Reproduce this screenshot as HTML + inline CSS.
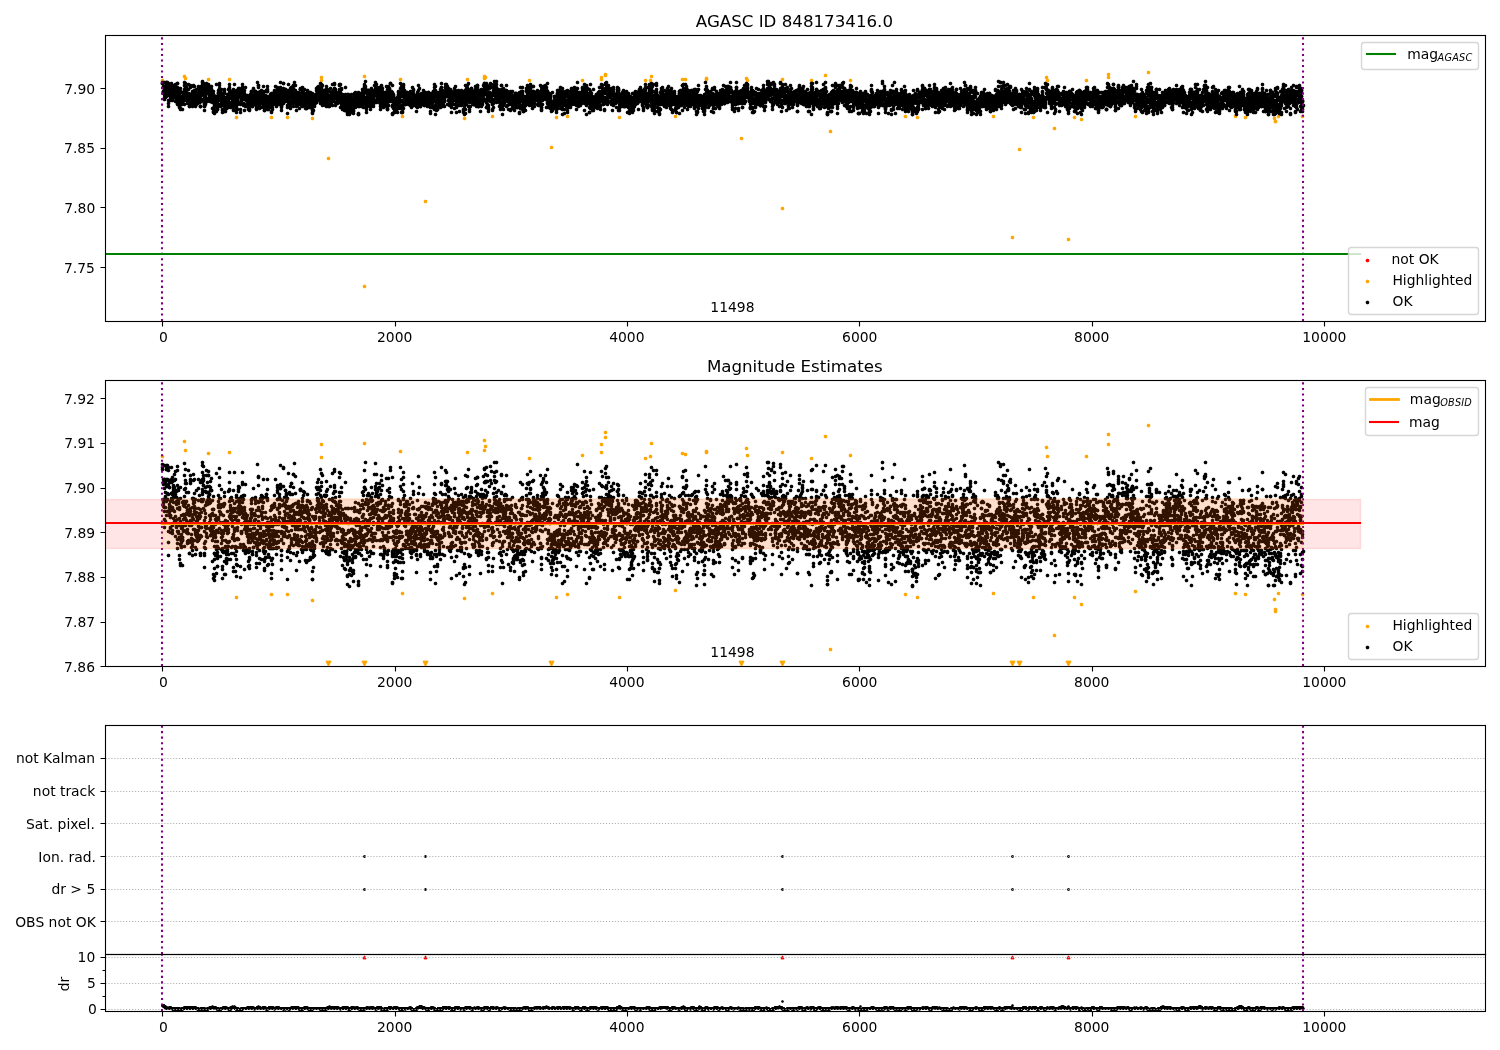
<!DOCTYPE html>
<html lang="en"><head><meta charset="utf-8"><title>AGASC ID 848173416.0</title>
<style>
html,body{margin:0;padding:0;background:#fff}
svg{display:block;will-change:transform}
text{font-family:"DejaVu Sans","Liberation Sans",sans-serif;font-size:13.889px;fill:#000}
.ti{font-size:16.667px}
.sub{font-size:9.722px;font-style:oblique;letter-spacing:.2px}
.tk{stroke:#000;stroke-width:1.111;fill:none}
.sp{stroke:#000;stroke-width:1.111;fill:none;stroke-linejoin:miter}
.pd{stroke:#800080;stroke-width:2.083;stroke-dasharray:2.083 3.4375;fill:none}
.gr{stroke:#b0b0b0;stroke-width:1.111;stroke-dasharray:1.111 1.833;fill:none}
.lf{fill:#fff;fill-opacity:.8;stroke:#ccc;stroke-opacity:.8;stroke-width:1.389}
.mk{fill:none;stroke:none;marker:url(#mk)}
.mo{fill:none;stroke:none;marker:url(#mo)}
.m4{fill:none;stroke:none;marker:url(#m4)}
.m3{fill:none;stroke:none;marker:url(#m3)}
.tu{fill:none;stroke:none;marker:url(#tu)}
.tv{fill:none;stroke:none;marker:url(#tv)}
.lm{fill:none;stroke:none}
</style></head>
<body>
<svg width="1500" height="1050" viewBox="0 0 1500 1050">
<defs>
<clipPath id="c1"><rect x="105" y="35" width="1380" height="286"/></clipPath>
<clipPath id="c2"><rect x="105" y="380" width="1380" height="286"/></clipPath>
<clipPath id="c3"><rect x="105" y="725" width="1380" height="229"/></clipPath>
<clipPath id="c4"><rect x="105" y="954" width="1380" height="57"/></clipPath>
<marker id="mk" markerUnits="userSpaceOnUse" markerWidth="9" markerHeight="9" overflow="visible"><path d="M-0.5 -1.5h1v1h-1zM-1.5 -0.5h3v1h-3zM-0.5 0.5h1v1h-1z" fill="#000"/><path d="M-1.5 -1.5h1v1h-1zM0.5 -1.5h1v1h-1zM-1.5 0.5h1v1h-1z" fill="#000" fill-opacity=".9"/><path d="M0.5 0.5h1v1h-1z" fill="#000" fill-opacity=".9"/><path d="M-0.5 -2.5h1v1h-1zM-2.5 -0.5h1v1h-1z" fill="#000" fill-opacity=".27"/><path d="M1.5 -0.5h1v1h-1zM-0.5 1.5h1v1h-1z" fill="#000" fill-opacity=".26"/><path d="M-1.5 -2.5h1v1h-1zM0.5 -2.5h1v1h-1zM-2.5 -1.5h1v1h-1zM1.5 -1.5h1v1h-1zM-2.5 0.5h1v1h-1zM1.5 0.5h1v1h-1zM-1.5 1.5h1v1h-1zM0.5 1.5h1v1h-1z" fill="#000" fill-opacity=".07"/></marker>
<marker id="mo" markerUnits="userSpaceOnUse" markerWidth="9" markerHeight="9" overflow="visible"><path d="M-0.5 -1.5h1v1h-1zM-1.5 -0.5h3v1h-3zM-0.5 0.5h1v1h-1z" fill="#ffa500"/><path d="M-1.5 -1.5h1v1h-1zM0.5 -1.5h1v1h-1zM-1.5 0.5h1v1h-1z" fill="#ffa500" fill-opacity=".9"/><path d="M0.5 0.5h1v1h-1z" fill="#ffa500" fill-opacity=".9"/><path d="M-0.5 -2.5h1v1h-1zM-2.5 -0.5h1v1h-1z" fill="#ffa500" fill-opacity=".27"/><path d="M1.5 -0.5h1v1h-1zM-0.5 1.5h1v1h-1z" fill="#ffa500" fill-opacity=".26"/><path d="M-1.5 -2.5h1v1h-1zM0.5 -2.5h1v1h-1zM-2.5 -1.5h1v1h-1zM1.5 -1.5h1v1h-1zM-2.5 0.5h1v1h-1zM1.5 0.5h1v1h-1zM-1.5 1.5h1v1h-1zM0.5 1.5h1v1h-1z" fill="#ffa500" fill-opacity=".07"/></marker>
<marker id="mr" markerUnits="userSpaceOnUse" markerWidth="9" markerHeight="9" overflow="visible"><path d="M-0.5 -1.5h1v1h-1zM-1.5 -0.5h3v1h-3zM-0.5 0.5h1v1h-1z" fill="#f00"/><path d="M-1.5 -1.5h1v1h-1zM0.5 -1.5h1v1h-1zM-1.5 0.5h1v1h-1z" fill="#f00" fill-opacity=".9"/><path d="M0.5 0.5h1v1h-1z" fill="#f00" fill-opacity=".9"/><path d="M-0.5 -2.5h1v1h-1zM-2.5 -0.5h1v1h-1z" fill="#f00" fill-opacity=".27"/><path d="M1.5 -0.5h1v1h-1zM-0.5 1.5h1v1h-1z" fill="#f00" fill-opacity=".26"/><path d="M-1.5 -2.5h1v1h-1zM0.5 -2.5h1v1h-1zM-2.5 -1.5h1v1h-1zM1.5 -1.5h1v1h-1zM-2.5 0.5h1v1h-1zM1.5 0.5h1v1h-1zM-1.5 1.5h1v1h-1zM0.5 1.5h1v1h-1z" fill="#f00" fill-opacity=".07"/></marker>
<marker id="m4" markerUnits="userSpaceOnUse" markerWidth="9" markerHeight="9" overflow="visible"><path d="M-0.5 -0.5h1v1h-1z" fill="#000"/><path d="M-0.5 -1.5h1v1h-1zM-1.5 -0.5h1v1h-1zM0.5 -0.5h1v1h-1zM-0.5 0.5h1v1h-1z" fill="#000" fill-opacity=".88"/><path d="M-1.5 -1.5h1v1h-1zM0.5 -1.5h1v1h-1zM-1.5 0.5h1v1h-1zM0.5 0.5h1v1h-1z" fill="#000" fill-opacity=".41"/></marker>
<marker id="m3" markerUnits="userSpaceOnUse" markerWidth="9" markerHeight="9" overflow="visible"><path d="M-0.5 -0.5h1v1h-1z" fill="#000"/><path d="M-0.5 -1.5h1v1h-1zM-1.5 -0.5h1v1h-1zM0.5 -0.5h1v1h-1zM-0.5 0.5h1v1h-1z" fill="#000" fill-opacity=".78"/><path d="M-1.5 -1.5h1v1h-1zM0.5 -1.5h1v1h-1zM-1.5 0.5h1v1h-1zM0.5 0.5h1v1h-1z" fill="#000" fill-opacity=".31"/></marker>
<marker id="tu" markerUnits="userSpaceOnUse" markerWidth="9" markerHeight="9" overflow="visible"><path d="M-0.5 -1.5h1v1h-1zM-0.5 -0.5h1v1h-1zM-1.5 0.5h3v1h-3z" fill="#f00"/><path d="M-1.5 -0.5h1v1h-1z" fill="#f00" fill-opacity=".88"/><path d="M0.5 -0.5h1v1h-1z" fill="#f00" fill-opacity=".88"/><path d="M-0.5 1.5h1v1h-1z" fill="#f00" fill-opacity=".4"/><path d="M-1.5 -1.5h1v1h-1z" fill="#f00" fill-opacity=".38"/><path d="M0.5 -1.5h1v1h-1zM-1.5 1.5h1v1h-1zM0.5 1.5h1v1h-1z" fill="#f00" fill-opacity=".38"/><path d="M-2.5 0.5h1v1h-1z" fill="#f00" fill-opacity=".28"/><path d="M1.5 0.5h1v1h-1z" fill="#f00" fill-opacity=".28"/><path d="M-0.5 -2.5h1v1h-1z" fill="#f00" fill-opacity=".25"/><path d="M-2.5 1.5h1v1h-1zM1.5 1.5h1v1h-1z" fill="#f00" fill-opacity=".05"/><path d="M-2.5 -0.5h1v1h-1z" fill="#f00" fill-opacity=".02"/><path d="M1.5 -0.5h1v1h-1z" fill="#f00" fill-opacity=".02"/><path d="M-1.5 -2.5h1v1h-1zM0.5 -2.5h1v1h-1z" fill="#f00" fill-opacity=".01"/></marker>
<marker id="tv" markerUnits="userSpaceOnUse" markerWidth="9" markerHeight="9" overflow="visible"><path d="M-2.5 -2.5h5v1h-5zM-0.5 -1.5h1v1h-1zM-1.5 -0.5h3v1h-3zM-0.5 0.5h1v1h-1zM-0.5 1.5h1v1h-1z" fill="#ffa500"/><path d="M-1.5 -1.5h1v1h-1zM0.5 -1.5h1v1h-1z" fill="#ffa500" fill-opacity=""/><path d="M-2.5 -1.5h1v1h-1zM1.5 -1.5h1v1h-1zM-1.5 0.5h1v1h-1zM0.5 0.5h1v1h-1z" fill="#ffa500" fill-opacity=".88"/><path d="M-1.5 -3.5h3v1h-3z" fill="#ffa500" fill-opacity=".39"/><path d="M-2.5 -0.5h1v1h-1zM-1.5 1.5h1v1h-1z" fill="#ffa500" fill-opacity=".38"/><path d="M1.5 -0.5h1v1h-1zM0.5 1.5h1v1h-1z" fill="#ffa500" fill-opacity=".37"/><path d="M-2.5 -3.5h1v1h-1zM1.5 -3.5h1v1h-1z" fill="#ffa500" fill-opacity=".37"/><path d="M-3.5 -2.5h1v1h-1z" fill="#ffa500" fill-opacity=".27"/><path d="M2.5 -2.5h1v1h-1z" fill="#ffa500" fill-opacity=".27"/><path d="M-0.5 2.5h1v1h-1z" fill="#ffa500" fill-opacity=".24"/><path d="M-3.5 -3.5h1v1h-1zM2.5 -3.5h1v1h-1z" fill="#ffa500" fill-opacity=".04"/><path d="M-3.5 -1.5h1v1h-1zM2.5 -1.5h1v1h-1zM-2.5 0.5h1v1h-1zM1.5 0.5h1v1h-1z" fill="#ffa500" fill-opacity=".02"/><path d="M-1.5 2.5h1v1h-1zM0.5 2.5h1v1h-1z" fill="#ffa500" fill-opacity=".01"/></marker>
</defs>
<rect width="1500" height="1050" fill="#fff"/>
<g clip-path="url(#c1)">
<path class="mo" transform="translate(.5 .5)" d="M162 80l22-4 1 2 23 1 21 0 92-2 0 3 43-4 36 3-164 38 35 0 16 0 25 1 90-2 65-37 17-3 1 1-1 1 45 2 53 0 23-6 0 1-4 2 0 2 44 1-181 38 28-2 64 1 11-1 52 1 32-41-1 4 32-1 3 0 21-1 0 1 40-1 1 2 35-1 29 1 14-5 25 5-175 36 155 15 216-54 1 3 39 0 22-6 0 3-203 39 12 1 76-1 40 1 41 0 7 2-27 9 94-56-13 44 100 0 10 1 33-1-4 2 1 3 0 0 27-5-974 42 36 128 61-85 126-54 190-9 41 70 230 29 7-88 49 90"/>
<path class="mk" transform="translate(.5 .5)" d="M162 83l0-1 0 1 1 9 0-1 0-4 0 6 0-2 0 1 0-6 0 1 1 1 0-2 0 8 0-1 0 6 0-13 0-4 0 4 0 11 1 0 0-7 0-1 1-7 0 1 0 3 0 10 0-14 0 1 0 9 1-1 0-3 0 6 0-12 0 1 0 11 0-3 1 9 0 3 0 3 0-20 0-3 0 7 0-6 1 2 0 9 0-1 0 1 0-7 1 8 0 3 0 1 0-4 0-4 0 4 0 3 1-12 0-4 0 3 0 4 0 0 1 9 0-5 0-7 0 11 0 2 0-7 0-8 0 6 1 1 0 4 1-11 0 3 0 9 0-3 0-5 1 8 0-1 0 5 0-4 0-7 0-6 0 2 1 7 0-4 0 9 0-6 0 7 1-2 0-10 0 7 0-11 0 0 0 20 0 1 0-2 1-13 0 11 0-9 0-3 1 8 0-2 0 7 0 6 0-9 0 8 0-12 0-1 0 8 1-10 0 12 0 5 0 1 0-6 0-15 1 8 0 3 0 5 0 0 1-2 0-1 0 0 0-3 0 11 0-7 0 0 0-10 1 3 0 5 0 0 0-2 0-5 0-1 1-1 0 5 0 8 0-11 0-4 0-4 0-3 1 5 0 1 0 4 0-6 0-3 1 4 0 2 0 4 0 4 0 2 0-4 0-3 0 8 1 0 0 2 0 1 0-3 1 2 0-9 0 7 0-16 0 5 0 8 1-3 0 0 0 9 0 3 0-12 0 4 0 8 1-12 0-8 0 0 0 1 0-2 0 12 0-3 0 8 1-1 0 3 0-6 0 0 1 6 0-2 0-11 0 11 0 3 0 1 0-10 0-3 1 6 0-2 0-6 0-5 0-1 1 1 0 4 0 2 0 3 0-2 0 6 0 3 1 4 0-2 0-13 0 3 1 10 0-3 0-12 0 6 0 4 0-2 1 6 1-9 0-8 0 6 0 10 0-6 0 3 0-11 1 14 0-12 0 6 0 6 0-3 1-3 0-9 0 7 0 7 0 5 0 0 0 0 0-5 1-2 0-4 0-9 0 15 0-9 0 7 0-8 1-2 0-5 0-2 0-1 0 8 0 3 0-6 1 0 0 8 0-3 0-6 0-2 0 3 0 3 1 11 0 4 0 2 0 4 0-4 0-3 0-6 1-2 0-2 0 3 0 6 0-14 0 10 0 6 0-5 0-10 1 12 0-2 0-7 0-9 0 7 0-5 0 13 1 3 0-8 0-6 1 2 0 3 0-7 0-1 0 1 1 6 0 4 0 4 0-2 0-5 1-4 0 13 0 0 0-4 0-5 0-5 1 2 0-3 0 9 0-6 0 12 1-7 0-2 0 6 0 4 0-3 0-4 0 13 1 3 0-12 0 13 0-18 0 0 0 1 0-4 1 13 0 3 0 3 0 3 0-1 0-6 0 0 0-6 1 3 0 3 0-5 0 0 0-4 0-1 0 2 1-2 0 1 0-13 0 16 0 11 1-2 0-9 0 2 0 4 0 3 0-2 0 0 0-3 1 0 0-7 0-4 0 3 0-4 0 8 0-10 0 14 0-11 1 6 0-4 0-7 0-5 0 2 1 21 0-9 0-6 0 7 1 7 0-12 0-4 0 6 0 5 0 3 0-2 1-1 0 4 0 6 0 2 0-3 0-4 0-3 0-9 1 0 0 5 0 7 0-12 0 3 0-3 0 4 1-8 0 1 0 21 0-18 0 7 0 5 0 3 0-16 1 19 0-14 0 7 0-2 0 2 0-5 1 1 0 8 0 0 0 0 0-1 1-4 0-6 0 8 0-5 0-6 1 13 0-1 0-2 0-5 0 1 0-11 0 9 1 4 0-13 0 7 0-4 0-3 0-2 0-3 1 23 0-12 0 0 0-2 0-2 1 15 0-2 0-7 0 1 0-3 0-4 1 6 0 4 0-3 0 6 0-12 0 10 1-8 0 12 0-6 0-11 0 20 0 1 1-8 0-10 0-8 0 12 1 1 0-3 0 16 0-4 0-2 0-2 0-5 0 2 1 8 0-17 0 2 0 13 0 4 0 3 0-21 1 18 0-5 0-2 0 0 0-3 0-4 0 4 0-2 1 5 0-5 0-3 0-2 0-3 0-1 0 1 1 6 0-3 0 0 0-4 1 7 0-4 0 13 0 5 0 3 0-9 1-3 0 0 0 0 0-10 0 8 0 2 0-6 1 2 0-5 0-1 0-3 0-3 0 3 1 7 0 0 0-3 0 14 0-2 0-13 0 14 0-6 1-8 0 9 0-6 0 1 0 3 0 7 0 6 1-5 0-1 0-9 0-8 0 12 0 6 0 1 1-6 0 0 0 5 0-5 1-3 0 2 0-2 0-2 0 6 0 4 1 3 0 1 0-7 0 1 1 4 0 2 0 1 0-3 0-2 1-5 0 1 0-7 0 3 0-1 0 7 0-5 0 1 1-7 0 3 0 0 0-4 0 0 0 3 1 0 0-3 0 10 0 5 0 0 0-1 1-4 0-3 0 0 0 6 0-6 0 6 0-16 1 15 0-2 0-6 0 1 1-4 0-1 0 6 0-6 0 4 0 3 0-7 1 12 0 3 0 2 0 1 0-4 0-5 0-6 1 6 0 0 0 0 0 3 0-21 1 14 0-11 0 7 0 6 0-6 0-5 0-2 0 12 1 6 0-9 0 9 0 4 0 1 0-3 1-3 0-2 0 2 0-11 0 7 0 1 1 4 0-13 0 2 0 15 0-11 0-1 1-1 0-3 0 0 0 2 0 3 0-1 1 6 0 0 0-15 0 12 0 7 0-13 0 12 0-4 1 0 0 4 0 3 0 3 0 0 0-2 0-1 1-2 0-9 0 0 0-1 0-4 0 5 1 6 0 1 0-5 0-8 0 1 0-1 0 17 0-7 0 2 1-16 0 5 0-2 0 8 0-1 0-5 0 18 1-3 0-2 0-7 0 1 0 11 0-5 1 3 0-6 0 0 0-1 1 4 0-10 0 10 0-8 0 2 1-4 0 9 0-10 0 14 0 5 0-1 1-4 0-3 0-3 0 8 0-9 0-2 0-5 1 11 0-1 0-5 0 2 0 3 0-7 0-3 0 0 1-3 0 3 0 0 0 3 0-4 1 8 0 0 0 3 0-17 0 10 1 4 0 4 0 2 0-2 0-1 0-5 1-7 0 3 0 0 0-5 0 0 0-2 0 1 0 3 1 10 0 3 0-4 0-2 0-1 0 5 0-5 0 6 1-8 0 0 0 2 0-7 0 3 1-2 0-3 0-1 0-5 0 6 0 0 0 5 1 7 0 0 0 2 0 3 0 1 0 4 0-3 0-2 0-3 1-6 0 2 0 0 0-5 0-2 0 2 1-5 0-5 0 0 0 20 0-6 1 4 0-1 0-5 0-4 1 10 0-5 0 1 0-4 0-4 0 0 1 1 0 4 0 5 0-9 0 0 1 1 0 6 0 4 0 4 0 2 0 6 1-20 0-9 0 17 0-5 0 1 0 7 0-10 0 6 1-6 0 10 0-3 0-11 0 6 0-6 1-2 0 9 0-7 0 16 0 2 0-15 1 4 0 6 0 0 0-16 0 13 0 2 0 0 0-15 1 11 0-4 0-1 0 3 0-3 0-3 1-5 0 0 0 3 0 5 0 13 0-3 0-9 1 2 0 6 0-4 0 3 0 0 0-19 1 10 0 6 0-13 0 5 0 5 0 4 1 3 0-10 0 11 0-8 0 7 0 1 0 0 0 7 0-4 1-1 0-6 0 0 0-2 1-4 0-1 0 3 0 7 0 2 1-6 0 6 0 4 0-6 0-9 0 1 0 5 0-3 1-8 0 1 0 0 0 0 1 4 0 12 0-9 0 5 0-8 0 6 0 3 1 4 0-1 0-2 0-12 0-4 0 5 1 7 0-5 0-5 0 9 0-8 0 6 1-7 0 5 0 2 0 4 0-7 0 12 1-7 0 6 0-3 0 7 0-7 0 1 1 0 0 3 0 3 0 0 0-6 0-9 0 3 1-6 0 9 0-5 0-2 0-1 1 5 0 3 0-3 0 8 0 3 1-12 0 2 0-5 0 11 0-2 1 4 0 2 0 0 0 0 0-4 0-3 0-8 1 8 0-2 0 6 0-10 0 0 1 8 0-6 0-3 0 14 0 3 0 3 0-1 1-2 0-4 0 0 0-7 0-3 1 1 0 6 0-3 0 4 0 2 0-2 1-8 0 0 0-2 1 6 0 2 0-12 0 12 0 0 0-14 0 10 0-4 0 1 1-1 0-1 0-2 0-2 0-2 0 1 0 4 0 1 0 0 1 0 0-7 0 7 0-2 1-3 0 9 0-1 0 3 0 1 0-5 1 5 0-2 0 5 0-13 0-1 0-6 1 1 0 3 0 4 0-3 0 7 0-2 1 9 0-2 0-15 0 11 0 4 0 3 0 2 0-13 0 0 1 12 0-1 0-6 0 4 1-11 0 0 0 3 0 0 0 2 1 2 0-2 0 4 0 4 0-13 0 15 0-15 1 0 0 15 0-12 0-4 0 3 0-6 0 20 0-5 1-7 0 8 0 0 0 0 0-3 0-10 1 7 0 3 0-2 0 8 0 1 0-5 1 4 0 1 0-11 0-4 0 4 1-7 0 13 0 3 0-1 0-5 1-3 0 7 0-4 0 3 0-8 1 8 0-9 0-8 0 7 0 14 0-11 1-2 0 6 0 2 0 1 0-11 0 6 1-13 0 1 0 4 0 7 0-6 0-1 1 4 0 0 0 10 0-4 0 7 0-14 0-2 1 9 0 4 0-5 0-3 1 8 0-3 0 4 0-3 0-4 0 6 0-3 1-6 0-1 1-2 0-5 0-1 0 5 0 10 0-3 0 0 0-4 1 1 0 0 0 4 0 5 0 5 0-15 0-8 1 13 0-8 0 6 0 9 0-1 0-15 0 12 1 5 0 4 0-8 0-7 0 5 0 4 1-8 0 0 0 4 0 8 1 0 0-2 0-4 0 9 0-3 0-11 1 5 0-4 0-10 0 7 0 8 0-5 0 13 0-15 0 8 1 3 0 0 0-6 0 6 0 1 1 5 0 2 0-5 0 3 0-8 0-10 0 2 1 8 0 0 0-2 0-8 0 6 0-2 1 2 0 7 0 4 0 3 0-4 0-2 1 2 0-5 0-3 0-5 0-1 1 16 0-18 0 5 1 11 0 0 0-8 0-2 0 7 0-1 0-7 0 5 0 4 1 3 0 2 0-3 0-3 0-4 0-1 0-5 0 3 1-7 0 4 0-2 0 3 0-4 1 3 0-5 0 13 0 0 0 2 0-1 1-3 0-2 0-3 0 2 0 1 1 4 0-7 0 7 0-8 0-3 0 1 1-3 0 22 0-13 0 13 0-1 0-7 1-3 0-5 0 8 0-11 1-2 0 7 1 5 0 1 0-3 0-6 1 2 0 2 0-8 0 3 0 0 0-3 0-4 0 3 1-2 0 7 0-2 0-6 0 5 0 10 0 3 1-6 0 2 0-15 0 0 0-2 0-2 1-3 0 5 0 2 0 4 0 7 0-2 0-5 1 12 0-13 0 7 0 3 0 4 0 2 0 5 0-3 1-4 0-3 0-5 0-3 0-4 0 3 1-3 0 7 0 1 0 2 0-8 0-2 0 4 1 8 0-12 0 4 0 8 0 4 0-9 1 3 0 2 0 3 0 0 0 4 1-21 0 4 0 3 0 11 0-7 0-8 0 5 1-6 0 1 0 12 0-3 0-7 1 11 0-8 0 1 0 1 0 8 1-4 0-9 0 2 0 0 0-10 0 15 1-5 0 0 0 0 0-4 0 9 0-12 0-6 0 7 1 13 0-15 0-3 1 10 0 4 0-5 0 3 0-7 0 10 0 0 1-11 0 11 0-11 0 3 1 5 0-9 0 12 0-7 0 10 1-12 0 12 0 7 0-5 0 2 0-7 0-5 0 2 1 3 0-14 0 1 0 5 0 11 0-13 0 17 1-18 0 6 0 0 0-2 0 10 0-5 0-6 1 10 0-5 0 8 0-5 0 7 0 0 0 1 1-3 0-3 0 5 0-2 1-10 0-2 0 0 0 4 0 3 0-3 1-10 0 13 0-3 0 6 0-4 1 4 0-3 0 3 0 3 0 4 0 0 0-1 0-2 0-17 1-3 0 19 0-9 0-5 0 2 0 1 0-1 1 8 0-11 0-2 0 11 0-10 1-6 0 0 0 13 0 0 1 2 0-5 0 8 0-3 0-5 0-2 1-6 0 20 0 1 0 0 0 7 0 1 0-9 0-13 1 2 0 6 0 8 0-6 0-5 0 8 0-10 0 1 1 4 0 12 0-1 0 1 0-9 1 2 0 3 0 0 0 3 0-1 1-12 0 3 0 2 0-5 0 2 0 11 1-14 0 8 0 1 0 2 0 4 1-7 0 3 0-14 0-2 0 4 0-5 0 11 0-7 1 2 0 5 0-2 0 1 0-3 0-1 0 3 1 8 0-2 0 1 0-14 0-1 0-4 0-5 1 3 0 3 0 11 0-5 0 6 0-7 0 7 0 4 0 7 1-1 0-5 0-5 0 4 0 2 0 5 0-16 1 12 0-5 0-12 0-2 0-4 0 19 0-20 0 3 0 4 1 2 0 4 0 0 0 1 0-2 0 8 0-11 0-3 1 12 0-3 0 5 0 0 1-11 0 3 0 5 0-9 0 11 0-3 0-8 1 0 0 6 1 6 0-6 0 3 0 2 0-9 0 0 1 1 0-2 0 5 0-2 0 1 1-6 0 10 0 4 0 0 1 2 0-1 0-2 0 0 0-5 1 3 0-4 0-1 0 2 0-5 0-7 0 5 1 7 0 6 0-11 0-4 0-1 0 4 0 5 0 7 1-3 0-3 0-4 0 8 1-8 0 3 1 7 0 1 0 0 0-1 0-4 0 10 0-12 0-3 1 11 0-15 0 10 0 2 0 0 0-10 1 2 0-2 0-4 0-5 0 9 0 5 0-1 1 3 0-7 0 2 0-8 1 12 0 3 0-3 0 4 0 2 0 0 1-13 0 2 0 4 0-2 0 7 1-5 0-2 0-1 0 7 0-8 1-2 0-3 0 11 0 3 1 1 0 0 0-2 1-7 0 0 0 2 0 3 0-2 0-3 0-3 0-1 1 1 0 2 0 5 0 0 1 3 0 2 0 0 0 1 0-3 0-1 0-3 1-7 0 0 0 5 0-3 1-1 0 3 0 10 0-7 0-6 0 10 1 3 0 5 0-5 0-4 0-2 0 7 0 6 0-7 0-9 1-1 0-2 0 11 0-3 1-6 0-3 0 10 0 4 0-14 0 6 0 8 1-6 0-10 0 7 0-7 0 8 0-7 1-2 0-6 0 3 0 8 0 11 0-9 0 4 0 8 1-19 0-4 0 5 0 3 0 7 0 4 0 9 1-7 0-4 0-8 0-3 0 14 0 4 0-10 1 0 0 0 0 9 0 0 0-7 0-5 0-4 1 2 0-3 0 5 1 8 0-4 0 2 0 3 0-1 0-1 0-3 0-5 1-3 0 5 0 3 0 6 0-15 0-3 1-6 0 4 0 10 0-1 0-2 0-7 0 16 1 3 0-5 0-2 0-9 1 14 0-12 0 2 1 3 0 4 0 5 0-10 0 4 0-2 0 3 0-4 1-6 0-1 0-3 0-3 0 3 0 7 1-2 0-8 1 2 0 10 0 8 0-10 0 2 0-8 1 1 0-1 0 1 0 11 0-9 0 9 1 5 0-4 0 3 0-10 0 10 0-13 0 8 0-2 1-8 0 4 0 3 0 2 0 7 1 2 0-3 0 0 0 8 0-9 0-10 0 1 0 7 1-10 0 6 0 2 0 4 1 1 0-5 0-5 0 6 0-8 1 16 0-13 0 1 0-8 1-2 0 14 0-8 0-2 0 10 0-2 0 6 1 3 0 5 0-6 0-4 0-10 0 7 0-6 1 3 0 9 0-4 0-5 0-3 0 0 1-3 0 1 0 1 0 6 0-6 1 5 0 14 0-14 0 5 0-2 0 5 0-9 1-2 0 6 0 3 1 1 0 0 0-14 0 2 0 13 0-2 1-2 0-3 0 1 0 0 0-3 0 0 1-2 0-2 0-1 0 2 0 16 0 3 0-2 1-9 0-4 0 6 0 3 0 3 0 5 1-1 0-4 0-11 0 5 0-13 0-5 0 5 0 5 1 5 0 4 0-3 0-2 0-6 0-5 0 4 1 6 0-2 0 0 0-5 0-3 0-3 1-2 0 17 0 6 0-11 0-3 0 3 1 14 0 2 0-20 0 11 0 4 0-11 0-4 1-2 0 5 0 12 0-8 0 2 0-2 1-2 0-5 0-2 0-1 0 0 0 11 1-5 0 0 0 9 1-5 0 2 0 1 0 3 0 0 0-2 0-11 0 0 1 13 0 0 0-8 0-4 1 1 0-4 0 9 0 5 0-8 0-9 1 2 0 3 0 6 0 9 0-6 0 5 0-4 1-8 0-3 0-5 0 0 0 2 0 5 0 4 0 3 1 1 0 6 0-3 0-2 0 5 0 0 1-1 0-2 0-3 0 2 0-9 0-3 0 5 1 16 0-13 0-2 0-3 0 3 0-6 1 11 0 5 0-1 0-15 0 3 0 2 0-6 0 1 1 11 0 0 0 3 0-2 0-4 0-7 1 4 0-10 0 5 0 0 0 8 1 1 0-5 0 6 0-6 0-3 0-4 0-4 0 0 1 3 0 5 0-2 0-2 1-4 0 7 0 3 0 9 0 5 0 0 0-5 0-3 1-10 0 5 0-9 0 10 0 10 0-19 0 11 0 7 0-8 1 11 0 2 0 2 0-6 0-5 0-6 1 4 0-6 0-4 0 4 1 5 0-11 0 15 0-4 0-14 0 11 0 2 1-9 0 12 0-6 0 0 0-9 0 12 0 5 1 2 0-4 0 5 0-11 0 16 0 1 1-3 0-4 0-3 0-10 0 5 0 5 1 1 0-10 0-7 0-3 0 4 0 6 0-5 0 2 1 6 0 1 0 3 0-4 0-7 1-3 0 3 0-6 0 10 0 11 0-13 0 9 1-2 0 0 0 3 1-6 0-4 0 4 1 3 0-5 0 15 0-5 0 1 0-9 0 5 0 2 1-3 0 0 0 4 0 3 0 1 0 4 1-20 0-4 0 0 0 5 0 4 0 0 0 12 0 2 1-14 0-1 0 0 0 10 0-7 0 2 0 10 0 6 1-5 0-4 0-5 0 2 0-14 1 2 0 4 0 3 0 2 0 4 0-12 1-1 0 10 0-4 0 4 1-7 0 13 0-9 0-6 0-6 0 5 1 10 0 5 0-8 0 4 0-10 0 3 1-1 0 3 0 5 0-1 0 9 1-12 0 4 0 2 0-3 0 4 1-13 0 18 0-15 0 0 0 4 0 12 1-17 0 4 0 7 0 0 0-3 0-7 1 1 0-4 0 17 0-3 0-6 0 9 0-8 1 2 0 6 0 0 1-5 0 4 0-11 0 14 0-14 0 3 0-3 0 9 1-3 0-3 0-6 0 0 1 3 0 2 0 9 0-14 0 12 0-4 1 2 0 4 0 0 1-6 0-2 0-4 0 3 1-3 0-3 0 12 0 0 0 9 0-1 0-6 0-4 1-6 0 12 0-21 0 14 0-3 0 3 0 7 1-8 0 5 0-11 0 3 0-6 0 3 1-3 0-4 0 4 0 2 0 2 0 6 0 5 0 3 1 2 0 0 0-3 0-5 0-1 0-3 0 6 0-6 1-3 0 13 0-3 0-4 1-3 0 0 0 11 0-5 0 0 0 0 1-1 0-14 0 11 0-5 0-5 0-3 1-3 0 2 0 4 0 2 0-6 0 16 0-6 0-2 0 8 1 0 0-4 0-12 0 4 1 7 0 7 0-4 0-6 0-5 0-3 1-3 0 4 0 4 0-3 0 1 0 3 0 2 1 8 0-1 0-4 0 2 0-2 0 7 1-5 0-14 0 22 0-11 0 0 0-3 1-8 0 5 0 3 0 9 0-12 1 8 0 7 0-14 0 11 0-7 0-4 0 0 1 3 0 5 0-8 1 7 0 0 0 0 0-3 0-4 1-2 0 1 0 2 0 5 0 6 1-2 0-5 0 0 0 4 0-7 0 11 0-11 1 0 0-1 0 1 0 3 1-12 0 6 0 9 0 3 0-5 0 2 0 4 0-1 1 4 0 3 0-1 0-2 0-3 0-8 0-6 0-3 1 0 0 3 0 6 0 4 0-7 0 11 0-8 0 2 1-5 0 2 0-9 0 0 0 4 1-1 0 0 0 3 1 4 0 2 0-2 0 3 0-4 0-10 1 4 0-2 0 5 0 3 0 12 1-16 0 1 0 11 0-6 0-14 0 19 0-11 1 9 0 6 0-6 0 5 0 2 0-5 0-8 0 6 1-2 0-1 0 0 0 7 0-11 1 2 0 0 0 3 0 3 0-7 0 2 0 8 0 4 1 3 0-2 0-3 0-5 0 1 1 3 0 3 0 2 0-2 0-4 0-12 0 9 1 7 0-6 0-1 0 0 1-1 0-4 0 11 0-10 1-1 0 0 0 9 0 0 0-2 1-3 0-4 0 9 0 2 0 3 0 2 1-4 0-7 0-8 0 8 0-2 0-6 0-3 1 7 0 6 0-13 0 13 0 2 0-10 1-3 0 7 0 6 1 3 0-10 0-9 0 5 0 1 0-8 0 14 0-10 1 12 0-8 0 8 0-5 0-5 1-5 0 3 0 10 0 5 0 3 0-8 0 0 0 13 1-17 0 0 0-3 0-2 0 12 1 0 0 9 0-13 0 9 0-11 0-2 1 0 0-3 0-1 0-1 0 2 0 9 0 3 1 1 0-3 0-3 0 0 0 3 0-7 0-5 1-1 0 1 0 2 0 12 0 2 0 3 0 2 1-15 0 6 0-12 0 16 0-12 0 5 0 0 1-5 0 10 0-8 0-2 0 10 0-8 0 0 1 6 0-11 0 8 0 3 0 1 0 3 0-3 1-2 0-3 0-8 0 2 0 0 0-5 0 1 1 6 0-4 0-2 0 6 0-4 0 13 0-7 1 3 0 2 0-14 0 15 1-10 0-6 0 9 0 7 0-2 0-3 1-5 0-4 0 2 0 0 0 7 0 6 1 5 0-7 0 3 0-3 0-14 0 7 0-5 1-2 0-6 0 10 0 4 0 5 0-3 1 3 0 5 0-2 0-3 0-2 0-5 1 2 0 9 0-13 1 13 0-12 0 0 0 2 0 3 0 5 1-3 0 3 0-2 0-5 0 6 0 0 1-2 0-8 0-2 0-3 0 1 0 5 1 3 0-6 0 8 1 12 0-14 0 7 0-8 0-1 0-6 0-4 1 3 0 5 0 8 0-2 0 3 1-12 0-3 0 15 0-16 0 5 0 15 0 9 0-11 0-11 1 3 0-2 0 10 0-10 0-5 0 8 0 2 1 1 0 4 0-6 0 2 1 4 0 9 0 0 0-11 0 6 0-18 0 5 1-10 0 7 0 5 0-1 0-3 0 13 0 3 0-6 1 4 0-7 0 0 0-1 0-5 1 3 0 6 0-4 0 6 0-4 0 10 1-21 0 18 0 3 1-12 0 7 0-3 1-6 0 11 0-2 0-3 0-2 1-4 0-2 0 0 0 3 1 8 0 0 0-2 0-1 0-3 0 9 1-2 0-6 0 2 0-2 0-6 0-2 1 10 0-11 0 6 0-10 0 6 0 3 1 9 0-5 0 6 0-9 0 12 0-12 1 4 0-1 0 1 0-7 0-3 0-4 0-3 1 1 0 3 0 6 0 7 0 0 0-4 1 0 0 7 0-13 0 6 0 1 0-5 0 10 1-4 0-6 0 10 0 6 0 1 0-10 0-9 1 12 0-1 0-5 0-9 0-4 0-1 1-1 0 3 0 3 0 5 0-5 0 2 0 1 0-3 0 12 1-1 0-1 0 4 0-3 0-5 0 10 1-9 0 7 0-7 0-3 0-5 0-2 1 5 0-1 1 8 0 0 0-1 0 1 0 4 0-7 1-3 0-2 0 4 0-5 0 16 0-3 1-6 0 15 0-10 0-1 0-7 0 8 1-13 0 2 0 16 0-2 0-8 0-4 0 8 1-5 0 2 0 1 0 1 0 4 1-4 0 2 0-2 0-3 0-1 0 9 0-9 0 4 1-4 0 13 0-13 0 0 0 8 0-8 1-1 0-6 0 2 0 2 0 10 0-12 0 6 1-3 0-2 0-2 0 1 0 1 0 3 0 3 0 14 0-12 1-4 0 6 0 4 0 3 0 3 0-16 0 13 1-2 0-7 0 4 0-8 0 2 0 6 0 4 1-5 0 1 0 4 0-12 0 11 1-13 0 5 0-3 0 7 0-3 1-8 0 5 0 10 0 0 0-3 0 4 1 0 0-14 0 14 0-7 0 1 1 6 0-6 0-5 0 8 0-6 0-2 1-3 0 3 0 7 0-11 0 14 1 7 0-6 0-6 0 1 0-3 1 9 0-14 0 4 0-2 0-1 0 12 1 0 0-3 0 1 0 9 0-3 0-14 0 4 0 1 1-1 0 10 0-12 0-2 0 8 0-3 1 7 1-7 0 3 0 4 0-15 0 19 0-10 0-4 0 8 1-13 0 4 0 10 0 3 0-3 0 0 1-8 0 7 0-10 0-2 0 2 0 1 0 5 1-11 0 8 0 2 0 3 0-4 0-8 0 11 1-11 0 1 1-1 0 3 0 3 0 4 0-6 0 0 0 7 1-11 0 0 0 8 0 9 1-20 0 1 0 3 0 2 0 6 0 0 0-11 1 8 0 0 0-9 0-2 0 9 1-5 0 0 0 3 0 0 0 4 0 1 0-1 1 7 0-1 0-9 0 7 0 0 0-12 0 11 1-6 0-3 0 6 0 10 0 2 0-3 1-9 0 2 0-11 0 8 0 6 0-12 1-3 0-1 0-3 0 9 0-3 0 3 0 0 1 10 0 2 0-5 0 0 0-6 0 3 0-2 1 5 0 1 0 3 0 3 0 0 0 0 0-1 0-3 0-5 1-11 0 0 0 10 0-4 0 8 0 4 1-13 0-7 0 10 0 3 0-7 0-2 0-5 1 3 0 8 0 5 1-17 0 5 0 2 0 3 0 6 0-6 0 13 0-3 1 5 0 2 0-1 0-6 0 1 0-7 0-11 0 11 1-6 0 8 0 2 0-4 0-13 0 11 1 5 0 6 0 4 0 3 0-3 0-3 0-5 0-2 1 4 0-10 0 8 0-6 1-5 0-8 0 2 0 4 0 5 0 4 0-5 0 1 0-2 1 7 0-1 0 9 0-5 0 9 0-15 0 3 0-4 1 8 0 1 0-3 0 7 0 3 1-1 0-2 0-9 0 14 0-9 0 6 0 4 1-5 0-5 0-8 0 1 0-5 0 10 0-5 1-3 0 6 0-6 0-1 0-3 0-2 0 3 0 2 0 1 1 1 0-8 0 6 0 4 0-6 0 13 0-4 1-3 0-1 0 8 0-3 0 2 0 1 1-4 0 6 0-2 0-4 0-10 1 10 0 2 0-4 0-3 0-1 1-3 0 16 0-15 0 0 0 12 0-8 0-2 1 8 0-9 0 3 0-1 0-4 0-3 1-2 0 15 0-2 0 2 0 3 0 0 1-6 0 1 0-9 0 4 0-2 0 7 0 6 1 1 0 2 0-3 0 0 0-8 0 5 1-11 0 3 0-6 0 9 0 0 0 12 1 3 0-12 0 0 0 10 0-6 0-2 0-9 1 1 0 2 0 1 1 4 0 3 0-11 0-2 0 8 1-3 0 8 0-2 0 2 0 4 0-12 0 14 1-2 0-2 0-9 0 15 0 0 0-13 1-3 0 11 0-6 0 2 0 3 1-7 0 8 0-1 0-3 1 10 0-13 0-7 0-2 0 0 0 2 0 10 0-7 1 1 0-7 0 15 0-12 0 1 0 3 1 8 0-8 0 0 0 6 0-3 1 2 0 8 0-20 0 4 0-3 0 8 0-14 0 0 1 3 0-4 0 5 0 3 0 3 0 3 1 5 0 4 0-3 0-2 0 0 0-4 1 3 0-1 0-3 0-5 0 2 0-4 0-2 0-4 1 2 0 8 0-6 0 12 0-7 0-5 1 21 0-12 0 6 0 2 0-8 0-5 1 14 0-11 0-5 0 11 0 4 1-5 0 0 0-9 0 4 1-2 0 4 0 2 0 0 0 4 0 3 0-2 1-14 0 14 1-14 0 14 0-3 0-6 0 2 0 6 1-9 0 0 0-2 0 7 1 4 0 1 0 1 0 3 0-1 0-3 0-4 0-1 0-10 1 7 0-2 0-5 0 2 0 5 0 0 1-2 0-4 0 2 0 14 0-5 0 13 0-16 0 13 1 1 0-9 0 8 0-14 0 3 0 0 0-9 1-6 0 4 0 14 0 5 0-10 0-3 0 3 1 7 0-6 0 3 1 1 0 0 0-3 0-5 0 1 1 3 0 6 0 0 0 0 0-5 1 8 0-3 0 3 0-12 1 2 0 13 0-12 0-3 0 7 0-2 1 6 0 4 0 3 0-4 0-1 0-6 0-9 1 13 0-6 0 4 0-10 0 3 0-9 0-7 0 12 0 3 1-5 0-3 0-3 0 18 0-16 1 3 0 4 0-2 0 0 0-3 0 9 0 3 1-5 0 5 0 5 0-7 1 5 0-3 0-3 0-5 1 3 0-6 0 13 0-12 0 5 0-3 1 0 0 17 0-9 0-2 0 4 1-8 0-8 0 5 0 7 0-11 0 9 0 3 1 2 0 5 0 4 0-4 0-3 0-1 1-15 0-2 0 7 0 10 0-8 0 3 1 2 0 2 0 1 0-6 0 1 0 9 0-14 1 1 0-4 0 12 0 1 1-11 0 12 0-7 0-3 0 0 1 5 0 0 0-1 0 0 0 7 0-3 0-3 1 4 0 3 0 1 0-15 1 0 0 0 0-3 0 13 0-6 0-2 1 2 0 7 0-2 0-1 0-2 1-10 0 1 0 3 0-2 1 4 0-5 0 7 0-12 0 15 1-7 0 10 0 0 0 0 0-3 0-3 1-1 0-4 0 5 0 4 0-15 1 13 0-5 0-4 0-1 1 9 0 4 0-11 0-5 0 3 1-3 0 8 0 0 0 6 0-3 0-9 0 6 1 5 0-3 0-5 0 10 1-10 0-3 0-1 0-5 0 5 0 4 0-1 0 9 0-9 1 0 0 1 0 0 0 5 0 0 0 5 0-10 0 1 1 7 0 4 0 4 0 2 0-6 0-4 0 6 1-11 0-2 0 12 0-12 0 5 1-3 0 1 0 0 0 3 0 13 0-14 0 4 1 7 0-4 0 0 0-4 0-9 0 1 0 9 1-12 0-2 0-5 0 5 0 4 1 3 0 2 0 7 0 0 0-10 0 5 0-2 1 3 0-6 0 10 0 7 0-7 0-4 0 2 0 7 1-6 0-11 0 10 0 1 0-3 1-6 0 3 0-2 0 2 0 0 0-5 1 12 0-13 0 9 1-7 0 5 0 5 0 5 0-4 0-3 0 7 1-7 0-11 0 5 0-6 0 7 1-6 0 9 0-8 0 7 0-12 0 18 1-6 0-5 0 9 0 0 0-7 1-5 0-3 0 10 0-13 1 5 0 3 0 0 0 6 0-12 0-1 0 4 1 4 0 4 0-3 0 0 0 0 0 3 0 1 0-5 1 7 0 1 0-6 0 7 0-1 1 1 0-4 0 11 0-1 0 0 0-3 0-1 0 5 1-7 0-2 0-6 0-3 0-3 0 3 0 5 1 0 0 13 0-1 0-8 0 13 0-9 0-13 1 8 0 1 0 12 0-20 0 21 1-9 0 8 0-9 0-8 0 8 0-3 1 7 0-13 0 2 0-3 0 7 0 5 0 3 1-3 0-6 0-10 0 5 1 4 0 2 0-2 0-3 0 7 0 1 1-13 0 5 0 3 0-2 1-2 0 6 0-5 0 8 0 2 1 1 0 0 0 0 0 0 1-7 0-5 0-3 0 6 0 0 0 4 0 2 1 2 0-6 0-3 0 7 0-4 0-8 0 11 1-2 0-10 0 17 0-12 0-9 0 3 0 4 1 3 0-3 0-2 0 8 0 4 0 5 0 3 1-4 0-4 0-4 0 2 0 1 0-3 1-5 0 4 0 0 0-2 0-5 1-1 0-5 0-3 0 7 0 7 0-6 1-8 0 15 0-4 0 0 0 7 0-16 0 7 1 3 0-6 0 0 0-2 0 2 1 8 0 4 0-11 0 0 0 13 0-7 1-3 0-8 0 1 0 5 0 10 0-9 0 4 1 4 0 0 0 4 0 7 0-3 0-3 0-5 1-5 0 5 0 0 0 6 0-12 0-3 0-6 0-1 1 4 0 3 0 6 0-11 0 14 0 0 1 2 0-9 0 9 0-3 0 2 0 2 0 1 0-2 1-1 0-2 0-8 0 1 0 0 0 4 1 9 0 1 0-7 1 1 0-4 0-3 0 11 0-7 0-4 0 11 0-8 0 7 1-8 0 13 0-4 0-1 0-3 0 0 1-7 0 5 0 0 0-7 0-1 0-6 0 1 0 6 1 12 0 3 0-11 0 12 0-5 0 1 0-5 0 15 1-4 0-14 0-3 0-4 0-2 0 3 1 3 0 10 0-4 0-1 0-5 1 7 0 1 0-3 0 4 0-7 0 11 0-3 0-8 1-1 0 12 0-12 0-7 0 6 0-2 0 12 1 2 0-7 0 15 1-9 0-14 0 8 0 0 0 4 0-9 0 7 1-3 0-2 0 16 0-16 0 9 0 4 0 1 1 2 0-4 0-1 0-3 0-3 1 2 0-4 0-3 0-3 0-4 1 3 0 4 0 8 0 3 0-1 0-7 1 3 0 6 0-8 0-4 0 15 1-9 0 5 0 1 0-9 0 7 1-3 0-8 0 2 0 6 1 2 0-9 0 2 0 2 0-5 1 2 0 5 0-8 1 12 0 3 0 6 0 0 0-7 0-4 0-5 0 4 1 2 0-4 0-3 0-5 1-2 0 8 0-4 0-6 0 1 0 5 0 11 1-1 0-11 0 9 0-1 1 3 0 0 0-8 0 10 0-8 0 1 1-7 0-1 0 0 0 7 0-7 0 3 1 2 0 5 0-12 0 18 0-5 0-1 1 0 0 3 0 3 0 0 0-2 0-3 0-3 1-5 0 4 0-3 0 3 1 2 0 9 0-2 0-11 1 7 0 2 0-2 0 0 0-11 0 16 1-8 0 9 0-11 0-2 0 0 0 18 1-5 0 5 0-6 0-7 0 5 1-5 0-6 0 9 0-1 0-5 0 2 0-2 1 19 0-13 0 1 0-11 0-2 0-3 0-3 1 4 0-4 0 10 0-4 0 3 0 6 0-4 0 9 1-6 0 7 0 5 0-1 0-8 0 6 1-6 0-3 0 4 0 3 1-1 0-11 0 1 0 1 0 10 0-9 0 3 1-1 0 0 0-6 0 0 0-2 0 2 0-2 0-7 1 12 0 7 0 0 0-2 0 7 1-11 0-4 0 0 0 11 0 2 1-5 0 7 0-13 0 12 0 3 1 0 0-11 0-1 0-2 0 6 0-1 1 4 0 3 0-4 0-12 0 13 0 0 1-5 0-5 0 2 1 6 0-2 0-10 0-5 0 5 0 4 0 8 0-4 1 7 0-3 0 6 0-15 0 3 1 4 0 5 0-14 0-2 0 5 0-11 0 5 1 4 0 15 0-10 0 7 0-8 0 6 1 13 0-14 0 6 0-5 0 12 0-1 0-9 0 11 1-6 0-10 0-3 1 3 0-4 0 13 0-9 0 3 0-3 0 7 1 6 0-8 0-9 0 12 1-9 0 14 0-19 0 12 0-1 0 8 0-12 0 0 1 5 0-13 0 4 0 6 0-9 0-7 0 22 1-4 0 0 0-9 0-4 1 8 0-6 0 8 0-3 0 6 0-5 0-7 1-5 0-1 0-2 0 4 0 4 0 4 1 8 0-8 0 8 0-6 0-5 0 9 1 7 0 5 0-7 0-4 0-11 0 7 0-8 0 1 0-6 1 4 0 6 0 0 0 1 0-4 0 11 0-4 1-12 0-2 0 4 0-3 0 4 1 6 0-5 0 9 0-1 0 0 0-6 0 3 1 0 0 3 0-6 0-7 0 14 0-3 1 4 0 1 0-11 0-8 0 4 0-3 1 8 0-10 0 13 0-2 0 4 1 8 0-17 0 1 0 9 0-10 0 12 0-2 1-3 0 6 0-4 0 8 0-15 0 2 0 7 1 6 0-13 0 11 0-1 0 1 0 3 0-1 0-1 1 2 0 2 0-6 0-7 0 8 0-8 0 4 1-3 0 6 0-9 0-3 0 2 1 4 0-6 0 18 0 3 0-11 0-1 1 7 0-5 0-14 0-2 0 9 1-8 0 4 0 7 0 14 0-14 0-4 0-2 0 2 1-3 0 3 0 8 0-2 0 0 0-8 0 5 1 6 0 3 0 1 0 4 0-3 0-2 0-3 1 1 0-11 0 3 0 4 0 4 0-7 1 4 0-2 0-6 0 7 1-11 0 6 0 0 0 10 0-9 0-3 0 0 1 9 0 4 0 1 0-4 0-5 0 11 0-3 1-5 0 6 0-7 0 14 0 0 1 0 0-10 0 4 0 0 0-11 0 0 0-3 0 3 1-4 0-1 0 6 0 9 0-7 0 3 0 0 1-9 0 14 0-12 0 7 0 2 1-1 0 2 0 6 0 0 0-3 0-4 0-6 0 2 1 0 0-1 0-3 0-3 0 17 0 3 1-2 0-2 0-4 0 0 0 3 0 0 1-15 0-2 0 1 0 4 0 2 0 9 0-12 0 10 0-4 1 0 0 0 0 12 0-9 0-5 0 2 0-2 1 4 0-4 0-5 0 10 0 3 0-4 1 3 0-10 0 4 0 8 1 3 0-9 0 5 0 3 0 4 0-2 0-3 1-2 0-5 0 9 0-13 0-3 0 10 0-4 0 3 1-14 0 9 0-8 0-6 0 11 0-7 1 3 0 5 0 0 0-4 0 6 0 7 0-4 1 4 0-1 0 0 0-4 1 3 0 1 0-6 0 7 0-10 1 6 0-6 0-1 0 1 0 3 0 0 1 3 0-9 1-3 0 3 0 2 0 2 0 2 0 5 1 3 0-6 0 12 0-7 0-2 1 1 0 0 0-6 0-3 1 5 0 2 0 1 0-6 0-2 0-1 0-4 0 1 0 3 1 9 0-5 1-8 0 0 0-10 0 2 0 11 0 11 0-5 1 3 0-5 0 7 0-8 0-1 1-2 0 2 0-5 0-2 0-3 0 4 0 3 0 2 0 3 1 2 0 7 0 1 0 4 0-3 0-2 0-2 1-4 0 1 0 1 0-2 0-3 1-6 0 2 0 5 0-5 0 11 0-7 1-2 0 1 0 16 1-15 0 3 0 4 0-1 0-2 1-12 0 3 0 0 0 8 0-6 0 3 1 11 0-5 0 10 0-4 0-13 0 1 0 3 1 2 0-6 0-6 0-6 0 6 1 2 0-2 0 18 0-9 0 6 0-10 1 3 0-5 0 8 0-6 0-14 0 17 1-8 0 10 0 3 0-1 0 10 1-24 0 2 0 8 0-3 0 0 0-3 1 0 0 2 0 13 0-9 0 3 0-8 1 3 0 6 0 2 0 2 0-4 0-1 1 6 0-8 0 6 0 0 1-6 0-7 0 2 0 3 0-3 0 10 1-3 0 2 0-1 0-6 0-4 0 0 0-3 0-1 1 6 0 3 0 3 0 8 1-5 0 2 0-1 0-4 0-3 0-6 0 13 1-19 0 5 0 4 0 0 0 3 1-4 0-1 0-3 0 13 0 4 0 2 0-8 0 10 1-14 0 7 0 0 0-5 1-4 0 6 0 3 0 4 0 0 0-3 0-1 1-4 0-3 0 10 0-12 0 12 0 4 1-11 0-6 0 3 0 5 1 2 0 1 0 3 0 0 0-5 0-1 0-1 1-2 0-3 0 0 0 1 0 9 1 4 0 0 0 0 0-5 0 5 0 4 0 0 0-2 1-11 0 6 0 4 0-9 0 1 0-4 0-4 0-5 1 5 0 14 0-11 0-3 0 4 0 2 1-8 0 18 0 0 0-2 1-13 0 17 0-17 0 6 0 1 0-4 0 9 0 4 1-1 0-4 0-18 0 8 0-7 0 0 0 11 1 4 0 3 0 1 0-1 0-4 0-3 0 1 0-8 1 7 0-4 0 4 0 0 0-4 0-5 0 9 1-2 0-3 0 3 0-5 0-2 0 0 1 8 0-3 0 5 0 0 1 7 0-23 0 5 0-1 0-5 0 4 0 4 1 10 0-3 0-10 0 5 0 10 0-13 0 6 0-3 1-7 0 7 0-7 0 7 0 4 0 4 0 2 1 3 0 0 0-3 0-5 0-8 0 3 1 5 0 5 0-3 0-12 0 10 1-4 0-2 0-3 0 1 0 9 0-1 1 3 0-7 0 2 0 7 0-8 0 11 0-10 1-13 0 14 0 3 0-9 0-4 0 0 1 1 0 10 0-4 0-3 0-4 0 3 1 4 0 3 0 1 0 3 0 2 0-2 1 3 0-6 0-5 0-1 0 1 1-4 0 14 0-7 0 5 0-9 1 7 0-7 0 5 0-12 0 4 0-3 0-4 1 12 0 1 0 6 0 4 0 5 1-7 0-5 0-5 0-3 0-3 0-1 0 2 0 3 1 4 0 2 0 3 1 2 0 8 0-3 0-5 0-10 0 6 0-8 1 19 0-4 0-10 0-3 0 0 1 3 0 4 0-2 0 7 0-4 0-5 1-4 0 5 0-8 0 11 0 2 0 4 0-2 1 3 0-3 0-10 0-4 0 1 1 3 0 3 0 5 0-15 0 12 0-11 1 15 0 5 0-5 0-10 0 11 0-7 1 2 0 2 0-4 0-3 0-5 0-3 0 4 0 2 1 8 0-7 1 12 0-1 0-7 0-2 1 3 0-8 0-2 0 3 0 1 0 4 1 4 0-6 0 6 0 2 0 1 0-4 1 4 0 2 0-15 0-2 0-6 1 6 0 4 0 4 0-3 0 9 0-3 0-2 0-2 1-3 0-3 0-3 0 3 0 3 0 10 1-9 0 11 0-5 0-3 0 8 0-6 0-5 1 2 0 11 0-6 0 9 0-10 0 3 1 2 0 1 0 2 0-2 0-2 0-2 0-10 0 17 1-13 0-3 0 2 0 3 0-9 0 9 0-9 1 5 0 9 0-1 0-2 1-1 0-4 0 8 0 1 0 3 0 1 1 0 0-3 0-8 1 4 0 1 0-5 0 2 0 6 0-17 0 6 1-3 0 6 0 6 0-1 1-10 0-1 0 2 0 2 0 3 0 3 1-3 0 8 0-16 0 4 1 7 0-4 0 6 0-11 0-3 0-7 1 3 0 0 0 6 0 4 0 3 0 6 0-4 1-9 0 4 0 9 0-3 0-8 0 3 0 4 1 6 0 3 0 3 0-2 0-3 0-4 0-10 0-5 1 6 0 5 0-2 0 6 0-5 0-9 1 9 0 8 0-17 0 12 0-6 0-6 1-2 0-1 0 3 0 3 0 4 0-8 0 21 0-6 1 0 0 4 0 4 0 3 0-5 0-1 0-5 0-3 1-1 0-8 0 9 0 5 0-9 0 2 0 1 1-7 0-2 0 15 0-4 0 5 0 3 0 4 0-4 1-3 0-5 0-7 0 1 0 2 0 6 0-7 1-4 0 4 0-5 0 0 0-4 0 3 0 14 1 3 0 2 0 5 0-4 0-7 0 4 0 3 1-3 0-3 0 8 0-11 0-8 0 6 1 9 0 0 0-4 0 7 1-13 0 13 0-10 0-3 0 6 0-2 0 5 0 3 1-7 0 11 0-3 0-5 0-10 0 0 1-4 0 2 0 0 0 5 0 7 0-7 1 3 0 0 0-10 0 6 0 6 0 2 0-11 1 1 0-4 0 4 0 3 0 3 1 4 0-11 0 4 0 0 0-10 1 5 0 1 0 9 0-2 0 2 1 5 0-3 0-9 1 4 0 0 0-8 0 2 0 4 0-5 0 11 1 2 0 1 0-10 0 5 1-4 0-4 0-2 0 0 0 2 0 4 0 5 0 3 1 4 0 0 0-3 0-4 0-2 1-7 0 2 0 9 0-9 0 8 0-4 0-1 1-4 0 0 0 5 1-5 0 7 0-4 0-3 0 11 0 2 0 1 0-7 1 3 0-3 0 3 0-3 0-3 0-4 0 0 1 4 0-4 0-7 0 1 0 7 0 10 1-1 0-8 0-3 0 8 0-9 0 15 1-15 0 8 0 4 0-1 0-5 0-9 0-1 1-4 0-5 0 10 0 7 0-7 0 12 0-5 0-3 0 11 1-11 0-3 0 3 0-3 0 7 0 2 1 4 0 1 0-5 0-19 0 0 0 12 1-8 0 12 0 3 0 4 0 3 0-3 0-3 0-5 0-8 1 3 0 3 0 3 0 0 1 2 0 2 0-10 0-5 0-2 0-3 0 5 0 4 1 3 0 2 1-7 0 10 0-14 0 12 0 2 0 3 0 2 1-11 0 1 0-3 0 0 1 5 0-8 0-4 0 5 0 13 0-1 0-1 0-6 1-5 0-1 0 1 0 9 1-5 0 3 0-5 0-5 0 5 0 8 1-12 0 16 0-9 0 7 0-8 0 4 0-11 1 8 0 7 0-1 0 4 1 1 0-9 0 1 1-7 0 9 0-6 0 8 0 8 0-16 1 2 0 9 0-1 1-3 0-3 0 11 0-7 0-9 0-4 1 3 0 3 0-4 0 10 1 3 0 1 0-10 0 3 0 7 0-7 1 3 0 4 0 2 0-1 0-3 0-3 1-5 0 2 0-2 1 12 0-10 0 3 0 3 0 3 0 2 1 5 0-5 0-2 0-3 0-5 0-8 0 13 1 0 0-8 0 5 0-8 0 2 0 3 1 2 0 3 0-5 0 0 0-4 0 0 0-1 1 4 0 0 0 4 0 10 0-6 0 6 1 4 0-4 0-6 0-4 0 1 0 3 0 0 0 2 1 1 0-11 0-2 0-5 0 3 0 1 0 3 1 7 0-4 0 2 0-3 0-4 0 10 1 4 0-1 0 6 0-12 0 13 0-17 0 6 0 4 1-23 0 6 0 1 0 4 0 3 1 9 0-3 0 5 0-13 0 15 0-10 0-1 1-6 0-2 0 7 0 7 0-5 0 5 0 6 0 1 1-11 0 7 0 2 0-8 1-1 0-7 0 10 0 1 0 3 0 4 1-1 0-16 0 11 0-12 0-3 0-4 0 2 0 2 0 4 1 6 0-5 0 6 0 2 0-7 0-6 0 7 1 4 0 3 0 3 0 2 0-2 0-3 0-11 1-1 0-5 0 1 0 2 0 4 0-1 0 4 1-4 0 7 0 1 0-3 0 2 0 3 1 0 0 3 0-4 0 0 0-6 1-1 0 12 0 2 0-3 0-11 1 3 0 1 0 0 0 3 0-7 0 10 1-11 0 11 0-10 0-5 0-4 0 5 0 3 0 6 1 5 0-7 0-2 0 6 0 2 1 1 0 0 0-19 0 10 0 10 1 0 0-5 0-4 0 2 0 2 0-2 0 4 0-6 0-15 1 2 0 4 0 9 0 0 0-5 0-4 0-1 1-4 0 6 0 3 0 3 0-4 0 5 0 15 0-22 1 5 0-5 1 10 0-1 0 4 0-6 0 3 1-9 0 4 0 7 0-9 0 3 0-3 1 11 0 2 0 2 0-3 0-3 0-3 1-7 0-4 0 1 0 9 0 2 0-13 0 16 1-4 0-5 0 2 0-4 0-2 0 5 1 6 0 6 0 6 0-22 1 20 0-2 0-6 0-11 0 5 0 0 0 7 1-5 0-10 0 5 0 2 1-4 0-2 0-4 0 17 1-11 0 7 0 4 0-9 0 3 0-11 0 13 1 12 0-6 0-9 0 4 0 3 0 0 0 0 1-5 0 2 1-1 0-5 0 5 0-6 0 12 1-7 0 6 0 0 0-2 0 2 1-9 0 7 0-6 0 1 0-6 0 8 1-1 0-5 0-6 0 5 0 0 0 6 1 3 0 3 0 2 0-2 0-10 1 9 0-7 0 0 0-4 1 3 0 4 0 10 0-10 0 6 0 1 0 2 0-1 1-2 0-4 0 10 0-10 0 7 0 5 1-5 0-17 0 2 0 9 0-7 0 5 0-9 0 6 1-6 0 8 1 7 0-13 0 10 0-7 0-3 0 0 1 1 0 5 0-4 0 11 0-1 0-16 0 10 1-2 0 5 0-2 0 1 0 4 0-5 0-1 0 1 1 2 0 4 0 1 0-5 0 9 1 0 0 0 0-2 0-4 0-10 1-3 0 5 0-4 0 1 0 10 0-5 0 1 1 0 0 3 0-12 0 17 0-5 0 5 0-11 0 16 1-18 0 12 0-2 1-1 0-7 0-7 0 9 0-5 0 7 0-11 1 8 0-2 0-5 0 2 0 2 0 9 0 8 1-4 0-7 0 2 0 3 0 2 0-9 0 15 1-4 0-6 0-1 0-10 0 7 1-8 0 0 0 3 0 1 0 1 1-1 0 3 0-8 0 16 0-5 0 3 1-2 0-2 0-3 0 2 0 1 0-8 0 8 1-2 0 4 0-9 0 1 0-6 0-2 1 0 0 2 0 7 0-4 0-1 0 12 1-8 0 9 0-5 0 5 0-5 1 5 0-7 0-4 0-1 1 14 0-4 0 2 0-12 0 7 1 0 0-5 0 2 0-2 1 7 0 3 0 2 0-1 1-1 0-3 0-10 0 7 0-10 0 8 0-3 1 1 0-7 0 9 0-2 0 6 0 4 1 0 0 0 0-2 0-1 0 7 0-11 0-6 1-1 0 2 0 13 0 2 1-3 0-12 0 4 0-2 0 4 0-8 0 11 0-7 1 5 0 3 0 7 0 3 0-2 0 0 0-5 0-1 1-3 0 0 0-9 0 15 0-11 0 1 1 0 0-1 0 8 0 1 0 0 1-9 0 3 0-7 0 10 0 5 1-7 0 3 0 0 0 4 0-4 0-7 1 7 0 3 0-13 0 4 0-3 0-2 0 1 1 0 0 3 0 1 0 3 0-4 0 1 0 3 1 3 0-1 0-11 1 10 0 3 0 5 0 0 0 0 0-5 0-10 0 5 1-7 0 5 0-1 0-5 0-4 0-4 1 1 0 1 0 10 0 0 0 4 0 3 0 3 1-13 0-5 0 5 0-2 0 8 1 2 0 4 0 2 0-3 0-3 0 6 0-10 0-3 1 3 0-8 0 16 0-11 0 3 0-6 1 10 0-10 0 8 0 4 1-8 0-6 0 4 0-8 0 4 0-4 1 5 0 5 0 9 0-7 0 4 0-9 0 6 1 4 0 3 0 2 0 4 0 0 0-3 0-4 1-4 0-2 0-6 0 11 0-8 0-3 1 5 0-6 1 18 0-13 0-3 0-2 0-3 0-1 0 16 0-17 0 2 1 3 0 4 0-1 0 5 0 3 0 2 0 1 0-3 1-3 0 2 0 1 0 4 0-1 0-3 1-5 0 9 0 0 0-7 0-5 1 0 0-3 0-3 0 1 0 2 0 0 0 3 0 10 1-3 0-11 0-4 0 11 0 1 0 5 1 1 0-7 0 3 0 3 0 0 1-2 0-3 0-8 0 3 0-2 0-3 0 9 1 0 0 4 0-8 0-1 0 4 0 1 0-2 1-7 0 2 0 10 1-7 0 3 0 4 0 2 0 1 0 0 1-13 0-3 0 3 0 3 0-6 0 11 1 6 0-9 0 5 0-3 0 9 0-5 1-12 0-3 0 6 0 6 1 5 0-14 0 5 0-2 0-3 1-7 0 7 0 1 0 1 0 4 0 5 0-1 0-2 1-5 0 9 0-5 0 0 0 9 0 3 1 4 0-2 0-4 0-6 1-5 0-6 0 13 0-7 0 3 0-11 0-2 1 11 0-1 0 14 0-5 0-3 1-5 0 2 0 6 0-2 0 4 0 1 1-7 1 4 0-7 0 4 0-3 0-3 0 15 0-5 1 7 0-17 0 8 0 5 0-18 0 18 0-3 1-7 0 8 0 7 0-20 0 7 1-3 0 2 0-4 0 7 0-1 1 2 0-7 0 8 0 3 0-3 0-1 0 8 1-6 0 1 0 3 0-1 0 0 0-4 1 10 0-3 0-4 0 4 0-17 0 4 0-7 0 7 0 3 1 9 0-7 0-2 0 2 0-2 0 6 0-19 1 22 0-25 0 6 0 21 0 1 0-1 0-12 0-4 1-3 0-3 0 4 0 2 0 4 0-12 0 5 1-9 0 21 0 0 0-2 0 5 0-5 0-5 1 1 0-4 0-4 0-3 0 0 0 4 0 3 0 1 0 6 1 10 0-14 0 7 0-7 0-5 1 10 0-2 0 6 0 5 0 3 0-6 0-3 1-8 0 4 0 1 0-7 0-3 0 18 0-5 1-1 0 1 0 4 0 0 0 0 0-11 1-6 0-3 0 0 0 0 0 5 0 4 0 4 0-7 0 10 1 2 0 4 0 0 0 2 0-5 0-1 1-6 0 3 0-2 0-4 0-3 0 9 1-4 0-4 0 0 0-7 0 11 0 6 1-6 0-2 0-2 0 13 1-13 0 7 0-2 0 4 0 7 0-6 0-11 0 6 1 6 0-3 0-12 1 2 0 0 0 4 0-3 0 3 0 1 0-4 1 10 0-12 0 7 0 2 0 2 0 1 1-4 0-4 0 5 0-4 0-7 0-1 1 1 0 5 0-2 0-2 0-1 1 6 0 0 0 5 1-4 0 2 0-11 0 3 1 11 0-10 0 2 0-3 0-1 0-3 1 14 0 0 0-6 0 3 0-8 1 3 0 3 0 10 0-17 0 7 0 0 1 3 0 4 0 0 0 5 0 0 0-2 0-2 0-3 1 0 0-12 0 5 0-2 0 0 0-2 0-2 0 1 1 2 0 7 0-2 0 0 1-7 0 9 0-5 0 2 1-7 0-4 0 18 0-12 0 9 1-4 0 4 0-1 0 0 0-6 1 9 0-12 0 6 1 9 0-15 0 9 0-8 0 2 0 0 0-4 0 5 1 4 0 4 0-5 0 5 0-4 1 4 0-1 0-4 0-2 0-5 0-3 1-1 0 2 0 3 0 16 0-14 0 5 1 7 0-1 0 8 0-6 0-16 0 12 0-8 1 0 0-2 0 6 0-1 0 0 0 10 0-7 1 5 0-10 0 8 0-4 1 8 0-11 0 17 0-12 0 7 0-12 1 2 0 12 1-9 0 3 0 6 0-6 0 2 0-2 0-4 1-3 0-2 0 7 0 3 0-6 0 6 0-13 0 9 1-6 0-6 0 1 0 5 0-3 0-3 1 0 0 8 0 11 0-6 0-9 0 9 0 3 0 4 0 5 1-2 0-4 0-2 0-3 0 3 0-8 0 0 0-3 1 6 0-9 0 0 0 1 0 5 1-2 0-4 0 0 0 12 0 3 0 1 0-1 0-2 1-3 0-3 0-6 0-6 0-3 1 7 0 4 0 5 0 6 0-14 0 4 1-4 0-1 0-7 0 5 0 5 0 5 0 5 0-7 1 5 0 6 0 0 0-2 0-2 1-8 0 3 0 2 0-12 0 12 1 3 0 5 0-14 0 13 0 2 1-4 0-5 0-1 0-2 0-1 0-2 0 0 1 1 0 8 0 7 0-19 0 11 1-2 0 0 0-5 0-7 0 8 0 8 0-5 1-4 0-11 0 15 0-3 0 4 0-5 0-10 1-1 0 3 0 6 0-9 0-4 0 10 0 9 1-2 0-4 0-4 0 1 0 18 0-5 1 3 0-3 0-6 0 11 0 2 0-24 0 17 0-8 0 5 1 7 0-7 0-8 0 15 0-7 1 5 0-7 0 5 0-5 0-4 1 3 0-3 0 14 0-8 0 3 0 2 0 0 1 1 0-13 0 9 1-3 0-2 0-2 0-4 0-5 0 4 0 3 1-8 0 18 0-2 0 2 0 2 0-8 1-2 0 12 0-14 0 10 1 3 0-6 0-2 0-7 0 7 0-10 0 23 1-1 0-6 0-5 0-3 0 3 0 3 0-9 1 7 0-4 0 11 0-17 0 11 0-7 0-1 0 7 1 4 0 7 0 0 0-5 0-11 0-6 0 14 1 4 0 5 0-2 0-1 0-5 0-9 0 3 0 0 1-2 0 2 0 0 0 0 0 4 1-5 0 9 0-1 0-4 0-9 0 7 1 3 0 5 0-5 0 0 0-2 0-9 1 5 0 0 0-1 0 8 0 2 0-9 1 3 0 5 0-7 0 0 0-4 0 0 0-4 0 4 1 5 0 0 0-6 0-3 0 1 1 4 0 4 0-4 0 11 0 2 1-4 0-2 0 0 0 3 0-8 1-6 0-4 0 2 0 4 0 5 0 0 1-7 0-4 0 14 0 2 0 2 0 5 0-11 0 0 0-4 1-2 0 1 0 0 0 12 1-6 0 4 0 3 0-10 0 4 0 3 1-11 0-1 0 5 0 8 1 1 0-11 0 5 0 2 0-10 0 2 1 0 0 4 0 7 0-10 0 7 0-2 1 3 0 6 0 2 0-1 0-13 1 10 0 7 0-14 0 7 0 4 1-16 0-2 0 12 0 2 0-2 0-3 1-2 0-2 0-3 0 6 0 1 0 5 0-9 1-12 0 12 0 10 0-3 0 4 1-15 0-2 0 0 0 11 0 6 0-2 1-6 0-2 0-3 0 9 0-6 1 3 0-10 0-3 0 3 1 0 0 5 0-3 0-3 0 0 0 4 0 10 1-5 0 5 0 4 0 0 0-3 0-4 0-4 1 0 0 3 0 8 0-4 0 3 0 3 0 1 1-7 0-3 1 6 0 4 0 2 0-8 0-9 0 4 0-2 0-5 1 10 0 6 0 0 0-8 0-7 0-2 0-4 1 0 0 3 0 3 0 2 0 4 0 7 0-10 1 7 0 2 0 4 0-2 0-7 1 5 0-8 0-7 0 12 0-4 0-10 1 7 0-4 0 0 0 1 0 2 0 0 0 5 1 8 0-4 0 2 0 2 0 3 0-12 0 3 1-10 0 3 0 2 0 3 1 3 0-2 0-3 0 7 0 6 0-4 1-17 0 8 0-5 0 2 0-3 0 4 1 10 0-11 0-3 0-4 0-1 0 21 0-5 0-3 1-6 0 9 0-5 0 7 0 1 1-9 0 4 0 4 0-13 0 7 1-3 0-2 0-2 0 4 0 8 1 1 0 0 0-13 0 5 0 4 0-9 0 12 1-13 0-4 0-4 0 5 0 5 0 6 1 6 0 5 0-9 0-6 0 6 0-5 1 8 0-6 0-4 0-2 0 0 1 3 0 3 0 7 0 3 0 2 0 0 0-4 0-3 1-3 0 0 0-11 1 4 0 7 0-4 0 1 0 6 0 4 0 3 1 3 0 0 0-4 0-3 0-2 0-11 0 6 1 9 0 1 0 0 0-2 0-6 0 0 1-12 0 3 0 4 0-7 0 15 0-6 0 12 0-13 1 13 0-15 0 8 0-3 0 6 0-11 1-4 0 6 0 6 0 3 0-6 0-9 0 15 1 4 0 3 0-3 0-4 0-7 0 1 0 9 0-15 1 1 0 7 0 2 0 1 0 4 0-16 0 20 1-26 0 2 0 16 0 0 0 7 0-13 1 12 0-2 0-3 0-14 0 7 0 4 0-2 0-10 1 4 0-9 0 13 0-7 0 6 0-6 0 4 0-9 0 19 1 1 0 2 0-5 0 7 1-1 0-7 0 9 0 0 0-4 0-12 1 10 0-4 0-4 0 9 0-7 0 5 0 0 0-15 0 15 1-9 0 15 0-9 0 11 0-9 0-10 1 5 0-2 0-5 0 0 0-4 0 7 1 5 0-14 0-3 0 2 0 5 0-3 1 13 0 0 0 7 0-12 0-6 0 4 1 4 0-8 0-5 0 6 0 12 0-7 0 3 1 8 0-3 0 7 0-14 0 5 1-9 0 7 0-6 0-4 0 4 1 3 0 5 0 4 0-10 0-2 0-5 0 3 1 6 0 5 0-5 1 4 0 11 0 1 0-12 0 6 0-8 0-9 0 11 1-1 0-5 0-2 0 0 0-1 0-6 0 3 1 5 0 3 0 0 0-6 1-2 0 3 0 12 0-20 0 16 0 1 1-3 0-3 0 4 0 1 1-10 0 14 0 6 0 1 0-9 0 3 0-12 0 3 1-5 0-6 0 1 0 17 0 3 0-15 1 17 0-14 0 4 0 3 0-10 0 0 1-1 0-5 0 1 0 12 0 0 0 0 0 3 0 0 0-2 1-4 0-7 0 7 0-11 0 9 1-1 0 4 0 2 0-6 0 4 0 3 0 0 0 11 0-5 1 3 0-6 0-3 0-4 0-6 0-2 0 2 0 2 0 4 1 4 0 1 0 4 0 4 0 2 0-10 0 6 1-2"/>
<path class="pd" d="M162 321V35"/>
<path class="pd" d="M1303 321V35"/>
<path d="M104 254H1361.04" stroke="#008000" stroke-width="2.08" fill="none"/>
</g>
<path class="tk" d="M162.5 321.5V326.5M395.5 321.5V326.5M627.5 321.5V326.5M859.5 321.5V326.5M1092.5 321.5V326.5M1324.5 321.5V326.5"/>
<text x="163.31" y="342" text-anchor="middle">0</text>
<text x="394.71" y="342" text-anchor="middle">2000</text>
<text x="626.85" y="342" text-anchor="middle">4000</text>
<text x="859.76" y="342" text-anchor="middle">6000</text>
<text x="1091.76" y="342" text-anchor="middle">8000</text>
<text x="1324.38" y="342" text-anchor="middle">10000</text>
<path class="tk" d="M100.5 267.5H105.5M100.5 207.5H105.5M100.5 148.5H105.5M100.5 88.5H105.5"/>
<text x="94.94" y="273" text-anchor="end">7.75</text>
<text x="95.22" y="213" text-anchor="end">7.80</text>
<text x="94.98" y="153" text-anchor="end">7.85</text>
<text x="95.21" y="94" text-anchor="end">7.90</text>
<rect class="sp" x="105.5" y="35.5" width="1380" height="286"/>
<text x="732.43" y="312" text-anchor="middle">11498</text>
<text x="794.4" y="27" text-anchor="middle" class="ti">AGASC ID 848173416.0</text>
<path class="lf" d="M1364.28 69.5H1475.72Q1478.5 69.5 1478.5 66.72V45.28Q1478.5 42.5 1475.72 42.5H1364.28Q1361.5 42.5 1361.5 45.28V66.72Q1361.5 69.5 1364.28 69.5Z"/>
<path d="M1367 54H1395" stroke="#008000" stroke-width="2.08" stroke-linecap="square" fill="none"/>
<text x="1407.27" y="59">mag</text>
<text x="1437.6" y="61" class="sub">AGASC</text>
<path class="lf" d="M1351.28 314.5H1475.72Q1478.5 314.5 1478.5 311.72V250.28Q1478.5 247.5 1475.72 247.5H1351.28Q1348.5 247.5 1348.5 250.28V311.72Q1348.5 314.5 1351.28 314.5Z"/>
<path class="lm" style="marker-start:url(#mr)" d="M1367.5 260.5h0"/>
<text x="1391.54" y="264">not OK</text>
<path class="lm" style="marker-start:url(#mo)" d="M1367.5 281.5h0"/>
<text x="1392.41" y="285">Highlighted</text>
<path class="lm" style="marker-start:url(#mk)" d="M1367.5 302.5h0"/>
<text x="1392.59" y="306">OK</text>
<g clip-path="url(#c2)">
<path class="mo" transform="translate(.5 .5)" d="M162 456l22-15 1 9 23 3 21-1 92-8 0 13 43-14 36 8-164 146 35-3 16 0 25 6 90-7 65-141 17-12 1 6-1 4 45 8 53-3 23-23 0 5-4 7 0 8 44 6-181 140 28-5 64 4 11-3 52 3 32-154-1 13 32-3 3 1 21-3 0 1 40-4 1 7 35-3 29 6 14-22 25 19-175 135 155 59 216-202 1 9 39 0 22-22 0 10-203 150 12 3 76-4 40 4 41 0 7 7-27 31 94-210-13 166 100 2 10 1 33-1-4 6 1 10 0 2 27-17-974 153 36 480 61-315 126-206 190-34 41 267 230 108 7-332 49 338"/>
<path class="mk" transform="translate(.5 .5)" d="M162 469l0-5 0 3 1 34 0-2 0-15 0 22 0-7 0 4 0-24 0 3 1 6 0-7 0 30 0-4 0 20 0-48 0-14 0 14 0 40 1-20 0 8 0-7 0-19 0 18 0 22 0-25 0-13 0 9 1-27 0 4 0 10 0 7 0 29 0-49 0 3 0 32 1-22 0 20 0-13 0 7 0 18 0-46 0 2 0 44 0-12 1 32 0 11 0 13 0-71 0-4 0-13 0 27 0-24 1 10 0 24 0 11 0-7 0-26 0 5 0 20 0 5 0-25 1 28 0-5 0 17 0 5 0-17 0-14 0 16 0 11 0-22 1 3 0-16 0-11 0-15 0 12 0 14 0 5 0-5 1 37 0-22 0-27 0 44 0 8 0-26 0-30 0 22 0-5 1-9 0 25 0-8 0 16 0-23 0-6 0-2 0 4 1-17 0 13 0-7 0 12 0 2 0 3 0 24 0-10 1 10 0-5 0 20 0-16 0-29 0 3 0-4 0-19 0 8 1 18 0 0 0 7 0-13 0 35 0-23 0-2 0 26 1 4 0-12 0-34 0 23 0-42 0 4 0 73 0 5 0-9 1-49 0 43 0-34 0 32 0-32 0 4 0-15 0 13 1 17 0-9 0 28 0 22 0-34 0 30 0-47 0-1 0 30 1-39 0 46 0 19 0 2 0-21 0-7 0-50 0 34 0 18 1 3 0-27 0 13 0 6 0 7 0 5 0 1 0-7 1-1 0-12 0 10 0 0 0-11 0 39 0-25 0 0 0-38 1 12 0 5 0 11 0-6 0 7 0-8 0-18 0-4 1-5 0 20 0-15 0 45 0-40 0-17 0-14 0-12 1 20 0 35 0-30 0 15 0 22 0-45 0-11 0 45 1-31 0 9 0 15 0 13 0 10 0-17 0-12 0 31 1-22 0 22 0-10 0 19 0 2 0-10 0-4 0-15 0-4 1 3 0 27 0-35 0 28 0-63 0 40 0 3 0-21 0 30 1-11 0-2 0 33 0-27 0 38 0-43 0 15 0 28 1-42 0-32 0 2 0 2 0-8 0 45 0-12 0 33 0-27 1 20 0-11 0-1 0 25 0-22 0 13 0-15 0 1 1 22 0-5 0-43 0 41 0 11 0 5 0-38 0 27 0-37 1 16 0 6 0-26 0 16 0-5 0-14 0-2 0-18 0-6 1 5 0 14 0 9 0 9 0-3 0-2 0 23 0 11 1 14 0-7 0-13 0-2 0-33 0 9 0 15 0 7 0-17 1 36 0-13 0-46 0 22 0 4 0 14 0-9 0 12 1-15 0 18 0-3 0 8 0-6 0 3 0-1 0-17 0-4 1-8 0-29 0 21 0 26 0-2 0 16 0-10 0-42 1 27 0 21 0 2 0-43 0 23 0 20 0-11 0-14 1 3 0-34 0 27 0 18 0 8 0 18 0 2 0-2 0-17 1-9 0-15 0-32 0 56 0-35 0-1 0 27 0-28 1-7 0-20 0-7 0-3 0 20 0 7 0 12 0-7 0-15 1 1 0 28 0-9 0-14 0-10 0-9 0 12 0 7 0 6 1 19 0 21 0 16 0 8 0 12 0-14 0-10 0-23 1-7 0-8 0 12 0 24 0-54 0 38 0 23 0-21 0-36 1 45 0-8 0-26 0-32 0 22 0 41 0-58 0 50 1-24 0 36 0-35 0 2 0-4 0 1 0-9 0-6 0-4 1 10 0 7 0-1 0 4 0-6 0-21 0-4 0 4 1 11 0 13 0-5 0 21 0 13 0-34 0 28 0-19 1-13 0-3 0 43 0 5 0 0 0-19 0 3 0-17 0-21 1 9 0-12 0 36 0-24 0 38 0 3 0 3 0-8 1-17 0 21 0-30 0 23 0 17 0-14 0-13 0 19 0 29 1 13 0-47 0 51 0-69 0 0 0 6 0 19 0-38 0 41 1 9 0 13 0 9 0 12 0-4 0-23 0 0 0-20 1 8 0 14 0-18 0-1 0-17 0-4 0 18 0-2 0-7 1-6 0 3 0-48 0 57 0 16 0 3 0 5 0 19 1-7 0-36 0 11 0 14 0 11 0-8 0-1 0-11 0 6 1-4 0-29 0-14 0 12 0-16 0 31 0-37 0 53 0-41 1 21 0-17 0-13 0-13 0-17 0 9 0 27 0 1 1 51 0-42 0 8 0-15 0-9 0 14 0 11 0-16 1 23 0 19 0-44 0-16 0 25 0 19 0 10 0-6 1-5 0 4 0 12 0 21 0 9 0-12 0-15 0-11 0-36 1 0 0 20 0 28 0-48 0 11 0 16 0-25 0 16 0 11 1-41 0 4 0 78 0-70 0 26 0 21 0 10 0-58 1 71 0-27 0-18 0-9 0 27 0-7 0-14 0 20 0-18 1 23 0-21 0 24 0 6 0-19 0 11 0 10 0 1 0-5 1-16 0-21 0 30 0-18 0 13 0-35 0 15 0 23 1 10 0-5 0-8 0-17 0-6 0 9 0-41 0 33 0 18 1-1 0-52 0 27 0-15 0-11 0-8 0-10 1 87 0-54 0 9 0 0 0-7 0-9 0 2 0 10 0 8 1 35 0-6 0-28 0 4 0-14 0 3 0-15 0 13 0-1 1 11 0 17 0-25 0 14 0 20 0-46 0 38 0-22 1 21 0-29 0 45 0-19 0 0 0 4 0-48 0 77 0 4 1-31 0-37 0 7 0 21 0-59 0 39 0 5 0 13 1-10 0-11 0 63 0-16 0-7 0-2 0-7 0-20 0 9 1-12 0 43 0-64 0 6 0 50 0 13 0 12 0-79 1 68 0-18 0-9 0 1 0-9 0-18 0 15 0-7 1 19 0-19 0-10 0-3 0-1 0-6 0-9 0-5 0 3 1 12 0 5 0 8 0-2 0-9 0-2 0-14 0 11 1 11 0-3 0-7 0 48 0 19 0 11 0-33 1-12 0-25 0 26 0-24 0 22 0-35 0 28 0 8 0-21 1 6 0-15 0-5 0-1 0 17 0-29 0-12 0 10 1 26 0 2 0-11 0 51 0-6 0-29 0-20 0 52 0-24 1-28 0 34 0-22 0 3 0 12 0 24 0 23 0-51 1 34 0-5 0-34 0-29 0 43 0 24 0-30 0 32 0-28 1-10 0 3 0 7 0 8 0-1 0 17 0-26 0 8 0-14 1 5 0 6 0 2 0-5 0-3 0-7 0 21 0 15 1 10 0 5 0-14 0-18 0 3 0-8 0-8 0 19 0 2 1-8 0 14 0 9 0 8 0 3 0-9 0-8 0-14 1-7 0 5 0-26 0 11 0 1 0-3 0 24 0-18 0 5 1-26 0 35 0-24 0-2 0 1 0-13 0-1 0 18 0-8 1 0 0-11 0 35 0 4 0 17 0 0 0-3 0-11 1-12 0 8 0-13 0 0 0 24 0-23 0 23 0-59 0 45 1-9 0 10 0 8 0-7 0-15 0 8 0-15 0 2 1-12 0 35 0-38 0 19 0-20 0 16 0 8 0-26 0 37 1-2 0 12 0 11 0 8 0 4 0-15 0-7 0-13 0-22 1 20 0 18 0-16 0 1 0 6 0 6 0-3 0-78 1 52 0-40 0 26 0 23 0-24 0-16 0 22 0-30 0 44 1 22 0-33 0 28 0-4 0 10 0 14 0 5 0-13 0-13 1 2 0-13 0 7 0 6 0-41 0 25 0 5 0 8 1-35 0 41 0-47 0 6 0 58 0-25 0-19 0 0 0-3 1-4 0-10 0-2 0 10 0 11 0 2 0-7 0 28 1-5 0 1 0-57 0 64 0-19 0 27 0-49 0 46 0-17 1 2 0 14 0 12 0 11 0-2 0-7 0-20 0 12 0 6 1-2 0-6 0-16 0-18 0 0 0-5 0-15 0 20 1 23 0 4 0-18 0-32 0 3 0-3 0 63 0-27 0 9 1-60 0 55 0-36 0-9 0 33 0-4 0-18 0 65 1-34 0-3 0 26 0-8 0-24 0 4 0 38 0-30 0 13 1 10 0-9 0-11 0-2 0-5 0 0 0 12 0-12 0 13 1 5 0-38 0 24 0 11 0-28 0 9 0 14 0-10 1-21 0 35 0-24 0-14 0 42 0 12 0 18 0-5 1-15 0-10 0-12 0 3 0 25 0-31 0-7 0-21 1 35 0 8 0-5 0-19 0 6 0 14 0-25 0-12 0-1 1-11 0 10 0 1 0 9 0-12 0 37 0-16 0 12 0-1 1-4 0-12 0 3 0 11 0 9 0-6 0-57 0 38 1 14 0 11 0 0 0 6 0 6 0-7 0-4 0-9 0-10 1-25 0 9 0 1 0-19 0 2 0-7 0 2 0 12 1 21 0 16 0 11 0-16 0-7 0-2 0 19 0-19 0 20 1-45 0 16 0-1 0 10 0-15 0 10 0-23 0 10 0 2 1-7 0-11 0-4 0-19 0 20 0 3 0 17 0 0 1 28 0-2 0 8 0 11 0 5 0 14 0-9 0-10 0-10 1-7 0-15 0 7 0 1 0-21 0-5 0 32 0-27 1-19 0-19 0 1 0 53 0 15 0 7 0-10 0-1 0-12 1-16 0 30 0-8 0 7 0-15 0-7 0-8 0-6 0 30 1 9 0-31 0 10 0 6 0-7 0-8 0-16 0 0 1 3 0 8 0 7 0 22 0-3 0-20 0-12 0 5 0-6 1 4 0 15 0 8 0 16 0 14 0 6 0 22 1-72 0-1 0-33 0 63 0-19 0 4 0 28 0-41 0 23 1-23 0 38 0 2 0-13 0-43 0 25 0-2 0 0 0-22 1-7 0 21 0 13 0-26 0 58 0 8 0-49 0-5 1 16 0 22 0-38 0 36 0-59 0 47 0 9 0-1 0-55 1 33 0 9 0-9 0-6 0-4 0 12 0-13 0-11 1-20 0 0 0 13 0 17 0 16 0 33 0-8 0-28 0-7 1 4 0 8 0-4 0 21 0-14 0 9 0 3 0-74 0 49 1-9 0 22 0-49 0 17 0 21 0 8 0 5 0 2 1 10 0-36 0 40 0-31 0 28 0 4 0-1 0 27 0-15 1-20 0 1 0 16 0-23 0-22 0 14 0 5 0-5 0-1 1-16 0 0 0-3 0 13 0 26 0-11 0 13 0 3 1-20 0 20 0 16 0-22 0-33 0 5 0 18 0-17 0 7 1 21 0-26 0 6 0-11 0-20 0 0 0 1 0-1 1 22 0 3 0-7 0 42 0-33 0 20 0-31 0 24 0 12 1 5 0 6 0-2 0-8 0-36 0-8 0-16 0 19 0 4 1 18 0-11 0 16 0-21 0-16 0 34 0-30 0 22 1 1 0-8 0-18 0 16 0 10 0 12 0-24 0 21 0 22 1-26 0 23 0-10 0-14 0 38 0-24 0-5 0 10 1-1 0 9 0 13 0-1 0-17 0-5 0-34 0 7 0 6 1-6 0 22 0-40 0 13 0 19 0-13 0-3 0-9 0-1 1 10 0 7 0 2 0 9 0-12 0-3 0 33 0 14 1-26 0-20 0 6 0-1 0 1 0-19 0 42 0-13 0 7 1 12 0 8 0 2 0-2 0-14 0 2 0-13 0-29 1 25 0 22 0-14 0-3 0-10 0 24 0-38 0 18 0-19 1 33 0-25 0-9 0 36 0 14 0 14 0 8 0 0 1-12 0-13 0-9 0-9 0 15 0 5 0-26 0-13 1 13 0-11 0 0 0 26 0-8 0-5 0 16 0 7 0-9 1-10 0 1 0-2 0-17 0-2 0-7 0 20 0 8 1-5 0 8 0-46 0 44 0 3 0-54 0 39 0-18 0 4 1-5 0-2 0-7 0-9 0-7 0 6 0 12 0 5 0 0 1-1 0-3 0-8 0-14 0 8 0 15 0 5 0-8 1-10 0 31 0-17 0 14 0-7 0 17 0-17 0 22 0-21 1 20 0-4 0-4 0 20 0-36 0-12 0-5 0-21 1 4 0 9 0 15 0 10 0-3 0-18 0 26 0-5 1 31 0-8 0-55 0 42 0 13 0 12 0 8 0-49 0-1 1 46 0-2 0-24 0-9 0 4 0-14 0 35 0-27 1-14 0 0 0 13 0-2 0-1 0 9 0 2 0 23 0-23 1 5 0-8 0 16 0 13 0-46 0 55 0-26 0-30 1 0 0 55 0-43 0 23 0-39 0 13 0-23 0 72 0-17 1-26 0 19 0 4 0 5 0 9 0-9 0 2 0-13 0-38 1 26 0 15 0-4 0-4 0 29 0 3 0-20 1 17 0 3 0-42 0-13 0 15 0 7 0-2 0 7 0-1 1-39 0 39 0 7 0 4 0 12 0-4 0-4 0-11 1-14 0 2 0 22 0-16 0 4 0 6 0 3 0-30 1 29 0-35 0-27 0 25 0 14 0 37 0-29 0-10 0-1 1-8 0 24 0 8 0 3 0-28 0-15 0 25 1-49 0 48 0-46 0 14 0 28 0-3 0-9 0-10 0-4 1 15 0 0 0 17 0 21 0-14 0 25 0-40 0-14 0-6 1 18 0 17 0 13 0-22 0 3 0-11 0-4 1 35 0-13 0 17 0-12 0-14 0 4 0 18 0-20 0 8 1-5 0-10 0-5 0 5 0-7 0 6 0-1 0-7 1-8 0-19 0-5 0 20 0 36 0-11 0-1 0-9 0-6 1 6 0-2 0 12 0 2 0-7 0 28 0 16 0-55 0-28 1 48 0-29 0 39 0-17 0 34 0-6 0-55 0 43 1 22 0 13 0-34 0 6 0-1 0-27 0 20 0 12 0 2 1-4 0-24 0-2 0 17 0 3 0 5 0 14 0 5 1 2 0-13 0 5 0-17 0 34 0-8 0-42 0 35 0-10 1-9 0-14 0-38 0 26 0 31 0-18 0 48 0-54 0 29 1 7 0 5 0-11 0 8 0-20 0 22 0-4 0 8 1 16 0 9 0-20 0 12 0-14 0-16 0-27 0-11 0 9 1 27 0 1 0 3 0-7 0-33 0 22 0 2 0-9 1 8 0 17 0-7 0 4 0 12 0 17 0 12 0-16 0-10 1-12 0-3 0 23 0-29 0 10 0-8 0-3 0-18 0-2 1 28 0 24 0 5 0-67 0 33 0-12 0 18 0-1 1 25 0 0 0-31 0-10 0 29 0-5 0-25 0 18 0 15 1 11 0 8 0-11 0-13 0-12 0-6 0-18 0 12 1-26 0 26 0 2 0-16 0-8 0 12 0-15 0 44 0-22 1-8 0-20 0 49 0-14 0 4 0 8 0 8 0-1 0-13 1 1 0-8 0 2 0-13 0 7 0 0 0-14 0 18 1 16 0-7 0-21 0 27 0-14 0-17 0 0 0-10 0 1 1-8 0 81 0-47 0 48 0-4 0-32 0 4 0-34 1 24 0-21 0 11 0-21 0 13 0 22 0 6 0-22 0-19 1 16 0-23 0 4 0 25 0 3 0-2 0-1 0-3 0 15 1 3 0 6 0-13 0-2 0-5 0-7 0-6 0 8 1-3 0 8 0-19 0-12 0 12 0 1 0-12 0-13 0 8 1-5 0 26 0-7 0-23 0 17 0 30 0 7 0 14 0-17 1-2 0-4 0 6 0-55 0 0 0-6 0-11 1-8 0 18 0 9 0 15 0 21 0 2 0 7 0-15 0-17 1 45 0-48 0 26 0 10 0 14 0 10 0 16 0-11 1-12 0-12 0-7 0-12 0 3 0-14 0 19 0-34 0 9 1-9 0 35 0-10 0 5 0 5 0-27 0-3 0-7 0 14 1 7 0 25 0-44 0 36 0-23 0 31 0 17 0-36 1-6 0 4 0 13 0 8 0 12 0 0 0 14 0-58 0-8 1-12 0 14 0 12 0 40 0-18 0-7 0-31 0 21 1-12 0-13 0 7 0 6 0 4 0 31 0-8 0-22 0-4 1 39 0-29 0 20 0-32 0 17 0 2 0-11 0 27 0 13 1-16 0-30 0 3 0 3 0-39 0 59 1-21 0 1 0-4 0 5 0-18 0 37 0-47 0-23 0 26 1 14 0 37 0-48 0 1 0-10 0 28 0-37 0 21 1-5 0 5 0 14 0 15 0-19 0 13 0-27 0 36 0 2 1-26 0-15 0 41 0-41 0 9 0 5 0 13 0 6 0-3 1-15 0 14 0-30 0-4 0 46 0-26 0 37 0-15 1-31 0 46 0 26 0-19 0 7 0-27 0-17 0 8 0-15 1 24 0-27 0-25 0 5 0 20 0 39 0-49 0 64 1-22 0-47 0 26 0 8 0-9 0-10 0 40 0-19 0-22 1 8 0 28 0-17 0-7 0 35 0-18 0 27 0 1 0 2 1-20 0 11 0-12 0 16 0-43 0 7 0 34 0-3 1-31 0-8 0-8 0 3 0 1 0 12 0 22 0-11 0-13 1-37 0 48 0-9 0 22 0-14 0 12 0 0 0-2 1 5 0-12 0 13 0 10 0 14 0 2 0-6 0-7 0-64 1 42 0-54 0 72 0-35 0-10 0-6 0 6 0 3 0-3 1 32 0-41 0 16 0-24 0 37 0 2 0-6 0-29 1 24 0 9 0-3 0-52 0 49 0-52 0 45 0 4 0 0 1 8 0-18 0 16 0 15 0-15 0 4 0-21 0-8 1-20 0 74 0 5 0-2 0 28 0 1 0-31 0-49 0 17 1-10 0 21 0 5 0 26 0-22 0-20 0 29 0-36 0 5 1 14 0 43 0-22 0 20 0 5 0-35 0 7 0 6 1-8 0 1 0-16 0 27 0 1 0-17 0 30 0-6 0-31 1-7 0-7 0 33 0-19 0 8 0-21 0 9 0 41 1-48 0-4 0 29 0-9 0 11 0-29 0 37 0-20 0 36 1-27 0 12 0-53 0-9 0 17 0-18 0 42 0-29 0 13 1-5 0 37 0-19 0-7 0 5 0-13 0-3 0 12 1 30 0-10 0 5 0-53 0 11 0-14 0-15 0-19 1 12 0 10 0 43 0-20 0 24 0-26 0 27 0 12 0 29 1-7 0-17 0-18 0 13 0 9 0 20 0-60 1 44 0-18 0-45 0-8 0-14 0 68 0-73 0 12 0 14 1 8 0 16 0-3 0 6 0-7 0 27 0-41 0-9 1 45 0-35 0 8 0 13 0 20 0 2 0-34 0-8 0-2 1 1 0 6 0 6 0 17 0-33 0 41 0-11 0-20 0-8 1-2 0 12 0 3 0 4 0 11 0 9 0-9 0-8 1 25 0-25 0 16 0-3 0 8 0-11 0-11 0-12 0-2 1 6 0 17 0-27 0 19 0 14 0-19 0 1 0 16 1 3 0-40 0 32 0-7 0 24 0-11 0 0 0 15 0 1 1 5 0-4 0-6 0-6 0-9 0 16 0-5 0-10 0-5 1 13 0 2 0-17 0-5 0 8 0-21 0-25 0 19 1 26 0 9 0 12 0-41 0-14 0-3 0 16 0 18 0 26 1-11 0-14 0 10 0 0 0-5 0 13 0-30 0 30 1-1 0-9 0 0 0-20 0 9 0 10 0 4 0-5 0 2 1 15 0 5 0 1 0-5 0-12 0-3 0 37 0-45 0-9 1 12 0 29 0-59 0 38 0 8 0-22 0 22 0-37 1 14 0-6 0-8 0-16 0-17 0 33 0 19 0-5 0-3 1 14 0-26 0 22 0-15 0 17 0 12 0-57 0 51 1-10 0 6 0-18 0 10 0 17 0-10 0 13 0 8 0 2 1-19 0-31 0 28 0-22 0 15 0-7 0 27 0-7 0-4 1-6 0-1 0 7 0-17 0 18 0-19 0 27 0-30 1 3 0-2 0-10 0 17 0-29 0 22 0 24 0-3 0 9 1 1 0 2 0 2 0-7 0-4 0-7 0-11 0 15 1-22 0 1 0 7 0 11 0-6 0-12 0-9 0-5 1 4 0 2 0 5 0 16 0 4 0-2 0-8 0 22 0 1 1-2 0 8 0-1 0 3 0-8 0-2 0-5 0-10 1-21 0 38 0-1 0-42 0 0 0 23 0-6 0-11 0-2 1 0 0 10 0 7 0 29 0-24 0-22 0 12 0 24 1 12 0 17 0-17 0-15 0-10 0 28 0 21 0-25 0-32 1-7 0 7 0 10 0-23 0 27 0 4 0 12 0-11 0-5 1-19 0-13 0 39 0 14 0-21 0-31 0 23 0 30 1-22 0-3 0-34 0 25 0-26 0 33 0-5 0-14 0-10 1-9 0-21 0 12 0 19 0 9 0 42 0-34 0 15 0 31 1-72 0 9 0-26 0 22 0 11 0 24 0 16 0 33 1-27 0-12 0-7 0-27 0 5 0-13 0 52 0 17 0-40 1 2 0-2 0 35 0-2 0-25 0-17 0-16 0 6 1 10 0-9 0 27 0-39 0 16 0 0 0 4 0 1 0 18 1 9 0-14 0 8 0 1 0 10 0-2 0-5 0-10 0-20 1-13 0 19 0-7 0 19 0 3 0 21 0-57 0-10 1-25 0 16 0 22 0 17 0-6 0-5 0-27 0 58 0-35 1 47 0-43 0 2 0-5 0 29 0-8 0-18 0-17 1 17 0 16 0 19 0-34 0 18 0-28 0 13 0 4 0-8 1 8 0 16 0 20 0-45 0 6 0 17 0-10 0 12 0-13 1-22 0-6 0-13 0-11 0 15 0 22 0 1 0 3 1-4 0-4 0-21 0 3 0 16 0 4 0-4 0-20 0-9 1 9 0 20 0 0 0 14 0 32 0-36 0 7 0-29 1 1 0 9 0-12 0 28 0-24 0 42 0-25 0-12 0 36 1 18 0-14 0 11 0-13 0-26 0 40 0-50 0 29 0-8 1-30 0 18 0 10 0 31 0-24 0 1 0 21 0 5 1 6 0-9 0-5 0 2 0 33 0-35 0-38 0 5 0 26 1-15 0-10 0 1 0-13 0 21 0 8 0 14 0-19 1 5 0-24 0 42 0-17 0-21 0-2 0 26 0-30 0 5 1 1 0 1 0 7 0 10 0 35 0-57 0 9 0 3 0-28 1-10 0 53 0-29 0-9 0 40 0-9 0 1 0 20 1 11 0 19 0-19 0-17 0-13 0-24 0 25 0-21 1 18 0-6 0 32 0-13 0-15 0-3 0-15 0 0 1-9 0 4 0 3 0 21 0-4 0-7 0-8 0-3 0 8 1-1 0 13 0-8 0 60 0-53 0 19 0-7 0 18 0-34 1 16 0-22 0 37 0-25 0-9 0-9 0 28 0 10 1-28 0 33 0 2 0-55 0 7 0 31 0 10 0 9 0-8 1-8 0-11 0 3 0-17 0 18 0-23 0 12 0 1 1-9 0-8 0-4 0 7 0 8 0 55 0-50 0 59 0-8 1-62 0 5 0 26 0-18 0 23 0 11 0 11 0 20 1-2 0-15 0-43 0 18 0-47 0-20 0 21 0 16 1 21 0 15 0-12 0-9 0-20 0-7 0-12 0 14 0 11 1 12 0-2 0-6 0-1 0-17 0-12 0-11 1-7 0 62 0-9 0 32 0-27 0-14 0-12 0 11 0 9 1 45 0 8 0-78 0 43 0 17 0-28 0-10 0-6 0-14 1-6 0 4 0 15 0 13 0 31 0-31 0 9 0-9 1-3 0-3 0-21 0-5 0-3 0 20 0 4 0-26 0 41 1-18 0 5 0 1 0-7 0-7 0 20 0 22 0-39 0 23 1-2 0 4 0 6 0 11 0-1 0-7 0-40 0-1 1 37 0 11 0-26 0 24 0-24 0 26 0-28 0 12 0-26 1 0 0-13 0 35 0 15 0-7 0-23 0-11 0-22 1 7 0 11 0 15 0 9 0 32 0-21 0 19 0-15 0-21 1-7 0-14 0-16 0 0 0 7 0 15 0 4 0 13 0 13 1 3 0 4 0 16 0-51 0 41 0-7 0 18 0 2 1-5 0-4 0-2 0-11 0 4 0 3 0-35 0-11 0 18 1 61 0-48 0-9 0 30 0-41 0 11 0-20 0 12 1 29 0 17 0-3 0-39 0-18 0 12 0 7 0-24 1 45 0 2 0 10 0-6 0-17 0-15 0-6 0 2 0-6 1 9 0 3 0 2 0-3 0-33 0 20 0-2 0 31 1 2 0-19 0 23 0-23 0-11 0-15 0-14 0 1 1 12 0 16 0 9 0 0 0-16 0-8 0-8 1-7 0 14 0 14 0 9 0 35 0 19 0 1 0-21 0-12 1-34 0 18 0-35 0 37 0 40 0-71 0 41 0 26 0-32 1 4 0 6 0 31 0 8 0 6 0-19 0-22 0-20 1 6 0 7 0-18 0-5 0-14 0 15 0 14 0-3 0 7 1 3 0-9 0-33 0 55 0-13 0-56 0 43 0 7 1-33 0 45 0-21 0 1 0-1 0-36 0 45 0 19 0-26 1 34 0-16 0 3 0 2 0 13 0-39 0 60 0 5 1-13 0-16 0-11 0-38 0 17 0 1 0 20 0 6 1-1 0-37 0-27 0-10 0 14 0 21 0 6 0-23 0 8 1 13 0 8 0 3 0-12 0 22 0-14 0-26 0 19 1-30 0 10 0 28 0-5 0-42 0 34 0 44 0-48 0 32 1-7 0 5 0-14 0 12 0-2 0-9 0 3 0 7 0 10 1-18 0-4 0-5 0-1 0-11 0 12 0-1 0 4 1 11 0-17 0 9 0 45 0-17 0 5 0-35 0 18 0 8 1-29 0 18 0-1 0-17 0 32 0 13 0 4 0 15 1-56 0-19 0-18 0 1 0 18 0 17 0-2 0 47 0 5 1-49 0-5 0 0 0 37 0-25 0 6 0 22 0 16 0 21 1-16 0-16 0-20 0 10 0-25 0-6 0-24 0 28 1 11 0-7 0-17 0-6 0 13 0 14 0 4 0 15 0-42 1 18 0 0 0-6 0 6 0-4 0-19 0 37 0-15 0 17 1-26 0-2 0 49 0-34 0 0 0-21 0-24 0 20 1 37 0-2 0 19 0-27 0-1 0 16 0-31 0-7 0 10 1 18 0-10 0-11 0 16 0-4 0 16 0-3 0 33 1-33 0-10 0 16 0 6 0-16 0 6 0-11 0-5 0 29 1-18 0-20 0-9 0 14 0 54 0-58 0 0 0 16 0 45 1-58 0 28 0-35 0 15 0 28 0 0 0-13 0-26 1 4 0-16 0 65 0-13 0-21 0 9 0 25 0-29 0 0 1 12 0-4 0 9 0 11 0 2 0-4 0-1 0-7 1-9 0 16 0-43 0 56 0-55 0 11 0 29 0-39 0 33 1-10 0 15 0-26 0-6 0-7 0 7 0-17 0-2 0 13 1 2 0 4 0 36 0-52 0 31 0 11 0-12 0 18 1-5 0-9 0 16 0 2 0-13 0-14 0 6 0 10 0 5 1-6 0-13 0-7 0 11 0-6 0-2 0-18 0 11 1-11 0-12 0 47 0 0 0 6 0 26 0-2 0-23 0-13 1-22 0 41 0-78 0 32 0 23 0-12 0 11 0 26 0-29 1 0 0 18 0-36 0-7 0 14 0-24 0 21 0-11 1-11 0-13 0 15 0 6 0 9 0 23 0 17 0 5 0 6 1 10 0-3 0-12 0-17 0-5 0-9 0 22 0-22 1 15 0-29 0 27 0 1 0 8 0 13 0-10 0-10 0-5 1-9 0 2 0-5 0 2 0-2 0 44 0-22 0 2 0-2 1-1 0-53 0 30 0 0 0 11 0-21 0-16 0-11 1-14 0 9 0 16 0 7 0-23 0 59 0-20 0-11 0 30 1-1 0 3 0-14 0-45 0 19 0 21 0-22 0-3 1 26 0 17 0 7 0-14 0-23 0-12 0-7 0-11 1-11 0 17 0 14 0-13 0 4 0 14 0 7 0 8 0 2 1-3 0 23 0-5 0-16 0 8 0 15 0-22 0 27 1-23 0-8 0-7 0 19 0-51 0 80 0-40 0-1 0-12 1-7 0-21 0 18 0 11 0 33 0-23 0-15 0-7 1 31 0-24 0 48 0-49 0 41 0-28 0-11 0-3 0-2 1 5 0 4 0 5 0 13 0 4 0-30 0 18 0 11 0-25 1 24 0-3 0-5 0 7 0-19 0 14 0-7 0-13 1-8 0 3 0 7 0 3 0 11 0-15 0 20 0 24 0-46 1 5 0 31 0-16 0 14 0-28 0 41 0-39 1 6 0 4 0-7 0-4 0-5 0 2 0 3 0 11 0-3 1 7 0-49 0 24 0 31 0 13 0-20 0 7 0 17 0-4 1 15 0 11 0-5 0-7 0-9 0-30 0-22 0-12 1-2 0 11 0 24 0 14 0-9 0-16 0 40 0-31 0 10 1-18 0 8 0-20 0-8 0-7 0-2 0 18 0 3 0 16 1 4 0-6 0-11 0-11 0-2 0 12 0 5 0-1 1 13 0 5 0-23 0 16 0 13 0-14 0-15 0-6 0-19 1 32 0-15 0 22 0-32 0 21 0-3 0 11 0 47 1-59 0 4 0 4 0 3 0 33 0-21 0-53 0 70 0-39 1 33 0 21 0-24 0 19 0 11 0-20 0-21 0-10 0 23 1-14 0 5 0-2 0-2 0 29 0-10 0-26 0-5 1 7 0-2 0 11 0 13 0-28 0 11 0 19 0 10 0 15 1 11 0-7 0-11 0-22 0 10 0-4 0 5 1 7 0 8 0 10 0-9 0-13 0-10 0-35 0 39 1 7 0 10 0 4 0-6 0-6 0-11 0-5 0 1 0 22 1-22 0-4 0-15 0 27 0 13 0-8 0-10 0-17 1-7 0 27 0 12 0-38 0 18 0 16 0 2 0-3 0-5 1-13 0-14 0 18 0 15 0 8 0 11 0 6 1-13 0-16 0-12 0-29 0 11 0 19 0-5 0-25 0-10 1 20 0 25 0-21 0 24 0-47 0 48 0-13 0 21 0-37 1 17 0-17 0-14 0 2 0 13 0 13 0 21 0-3 1 15 0-18 0-19 0-36 0 19 0 4 0-28 0 50 0-35 1 41 0 3 0-29 0 25 0 5 0-22 0 18 0-34 1-20 0 13 0 38 0 2 0 16 0 11 0-32 0 0 0 49 1-44 0-5 0-13 0-1 0-10 0 24 0-31 0 43 0-30 1 29 0-41 0 33 0 44 0-51 0 36 0-41 0-9 1 1 0-3 0-9 0-4 0-4 0 12 0-2 0 34 0 8 1 7 0-12 0-11 0 1 0 8 0-27 0-12 0-4 1-7 0 7 0 5 0 30 0 15 0 9 0 12 0 6 1-56 0 24 0-47 0 61 0-44 0 17 0 7 0 3 0-8 1-21 0 37 0-30 0-7 0 38 0-29 0 11 0-12 1-6 0 30 0-41 0 27 0 3 0 10 0 4 0 12 0-12 1-9 0-10 0-29 0 6 0-1 0-17 0 3 0 11 1 8 0-16 0 19 0-12 0-11 0 25 0-16 0 47 0-24 1 10 0 10 0-37 0-17 0 4 0 14 0 39 0-20 0 1 1-20 0-21 0 12 0 20 0 27 0-24 0 15 0-12 1-17 0 1 0-16 0 31 0-8 0-15 0 0 0 26 0 22 1 20 0-27 0-37 0 50 0-11 0-56 0 27 0-19 1-7 0-22 0 39 0 13 0 5 0 15 0-12 0-2 1 5 0 10 0 10 0 8 0-9 0-10 0-7 0 15 0-33 1 5 0 8 0 3 0 24 0-50 0 32 0-26 0 25 1-5 0 24 0-28 0-16 0-1 0 7 0 29 0-24 1 15 0-7 0 17 0-22 0 16 0-21 0 9 0 15 0-2 1-8 0-28 0-9 0-11 0 35 0-29 0 16 1 11 0-11 0 11 0 4 0-23 0 29 0 0 0-4 0-29 1 77 0-52 0 27 0-18 0-14 0-4 0-21 0-16 1 13 0 17 0 30 0-17 0 0 0-23 0 34 0 10 0-21 1-25 0-8 0 55 0-59 0 18 0 57 0 31 0-39 0-42 1 9 0-5 0 38 0-37 0-22 0 32 0 5 0 4 1-4 0 6 0-6 0-8 0 30 0-25 0 2 0-6 0 12 1-2 0 17 0 36 0-1 0-40 0 20 0-67 0 18 1-36 0 24 0 22 0-6 0-12 0 49 0 14 0-21 0-3 1-1 0-5 0-2 0 24 0-5 0-23 0 0 0-2 0-21 1 11 0 26 0-6 0 2 0-12 0 22 0-14 0 36 1-44 0 17 0 10 0-63 0 49 0 18 0 13 0-32 0 5 1 2 0-20 0 3 0 18 0-6 0 13 0-11 0-3 1-21 0 41 0-13 0 5 0-24 0 27 0-9 0-3 0-9 1-15 0 6 0-13 0-1 0 35 0-16 0 19 0-27 0 29 1-7 0 2 0 5 0 2 0-9 0-2 0-13 0 34 1-7 0-39 0 17 0-12 0 18 0-2 0-4 0-24 0-5 1 36 0-42 0 22 0-36 0 32 0-9 0-1 0 12 1 4 0 28 0-36 0 21 0 19 0-33 0 46 0-45 0-6 1-11 0 31 0-4 0 4 0-27 0-11 0-12 0-14 1 5 0 10 0 14 0 1 0 9 0 26 0-16 1 2 0 25 0-13 0-34 0 22 0 12 0-10 0-17 0 36 1-15 0-22 0 36 0 22 0 5 0-31 0-6 0-34 1 45 0-8 0 6 0-21 0-18 0-15 0-14 0-5 1-2 0 11 0 8 0 19 0-17 0 7 0 6 0-12 0 45 1-4 0-4 0 15 0-42 0 6 0 24 0-19 0 36 1-51 0 18 0-16 0 5 0 37 0-23 0-12 0-21 0-5 1 26 0 1 0-6 0-2 0-5 0 14 0-5 1 20 0 1 0-4 0-17 0 19 0 17 0-27 0-13 0 16 1-1 0-14 0-7 0 16 0-2 0 6 0-24 0 61 0-11 1-27 0-10 0 15 0 56 0-38 0-3 0-28 0 29 1-47 0 49 0-43 0 63 0-7 0-33 0-15 0 35 0-3 1-19 0 25 0-17 0 1 0 7 0 0 0 8 0 4 0-3 1-10 0 5 0-5 0-11 0 28 0-33 0 15 1-15 0 27 0 23 0-23 0-27 0-2 0 32 0-26 0-2 1-4 0-23 0 7 0 9 0 35 0-24 0-20 0 21 1-9 0-8 0-10 0 4 0 5 0 11 0 12 0 50 0-43 1 1 0-16 0 24 0 16 0 9 0 10 0-57 0 48 1-9 0-15 0-10 0 15 0-32 0 8 0 24 0 14 1-19 0 4 0 17 0-12 0-36 0 35 0 7 0-30 0-3 1 5 0-22 0 36 0-15 0-11 0 25 0-9 0 23 1-34 0-20 0 17 0 32 0 7 0 0 0-29 0 16 0 15 1 0 0-15 0-35 0 51 0-26 0 3 0 12 0-12 0 16 1-28 0 37 0-23 0-11 0-9 0 29 0-20 0-9 1 0 0-13 0 13 0 10 0 16 0-41 0 39 0-14 0 29 1 27 0-26 0-32 0 12 0 1 0-12 0 1 0-5 1 38 0-52 0 11 0 5 0-6 0 20 0-24 0 6 0 39 1 1 0-14 0 4 0-5 0 38 0-10 0-50 0 14 0 4 1 14 0-20 0 37 0-18 0-26 0-8 0 30 0-9 1 13 0 0 0 6 0 9 0-3 0 2 0-14 0 3 0-8 1-10 0 12 0 13 0-55 0 70 0-35 0-16 0 29 1-47 0 14 0 20 0 2 0 15 0 11 0-10 0 0 0-9 1-11 0-9 0 27 0-34 0-4 0-9 0 8 0 2 0 21 1-40 0 4 0 23 0 8 0 11 0-16 0-28 0 42 1-36 0 16 0-6 0 5 0-10 0-13 0 6 0 8 0-8 1-5 0 28 0-17 0 12 0 17 0-24 0 0 0 24 1-37 0-1 0 19 0 7 0-16 0 18 0 33 0-41 0 3 1-34 0 12 0-8 0 9 0 8 0 22 0-1 0-38 1 31 0-3 0-4 0 6 0-34 0-9 0 31 0 3 1-10 0-10 0 1 0 5 0 8 0-2 0 16 0 4 0-5 1 27 0-5 0-21 0-10 0 24 0-1 0-45 0 41 1 6 0-29 0 4 0 12 0-25 0 24 0 36 0 8 0-13 1-33 0-16 0 22 0-39 0 30 0 22 0-17 0-19 0-8 1-12 0-6 0-7 0 30 0-9 0 12 0-2 1 4 0 34 0 6 0-18 0 1 0-24 0 11 0-8 0 18 1 4 0 4 0 10 0 12 0 1 0-4 0-3 0-11 0-16 1-2 0-7 0-33 0 0 0 37 0-16 0 31 0 15 1-48 0 11 0-37 0 37 0 9 0-13 0-11 0-10 0-15 1 8 0 29 0 20 0-22 0-14 0 6 0 4 1-38 0 18 0 10 0 11 0 23 0-24 0 48 0-9 1 19 0 5 0-1 0-41 0 18 0 3 0-27 0-40 0 41 1-1 0-23 0 33 0-7 0 13 0-16 0-50 0 42 1 18 0 8 0 15 0 16 0 12 0-10 0-14 0-16 0-9 1 13 0-34 0 12 0-12 0 17 0 12 0-22 0 10 1-32 0-26 0 4 0 18 0 17 0 15 0-19 0 4 0-6 1 27 0-6 0-3 0 38 0-20 0 33 0-55 0 13 0-17 1 14 0 6 0 2 0 8 0 5 0-13 0 27 0 10 1-4 0-28 0 22 0-22 0-12 0 52 0-32 0 20 0 15 1-19 0-15 0-33 0 4 0-18 0 42 0-4 0-20 1-10 0 23 0-22 0-6 0-11 0-8 0 11 0 10 0 2 1 5 0-31 0 41 0-19 0 14 0-20 0 18 0 29 0-14 1-10 0-7 0 32 0-18 0 2 0 6 0 5 0 5 1-2 0-12 0 5 0 15 0-30 0 25 0-17 0 10 0-48 1 38 0 8 0-23 0-1 0 2 0 7 0-10 0-3 1-11 0 58 0-45 0-13 0 1 0 11 0 33 0-29 0-5 1 29 0-28 0-7 0 2 0 12 0-6 0-3 0-11 0-13 1-8 0 59 0-8 0 6 0 7 0 4 0 0 0-8 1-2 0-11 0 3 0-33 0 13 0-6 0 27 0 14 0 6 1 7 0 6 0-11 0 0 0-22 0 2 0-10 0 18 1-42 0 7 0 26 0-3 0-17 0-24 0 36 0-2 0 45 1 11 0-45 0 2 0-8 0 2 0 41 0-22 0-6 0-34 1 19 0 10 0-24 0 4 0 16 0-11 0 3 0 21 1-10 0-14 0 25 0-40 0 12 0 8 0-27 0 29 0-10 1-2 0 32 0-8 0 9 0 16 0-49 0 53 1-5 0-7 0-17 0-20 0 5 0 51 0 3 0-50 0 9 1 17 0-36 0 41 0-27 0 4 0 6 0 11 0-13 0 0 1-12 0 4 0 6 0 22 0-5 0-13 0-12 0 8 1 44 0-57 0 7 0-26 0-10 0 0 0 10 0 37 0-25 1 2 0-5 0-20 0 56 0-44 0 1 0 15 0-1 1 27 0-38 0 17 0-7 0 3 0-2 0 22 0-12 0-13 1 22 0 30 0-78 0 15 0-9 0 28 0-50 0-1 1 11 0-16 0 38 0-17 0 9 0 11 0-8 0 21 1 1 0 12 0 1 0 5 0 14 0-9 0-10 0 2 0-16 1 12 0-6 0-10 0-18 0 6 0-14 0-7 0-18 1 10 0 28 0-22 0 47 0 2 0-29 0-21 0 56 1 23 0-26 0-16 0 20 0 7 0-29 0-17 0 10 0 2 1 25 0 16 0-44 0 24 0-20 0-21 0 41 0 16 1-5 0-13 0-20 0 31 0-14 0-1 0-12 0-19 0 16 1-11 0 17 0 2 0 5 0 6 0-6 0 16 0 10 0-9 1-13 0 0 0-37 0 44 0 7 0-10 1-42 0 36 0 18 0-12 0-22 0 17 0-15 0 6 0 22 1-19 0 13 0-28 0 1 0 15 0-26 0 19 0 9 1 16 0 4 0 3 0 9 0-3 0-9 0-16 0-3 0-37 1 34 0-8 0-7 0-8 0-6 0-6 0 9 0 18 0-2 1-8 0-12 0 5 0 52 0-17 0 49 0-59 0 48 1-41 0 45 0-36 0 30 0-52 0 11 0-2 0 2 0-32 1-24 0 16 0 52 0 19 0-33 0-4 0-12 0 10 1 27 0-23 0-5 0 11 0 0 0-10 0 15 1 5 0 1 0-8 0 2 0-8 0 14 0-12 0-17 0 3 1 11 0 10 0 3 0 6 0 1 0 2 0 0 0-21 1 31 0-11 0-13 0 5 0 19 0-13 0-12 0-20 0 30 1-4 0-17 0 6 0 43 0-47 0-11 0 28 0-10 1 12 0 13 0 15 0 10 0-14 0-5 0-21 0-9 0-25 1 47 0-22 0 17 0-40 0 13 0-36 0-23 0 45 0 9 1-2 0-2 0-13 0-11 0-12 0 65 0-60 1 13 0 17 0-10 0 2 0 12 0-25 0 33 0 13 0-22 1-8 0-6 0 20 0-2 0 17 0 20 0-45 0 20 1 0 0 16 0-9 0-5 0-8 0 2 0 3 0-4 0-19 1 0 0 10 0-21 0 47 0-46 0 16 0-5 0 11 0-14 1 22 0-22 0 12 0 21 0 33 0-34 0-8 0 15 1-30 0-31 0 27 0-8 0 28 0-41 0 33 0-12 0 24 1 8 0 15 0 16 0-13 0-12 0-18 0-17 0 32 1-59 0-6 0 26 0 9 0 27 0-28 0 13 0-9 0 11 1 3 0 8 0 3 0-8 0 3 0-16 0 4 0 33 0-53 1 4 0 14 0 2 0-30 0 29 0 9 0 8 0 0 1-4 0-8 0-26 0 42 0-26 0 7 0-18 0 22 0-23 1 22 0 0 0-6 0 1 0 20 0 6 0-9 0-3 0-12 1-3 0-18 0 38 0 9 0 6 0-21 0-31 0-3 1 0 0 18 0-21 0-10 0 45 0 5 0-16 0-6 0-9 1 9 0 16 0 8 0-7 0-4 0-7 0 5 0-28 1-14 0 2 0 13 0 8 0-3 0-11 0 20 0 4 0-15 1 4 0 13 0 9 0 1 0-41 0 26 0-45 0 55 0-6 1-21 0 18 0 7 0 14 0 1 0 0 0-13 0-9 1 6 0-23 0 13 0-16 0 34 0-14 0 12 0-28 0-26 1 31 0 17 0-19 0 1 0-4 0-4 0-7 0-5 1 5 0 5 0 25 0 13 0-36 0-5 0-17 0 12 0 36 1-48 0 29 0 0 0 23 0-13 0-18 0-15 0 17 0 8 1-12 0 21 0 8 0-11 0-21 0-7 0 31 0 14 1-46 0-5 0-17 0 17 0 12 0 33 0-32 1 0 0 3 0-2 0 19 0 0 0 20 0-36 0 1 1 26 0-1 0 19 0 13 0-28 0 37 0-24 0-16 0 22 1-41 0 25 0-31 0 38 0-16 0 23 0-28 0-16 0 19 1-12 0 24 0-22 0 1 0 11 0 50 0-52 0 13 1 0 0 25 0-24 0 10 0 1 0-14 0-35 0 5 0 33 1-28 0 3 0-22 0-5 0-20 0 18 0 18 0 11 1-1 0 8 0 23 0 0 0-2 0-32 0 19 0-8 0 17 1-6 0-23 0 35 0 29 0-26 0-16 0 6 0-22 0 50 1-21 0-31 0-11 0 37 0 3 0-21 0 11 0-19 1-1 0-4 0-5 0 0 0 15 0-5 0 5 0 1 0-18 1 47 0-21 0-29 0 33 0-7 0-12 0 16 1-22 0 19 0 7 0 9 0 19 0-26 0 12 0-10 0 25 1-40 0 14 0-24 0-16 0 15 0-19 0 28 0 8 0-10 1-23 0 35 0-30 0 26 0-48 0 43 0 26 0-35 1 14 0-11 0-9 0 32 0-28 0 31 0-28 0-1 0-12 1-5 0-10 0 27 0-8 0 1 0 14 0-48 1 19 0 13 0 14 0-14 0 20 0-43 0-3 0 13 1 16 0 13 0-1 0-8 0-1 0 2 0 12 0 3 0-20 1 12 0 8 0-14 0 21 0 2 0-21 0 24 0-2 1 4 0-17 0 42 0-1 0-44 0 41 0-12 0-2 0 20 1-30 0 2 0-8 0-20 0-13 0-12 0 12 0 18 1 2 0 46 0-2 0-28 0 48 0-35 0-47 1 39 0 0 0 2 0-9 0-5 0 4 0 46 0-76 0 80 1-33 0 31 0-35 0-8 0-24 0 31 0-7 0-4 1 25 0-47 0 5 0 25 0-35 0 27 0 10 0 10 0 10 1-13 0-12 0-7 0 14 0-30 0-22 0 47 0-29 0 34 1-19 0 8 0-9 0-9 0 2 0 24 0-2 0 5 1-29 0-21 0 20 0 8 0-2 0 6 0 10 0-15 0-5 1 8 0 14 0-27 0 21 0-17 0 13 0 14 0 8 1 4 0 2 0-1 0-2 0-10 0-14 0 13 0-6 0-8 1-8 0 7 0-16 0-14 0 22 0-2 0 4 0 14 0 9 1 7 0-13 0-9 0-13 0 26 0-12 0-31 0 39 1-6 0-37 0 62 0-45 0 1 0-16 0-17 0 9 0 17 1 12 0-13 0-6 0 21 0 10 0 13 0 20 0 10 1-14 0-17 0-13 0-6 0 14 0 2 0-16 0-6 0 10 1-19 0-1 0 17 0-5 0-2 0 8 0-7 0-19 0 23 1-28 0-17 0-11 0 24 0 27 0-11 0-7 0-3 1-30 0 28 0 28 0-16 0 6 0-5 0 26 0-61 0 28 1 8 0-14 0-5 0-3 0-7 0 8 0 9 0 6 1 9 0 2 0 4 0 14 0-40 0-1 0 48 0-26 0-4 1-7 0 9 0-37 0 1 0 21 0 38 0-36 0 13 0 3 1 16 0-2 0 15 0 26 0-10 0-13 0-16 0-24 1 4 0 19 0 0 0 21 0-43 0 0 0-13 0-23 0-3 1 17 0 12 0 1 0 3 0 16 0-40 0 54 1 6 0-13 0-22 0 36 0-11 0 8 0 6 0 2 0-5 1-4 0-5 0-3 0-30 0 2 0 32 0-32 0 16 1 19 0 15 0 4 0-21 0-3 0-1 0 5 1-18 0-10 0 41 0-26 0-16 0 41 0-31 0 29 1-3 0-27 0-7 0 56 0-16 0-6 0-10 0 2 1-27 0 16 0 4 0-28 0 21 0-26 0-22 0 3 0 23 1 44 0 11 0-32 0-6 0 45 0-19 0 3 0-17 0 55 1-16 0-53 0-9 0 3 0-21 0-5 0 11 1 12 0 34 0-11 0-7 0-10 0-7 0 3 0 6 0 7 1 10 0 3 0-10 0 15 0-29 0 41 0-10 0-30 1-3 0 34 0 13 0-47 0 18 0-44 0 24 0-11 0 46 1-16 0 25 0-17 0-11 0 9 0 2 0 9 0 36 1-31 0-56 0 32 0 2 0 12 0-5 0-29 0 28 1-10 0-10 0 24 0 38 0-60 0 17 0 14 0 15 0 7 1 6 0-15 0-6 0-3 0-7 0-13 0 1 0-10 0-3 1 0 0 6 0 17 0 1 0-15 0-14 0-11 0-15 1 11 0 17 0 24 0 4 0 12 0-6 0-10 0 10 0-23 1 7 0 2 0 26 0-16 0-17 0-15 0 58 0-31 1 7 0-2 0-8 0 20 0 4 0-38 0 27 0-1 0-7 1-1 0-8 0 8 0-11 0-20 0 6 0 8 0 11 0 5 1 7 0-33 0 30 0-21 0-3 0 9 0-4 0-15 1 18 0 4 0-13 0 16 0-7 0-7 0-13 0 17 0-3 1 28 0 13 0 22 0 0 0-25 0-16 0-21 0 19 1 7 0-5 0-5 0-6 0-5 0-8 0-18 0 41 0-19 1-29 0 40 0 2 0-13 0-15 0-22 0 4 0 21 0 39 1-3 0-19 0-22 0 29 0 4 0-12 0 17 0-9 1-31 0 18 0 23 0 2 0-30 0 37 0-40 0 10 0 2 1-24 0 14 0-18 0 18 0-17 0 27 0-30 0 13 1 36 0-12 0-10 0-7 0 21 0-45 0 67 0-20 0-2 1 0 0 10 0 9 0 1 0-8 0-8 0 2 0-4 0-11 1-19 0 14 0 21 0 0 0-31 0 20 0-7 0 12 1-6 0 25 0 8 0-6 0-13 0-13 0-16 0 17 1 6 0 12 0-7 0 2 0-5 0-41 0 59 1-28 0 33 0-41 0 18 0-20 0-7 0 1 0 26 0 41 1-18 0 20 0-51 0 26 0-26 0-12 0 22 0 10 0-31 1 11 0-21 0 33 0-23 0 18 0-17 0 6 0-5 1 71 0-50 0 6 0-34 0-10 0-8 0-8 0-11 1 11 0-12 0 37 0-17 0 13 0 22 0-15 0 35 1-25 0 20 0-5 0 14 0 18 0-3 0-30 0 10 0 13 1-15 0-10 0-9 0 12 0 2 0-17 0 21 0-5 0 11 1-3 0-7 0-35 0 3 0 5 0 38 0-34 0 10 1-2 0 0 0 7 0-32 0 4 0-9 0 7 0-8 0-25 1 46 0-1 0 26 0-4 0 5 0-7 0 0 0 26 1-42 0-17 0 14 0-14 0 37 0-27 0 30 0 1 0 8 1-15 0-4 0 27 0-47 0 44 0-1 0 1 0-7 0 19 1-1 0-41 0-2 0-9 0 19 0 1 0-1 0 13 1-1 0 14 0-15 0-20 0-26 0 30 0 3 0 17 0 1 1-11 0-12 0 2 0 0 0-17 0 10 0 19 0-21 1 22 0-9 0-15 0-23 0-19 0 19 0 16 0 31 0-15 1 6 0-19 0 37 0-33 0 24 0 22 0-57 0 12 0 16 1-3 0 19 0-51 0-9 0 20 0-41 0 20 1 12 0 39 0 0 0 18 0-37 0 26 0-31 0 35 0-10 1 47 0-53 0 23 0-19 0 45 0-4 0-37 0 3 0 42 1-46 0 25 0-28 0-10 0-11 0 19 0 20 0-16 1 18 0-31 0-16 0 31 0 20 0-33 0 8 0-11 0 28 1-20 0 12 0 6 0 23 0-28 0-33 0 44 1-35 0 52 0-25 0-45 0 44 0-3 0 28 0-43 0-2 1 1 0 20 0-48 0 10 0 3 0 24 0-33 0-26 0 80 1-24 0 9 0 1 0-7 0-29 0 0 0 23 0-37 1 31 0-1 0-20 0 28 0-12 0 24 0-20 0-17 0-9 1-17 0-4 0-7 0 15 0 15 0 13 0 2 0 1 1 28 0-29 0 4 0-6 0 6 0 25 0-23 0-20 0 37 1 24 0 18 0-24 0-14 0-43 0 24 0-26 0 2 0-23 1 16 0 21 0 2 0 3 0 5 0-19 0 41 0-14 1-24 0 0 0-5 0-17 0-8 0 21 0-8 0-11 0 17 1 28 0-7 0-17 0 34 0-5 0 0 0-24 0 13 1 1 0 11 0-22 0-29 0 30 0 2 0 22 0-30 0 17 1 15 0-3 0 6 0 2 0-39 0-34 0 18 0-13 1 29 0 7 0-41 0 47 0 2 0-10 0 21 0-6 1 30 0-64 0 23 0-18 0 18 0 17 0-38 0 44 0-7 1-14 0 25 0-5 0-11 0 30 0-55 0 6 0 28 1 21 0-49 0 31 0 11 0-2 0 3 0 9 0-1 0-4 1-12 0-1 0 20 0 6 0-23 0-27 0 31 0-31 0 16 1-8 0 21 0-25 0-1 0-10 0 0 0-9 0 6 1 7 0 7 0-2 0-15 0-4 0 68 0 12 0-40 0-6 1 25 0-34 0 18 0-39 0-17 0-7 0 34 1-27 0 15 0 26 0-1 0 53 0-55 0-15 0-6 0 9 1 15 0-28 0 10 0 31 0-8 0 2 0-31 0 18 0 8 1 17 0 10 0 5 0 14 0-12 0-9 0-11 0-15 1 20 0-40 0 14 0-5 0 18 0 12 0-25 0 5 0 9 1 3 0-3 0-2 0-6 0-23 0 27 0 9 0-28 1 10 0-30 0 21 0 2 0 34 0-39 0 9 0-12 0-2 1 35 0 16 0 1 0-12 0-21 0 26 0 15 0-34 0 22 1-17 0 22 0-24 0-2 0 24 0 27 0-54 0 55 1-1 0-36 0-17 0 32 0 1 0-42 0 1 0-12 0 10 1-15 0-2 0 23 0 34 0-13 0-14 0 10 0 0 0-4 1-5 0 3 0-27 0 52 0-43 0 23 0-2 0 12 1-39 0 36 0 6 0 22 0-1 0-10 0-15 0-22 0 6 1 0 0-2 0-13 0-11 0 50 0 13 0 11 0-53 1 48 0-7 0-15 0-34 0 33 0 12 0-2 0-32 0-21 1-2 0-10 0 7 0 15 0 6 0 33 0-45 0 40 0-16 1-1 0 2 0-5 0 50 0-36 0-18 0 9 0-10 1 8 0 16 0-8 0-16 0-16 0 37 0 6 0 3 0-15 1 13 0 2 0-40 0 13 0 21 0 10 0-23 0 5 1 28 0-26 0 3 0-8 0 17 0 11 0 17 0-6 0-13 1-7 0-20 0 33 0-48 0-9 0 35 0-5 0-11 0 13 1-53 0 32 0 19 0-46 0-24 0 40 0-25 0 31 1-19 0 32 0-13 0 1 0 21 0-39 0 25 0 26 0-17 1 7 0 3 0 2 0 4 0-4 0 0 0-5 0-11 1 11 0-19 0 23 0-18 0-3 0 10 0 15 0-35 0 23 1 0 0-25 0-3 0 8 0 12 0-17 0 9 0 4 1 11 0-1 0-10 0 4 0-5 0-5 0-1 0-15 1-13 0 11 0 7 0 8 0 6 0 6 0-1 0-3 0 20 1-4 0 13 0-21 0-13 0 57 0-26 0-16 0 9 1-1 0 5 0 1 0-6 0-9 0-8 0-13 0 1 0 20 1-1 0 6 0 6 0-23 0-10 0-2 0-16 0 3 0 13 1 4 0 4 0-2 0-4 0 30 0-23 0-7 0 11 1-26 0-2 0-36 0 6 0 43 0 5 0-5 0 41 0-21 1 10 0-18 0 28 0-32 0-1 0-10 0-5 0-3 1 9 0 8 0-18 0-9 0-10 0 13 0 12 0 6 0 14 1 8 0 16 0 10 0 5 0 11 0-9 0-8 0-6 0-23 1 8 0 3 0 8 0 1 0-6 0 0 0-7 0-11 1-23 0 8 0 19 0 5 0-26 0 43 0-12 0-1 0-15 1 2 0 14 0-4 0-7 0-9 0 3 0 60 0-55 1-2 0 9 0 15 0-2 0-8 0-5 0-4 0-3 0-18 1-14 0 11 0 28 0-28 0 19 0 10 0-23 0 14 0 17 1 21 0-17 0 37 0-15 0-49 0 25 0-22 0 11 1 3 0-12 0 19 0-22 0 7 0-3 0-26 0-23 0 21 1 29 0-23 0-5 0 68 0-46 0 10 0 24 0-39 1-10 0 21 0-18 0 29 0-21 0-14 0-39 0 59 0 6 1-30 0 17 0 20 0-21 0 33 0-16 0 10 0-19 0 58 1-72 0-18 0 27 0-19 0 30 0-12 0-1 0-11 1 1 0 6 0 5 0 45 0-22 0 0 0-13 0 12 0-29 1 9 0 13 0 3 0 6 0 10 0 7 0-14 0-3 0-9 1 31 0-29 0 6 0 16 0-1 0-15 0-19 0 22 1-12 0-8 0-18 0 7 0 12 0-11 0 32 0 7 0-17 1 4 0 9 0-5 0-24 0-13 0 0 0-13 0-3 1 14 0 8 0 13 0 7 0 4 0-15 0 43 0-36 0 18 1 2 0 6 0-12 0 8 0-13 0-14 0-19 0 48 0-37 1-36 0 20 0 15 0 11 0-13 0 4 0 22 0-14 1-16 0-3 0-10 0 47 0 14 0 9 0-29 0 35 1-50 0 35 0-10 0 3 0-2 0-18 0 22 0 12 1-44 0-7 0 24 0 11 0 16 0-1 0-6 0-7 0-3 1-15 0-10 0 39 0-44 0-3 0 27 0-1 0 20 0 12 1-53 0 20 0-7 0-9 0-11 0 11 0 16 0-1 1 9 0 5 0 12 0-2 0-21 0 2 0-11 0 9 0-5 1-7 0-13 0 1 0 3 0 5 0 11 0-3 0 21 1-18 0 34 0 0 0 2 0-20 0 18 0 17 0-1 0-9 1-39 0 20 0 16 0-32 0-11 0 14 0-16 0-13 0-20 1 18 0 17 0 35 0-42 0-8 0 13 0 0 0 8 1-8 0-4 0 10 0 0 0-28 0 67 0 2 0-50 0 42 1-50 0 64 0-63 0 21 0 2 0-12 0 32 0 16 1-3 0-16 0-67 0 47 0-17 0-27 0 2 0 41 1 3 0 12 0 11 0 3 0-6 0-14 0-9 0 1 0-29 1 25 0-14 0 14 0 0 0-12 0-22 0 37 0-21 1 11 0-15 0 5 0-12 0 22 0-19 0 6 0-14 0 0 1 31 0-12 0 8 0-15 0-2 0 10 0 18 0 0 1 27 0-84 0 35 0-9 0-10 0-1 0-20 0 13 0 18 1 36 0-41 0 31 0-38 0 18 0 36 0-49 0 26 0-11 1-4 0-23 0 25 0-25 0 24 0 17 0 15 0 6 1 10 0 3 0-13 0 0 0-17 0-31 0-3 0 16 0 28 1-12 0 21 0-14 0-43 0 2 0 35 0-24 0-6 1 7 0 2 0 5 0-5 0-15 0 7 0 8 0 24 0-5 1 13 0-27 0 8 0 25 0-27 0 38 0-58 0 23 0-28 1-23 0 55 0 10 0-24 0-9 0-17 0 1 0 30 1-26 0 26 0 0 0 16 0-2 0-19 0-9 0-16 0 12 1 14 0 13 0 1 0-16 0 21 0 4 0 5 0 7 0-6 1-14 0-2 0 24 0-40 0 18 0-17 0-4 0 2 1-14 0 29 0 15 0 8 0-8 0-9 0-10 0 20 0-34 1 25 0-25 0 20 0-47 0 17 0-13 0-14 0 52 1 22 0-6 0-5 0-19 0 5 0 21 0-11 0 25 0 22 1-27 0-34 0 16 0-22 0-8 0-11 0-4 0 8 0 8 1 17 0-12 0 18 0-13 0 18 0 10 0-16 0 14 1 7 0 28 0-11 0-18 0-36 0 14 0 4 0 3 0-28 1 71 0-17 0-17 0-23 0 2 0-8 0 0 0-3 1 15 0-4 0 15 0-6 0 25 0-12 0-21 0 13 0 12 1-41 0 25 0 9 0-15 0-28 0 40 0 10 0 11 0-7 1 13 0-10 0-6 0-8 0-14 0-11 0-14 0 1 1 13 0 10 0 4 0 19 0-1 0-14 0-43 0 43 0-39 1 32 0 23 0 20 0-21 0-37 0 42 0-26 0 4 1 3 0 6 0-12 0-13 0-17 0-14 0 16 0 8 0 14 1 14 0-5 0-8 0 1 0-13 0 1 0 7 0 4 0-2 1 33 0-32 0 4 0 0 0-10 0 37 0-27 0-8 1 13 0-18 0-6 0-8 0-5 0 11 0 3 0 7 0 7 1 11 0 6 0-10 0-15 0 25 0 7 0 2 0-14 1 15 0 9 0-14 0-31 0 23 0-20 0-14 0-9 0-22 1 20 0 18 0 12 0-9 0 32 0-9 0-5 0-4 0-9 1-9 0-10 0-12 0 11 0 9 0 12 0 8 0 21 1-37 0 42 0-21 0 1 0-10 0 29 0-20 0-3 0-16 1 9 0 37 0-19 0 9 0-14 0 37 0-39 0 12 1 9 0 3 0 6 0-7 0-6 0-6 0-3 0-38 0 64 1-38 0-8 0-12 0 2 0 6 0 9 0-33 0 34 0-35 1 49 0 0 0-29 0 21 0 12 0-1 0-1 0-8 1-6 0-14 0 22 0-10 0 11 0 13 0 9 0 3 1 0 0-10 0-11 0 4 0-21 0 14 0-6 0 10 1-18 0 13 0-14 0 7 0 24 0-64 0 19 0 15 1 8 0-32 0 21 0 8 0 15 0-2 0-24 0 7 0 3 1-9 0-8 0-6 0-4 0 6 0 7 0 12 0 12 1-24 0 14 0 27 0-38 0-2 0-2 0-17 0 3 0 11 1 6 0 21 0-14 0 22 0-38 0-5 0-10 0-25 1 9 0 2 0 23 0 15 0 12 0 19 0-25 0-14 0 26 1-34 0 14 0 25 0 9 0-11 0-31 0 11 0 15 0 13 1 13 0 9 0 12 0-9 0-10 0-14 0-40 0-16 1 22 0 18 0-6 0 12 0 10 0-21 0-34 0 46 0 2 1-3 0-8 0 27 0-62 0 45 0-7 0 0 0-17 0-23 1-6 0-2 0 10 0 12 0 13 0-30 0 81 0-26 1 4 0 12 0 15 0 11 0-17 0-4 0-19 0-11 0-11 1 6 0-30 0 34 0 18 0-14 0-18 0 8 0 2 1-26 0-7 0 57 0-16 0 8 0 10 0 14 0 12 0-12 1-11 0-12 0-8 0-28 0 6 0-14 0 20 0 22 0-25 1-15 0 16 0-19 0-1 0-16 0 14 0 52 0 3 1 7 0 7 0 18 0-14 0-24 0-2 0 8 0 6 0 14 1-14 0 0 0-11 0 2 0 29 0-42 0-30 0 23 1 32 0-20 0 22 0-16 0 3 0 1 0 22 0-17 0-23 1-9 0 49 0-34 0-4 0-9 0 21 0-7 0 20 0 9 1-25 0 42 0-13 0-19 0-35 0-1 0 20 0-4 1-3 0-28 0 6 0 0 0 19 0 13 0-7 0 22 0-26 1 9 0 2 0-39 0 24 0 22 0-14 0 20 0-39 1 16 0-13 0-15 0 14 0 11 0 13 0 7 0-5 1 14 0-32 0 19 0-28 0 9 0 3 0-37 0 30 1-10 0 1 0 14 0 24 0-20 0 10 0-3 0 11 1-19 0 15 0 21 0-32 0 9 0 3 0 9 0-17 0-14 1 12 0 3 0-14 0-19 0 11 0 13 0-18 0 39 1 1 0 9 0 3 0-8 0-10 0-18 0 1 0 18 0 5 1-3 0-18 0-15 0-8 0-1 0 10 0 14 0 18 0 11 1 14 0 0 0-8 0-16 0 8 0-2 0-14 0-13 1-13 0 6 0-1 0 34 0-32 0 31 0-22 0 7 0-4 1-12 0-3 0-1 0 3 0 3 0 0 0 11 0-8 1-10 0 28 0-17 0-10 0 41 0 7 0 5 0-28 1 9 0 3 0-10 0 9 0-10 0-10 0-17 0-1 0 37 1-20 0 22 0-37 0-25 0 3 0 27 0 36 0-23 1 18 0-25 0 12 0-16 0-11 0 29 0 3 0-34 0 56 1-29 0-29 0 31 0 15 0-3 0-20 0-34 0-3 1-16 0-17 0 35 0 27 0-26 0 46 0-20 0-12 0 44 1-44 0-10 0 13 0-12 0 4 0 29 0-17 0 10 0 7 1 13 0 6 0-18 0-21 0 11 0-61 0-2 0 46 1-30 0 46 0 10 0 13 0 13 0-13 0-11 0-16 0-32 1 44 0-19 0-13 0 11 0 5 0-2 0 4 0 4 0-1 1 8 0 8 0-36 0-20 0-8 0-11 0 17 0 17 1 24 0-2 0-14 0 8 0-5 0 8 0-13 0 15 1-27 0 38 0-9 0-46 0 47 0 5 0 11 0 8 1-13 0-8 0-3 0-3 0-21 0 9 0 4 0-13 0-2 1 19 0-30 0-15 0 20 0 50 0-3 0-5 0-23 0-6 1 2 0-3 0-12 0-2 0 1 0 12 0 4 0 18 1-18 0-1 0 12 0-19 0-16 0 18 0 30 0-6 0 3 1-44 0 61 0-21 0-12 0 27 0-32 0 17 0-43 1 52 0-22 0 14 0-2 0 15 0-3 0-16 0 31 0-19 1-5 0 26 0-32 0 7 0 3 0 5 0-12 1-28 0 25 0 9 0-20 0 30 0 30 0-63 1 11 0-4 0 19 0 2 0 8 0 5 0-3 0-11 0 3 1-4 0-9 0 40 0-43 0 18 0-23 0-12 0-16 1 14 0 11 0 25 0-24 0-18 0 43 0-19 0 14 0 3 1 9 0 4 0-31 0 0 0-7 0 12 0 25 0-26 0 5 1 12 0-4 0 14 0 8 0-4 0-10 0-1 0-10 1 17 0-5 0-31 0 32 0-26 0 33 0-39 0 32 1 0 0 13 0-40 0 28 0-17 0 12 0 12 0 6 1 20 0-19 0-9 0-10 0-19 0-30 0 50 0-17 0 1 1 15 0-3 0-28 0 22 0 3 0-36 0 7 0 12 0-4 1 12 0 13 0-2 0-19 0-1 0-12 0-3 0-3 1 7 0 0 0 9 0 0 0 16 0 38 0-58 0 33 0 24 1 13 0-14 0-22 0-14 0 3 0 10 0 0 0 10 1 2 0-12 0-27 0-8 0-1 0-19 0 9 0 7 0 10 1 26 0-16 0 6 0 4 0-12 0 14 0-28 0 30 0 5 1 14 0-3 0 24 0-44 0 49 0-64 0 23 0 12 1-28 0-56 0 54 0-33 0 5 0 13 0 11 0 17 0-3 1 19 0-24 0 13 0 20 0-49 0 55 0-36 0-5 1-19 0-8 0 27 0 23 0 17 0-34 0 20 0 20 0 4 1-21 0-19 0 11 0 7 0 6 0 10 0-13 0-10 0-7 1-4 0-25 0 35 0 1 0 5 0 10 0 16 1-4 0-61 0 42 0-46 0-10 0-15 0 5 0 8 0 18 1 19 0-18 0 24 0 6 0-26 0-25 0 3 0 25 1-8 0 25 0 10 0 12 0 8 0-10 0-9 0-37 0-3 1-7 0-15 0 2 0 8 0 15 0 3 0-9 0 32 0-16 1 2 0-16 0 26 0-15 0 20 0-14 0 10 0 9 1 2 0 9 0-12 0-5 0-1 0 4 0-21 0 0 0 13 1-20 0 11 0 17 0 18 0 9 0-13 0-15 0-8 0-16 1 5 0 6 0 2 0 5 0-6 0 14 0-26 0 35 1-39 0 36 0 4 0-36 0-18 0-15 0 16 0 13 0 23 1-4 0 23 0-32 0 14 0-12 0-7 0 25 0 7 1 4 0-1 0-10 0-11 0-51 0 39 0 17 0 6 0 14 1 1 0-19 0-14 0 7 0 8 0-9 0 13 0-21 0-56 1 8 0 14 0 35 0-2 0-19 0-12 0-6 1-13 0 22 0 11 0 10 0-13 0 18 0 54 0-79 1 12 0 9 0 3 0-8 0-16 0 5 0 6 0-2 1 10 0-8 0 26 0-29 0 15 0 9 0 13 0-22 0 12 1-33 0 14 0 27 0-33 0 22 0-12 0-9 0 17 0 3 1 8 0 12 0 6 0 10 0-11 0-13 0-5 0-7 1-25 0-17 0 7 0 32 0-18 0 24 0-47 0 61 0-15 1-21 0 22 0-19 0 6 0-17 0-7 0 12 0 6 1 24 0-34 0 11 0-4 0 52 0 22 0-62 0-22 1 77 0-10 0-21 0-27 0-16 0 21 0-2 0-4 0 30 1-32 0 3 0 11 0-11 0-26 0 16 0 10 0 1 1-16 0-9 0 29 0-42 0 24 0 1 0 4 0 4 0 30 1-42 0 10 0 16 0 16 0-35 0 14 0-44 0 50 1 16 0 30 0-23 0-35 0 9 0 8 0 11 0 0 0 1 1 4 0-17 0 1 0 0 0-9 0 10 0 6 0 7 0-8 1-5 0-4 0 12 0-14 0-19 0 19 0-22 0 46 1-26 0 4 0 8 0-1 0 11 0-1 0-8 0-6 0 13 1-33 0 25 0-6 0-8 0-8 0 6 0-23 0 30 1 8 0-9 0-4 0-20 0-23 0 22 0-1 0 36 0-14 1 6 0 6 0-23 0 22 0 11 0 9 0-7 0-16 0-22 1 33 0-9 0 2 0-7 0 2 0-13 0-1 0-14 1 11 0 16 0 35 0-37 0 21 0 4 0 9 0-5 1-6 0-15 0-15 0 52 0-39 0 28 0 19 1-21 0-62 0 9 0 31 0-25 0 6 0 14 0-34 0 22 1-21 0 21 0 6 0-15 0-8 0 21 0-12 0 8 0-16 1 50 0-48 0 37 0-28 0 5 0-11 0-6 0 3 1 3 0 15 0 5 0-18 0 41 0-2 0-62 0 41 0-15 1 6 0 18 0-9 0 6 0 13 0-16 0-6 0 19 0-13 1 0 0 5 0 15 0 6 0-20 0 35 0-37 1 10 0-8 0 36 0-1 0-9 0-15 0-16 0 7 0-28 1-12 0 20 0-17 0 5 0 37 0-19 0 3 0 10 1-8 0-5 0 15 0-44 0 65 0-18 0 16 0-42 0 62 1-40 0-7 0 1 0-23 0 25 0 5 0 16 0-7 0-9 1 5 0-28 0-25 0 35 0-20 0 27 0 6 0-49 1 31 0-8 0-3 0-5 0-9 0 6 0 10 0 30 0 30 1-13 0-25 0 5 0 13 0 8 0-34 0 55 1-16 0-22 0-3 0-13 0-17 0-8 0 28 0-16 0 2 1-3 0-15 0 1 0 10 0 5 0-1 0 15 0-8 0-3 1-2 0 0 0 16 0-8 0-29 0 61 0-21 0 14 1-9 0-5 0-15 0 9 0-2 0-16 0 24 0-31 0 28 1-6 0 14 0-31 0 1 0-11 0-12 0-7 1 1 0 9 0 26 0-14 0-4 0-2 0 12 0 3 0 29 1-37 0 4 0 6 0 31 0-21 0 5 0 17 0-19 0-18 1 38 0-28 0-6 0 0 0-8 0-3 0 6 0 8 1 0 0 37 0-16 0 10 0-47 0 17 0 7 0-5 0 8 1-1 0-19 0 13 0-5 0-2 0-2 0 4 0-5 1-1 0 31 0-5 0-9 0-12 0 15 0 16 0 9 0-3 1-6 0-6 0-4 0-37 0 24 0-36 0 53 0-24 0-11 1 6 0-26 0 33 0 17 0-27 0 23 0 7 0 7 1 3 0-1 0-6 0-6 0 28 0-54 0 10 0-5 0-15 1-5 0 8 0 15 0 31 0 4 0 7 0-44 0 3 1-2 0 32 0-46 0 15 0-7 0 13 0-29 0 41 0-25 1 19 0 10 0 27 0 11 0-42 0 35 0-3 0-18 0-3 1-9 0-1 0-35 0 41 0 15 0-13 0-28 0 5 1-2 0-2 0 17 0 14 0 6 0-2 0-3 0-12 0-3 1-16 0 26 0 0 0-17 0 7 0-33 0 38 0 19 1-25 0 0 0 11 0 1 0-17 0 30 0-14 0-6 0-22 1 28 0 9 0-28 0-19 0 16 0 5 0-17 0-8 0 2 1 2 0 11 0 5 0 6 0 5 0-17 0 3 0 14 1 11 0-35 0 4 0 26 0-40 0 21 0 8 0-17 0 23 1 3 0 10 0 18 0 2 0-2 0-18 0-7 0-32 0 18 1-24 0 20 0-11 0 12 0-7 0-19 0-12 0-17 1 4 0 2 0 41 0-3 0 3 0 13 0 12 0 11 1-49 0-18 0 17 0 42 0-15 0-34 0 24 0 5 1-7 0 16 0 14 0 7 0-10 0-12 0 23 0-36 0-12 1 9 0-6 0-2 0-22 0 60 0-41 0 10 0 2 0-20 1 0 0 37 0-38 0 25 0-30 0 6 0 28 0 17 1-33 0-7 0 26 0-16 0-26 0 16 0-28 0 14 0-16 1 18 0 20 0-10 0 45 0-27 0 13 0-30 0 22 1-8 0 1 0 22 0 8 0 9 0 15 0-1 0-11 0-14 1-15 0-8 0-9 0 4 0-15 0 37 0-26 0-3 0-9 1 17 0-16 0 3 0 10 0-8 0-9 0 1 0 5 1 60 0-48 0-11 0-10 0-12 0-2 0 59 0-62 0 7 1 10 0 15 0-4 0 20 0 13 0 6 0 3 0-9 1-14 0 10 0-3 0 0 0 4 0 8 0 9 0-3 0-13 1-17 0 15 0 16 0 3 0-14 0-6 0-8 0 12 0-30 1-2 0-9 0-13 0 6 0 5 0 0 0 11 0 38 1-12 0-6 0-32 0 29 0 3 0-48 0 41 0 5 0 16 1-11 0 3 0 11 0-23 0 12 0 2 0 8 0 0 1-7 0-7 0-7 0-27 0 12 0-9 0-12 0 32 0 9 1-8 0 17 0-30 0-5 0 17 0 0 0-28 0 22 0-14 1 0 0-10 0 4 0 3 0 6 0 6 0-6 0 32 1-27 0 28 0-17 0 13 0-1 0 1 0 10 0 4 0 0 1-27 0-23 0-12 0 11 0 13 0-25 0 28 0 15 1 22 0-34 0 17 0-9 0 4 0-7 0-10 0 47 0-20 1-43 0 16 0-13 0-17 0 24 0 17 0 4 0-7 0 9 1-6 0-3 0 27 0-36 0-17 0 21 0-7 0-14 1-24 0 26 0 1 0 6 0 16 0 16 0-1 0-9 0 2 1-21 0 35 0-20 0 0 0 35 0-20 0-9 0 39 1 14 0-5 0-15 0-26 0 0 0-13 0 7 0-2 1-8 0-23 0 31 0 17 0-25 0 12 0 3 0-45 0-10 1 42 0-3 0 9 0 42 0-15 0-12 0 0 0-17 1 10 0 6 0-18 0 17 0-11 0 22 0-6 0 16 0 4 1-9 0-13 0 5 0-13 0-2 0-6 0 16 0-11 1 19 0 3 0-28 0 14 0-8 0-3 0-12 0 57 0-19 1 28 0-29 0-36 0 31 0 19 0-17 0-51 0 66 0-10 1-20 0 10 0-10 0-6 0 28 0 26 0-74 0 25 1 22 0-32 0 9 0-17 0 26 0 8 0-11 1 8 0-25 0 28 0 1 0 12 0-12 0 7 0-10 0 29 1-23 0 8 0-2 0 8 0-1 0-3 0 3 0-14 1 36 0-10 0-15 0 12 0-63 0 15 0-24 0 25 0 10 1 33 0-25 0-7 0 9 0-9 0 21 0-69 0 84 1-1 0-96 0 25 0 76 0 5 0-3 0-46 0-15 1-13 0-8 0-2 0 16 0 7 0 17 0-46 0 17 0-13 1-20 0 79 0-1 0-7 0-42 0 60 0-19 0-18 1 5 0-14 0-17 0-10 0-1 0 13 0 13 0 4 0 22 1 5 0 33 0-51 0 26 0-9 0-18 0-19 0 40 1-4 0-8 0 24 0 18 0-26 0 38 0-22 0-10 0-7 1-25 0 15 0 5 0 7 0-2 0-30 0-12 0 68 0-20 1-7 0 1 0 4 0 15 0 3 0-2 0-40 0-12 1-12 0-11 0-1 0 3 0 16 0 18 0 14 0-28 0 37 1-5 0 13 0 15 0-1 0 8 0-17 0-3 0-7 1-15 0 9 0 2 0-9 0-16 0 31 0-39 0 37 0-5 1-14 0-15 0-3 0 7 0-30 0 35 0 1 0 3 0 23 1-22 0-8 0-7 0 47 0-44 0 26 0-4 0-1 1-23 0 26 0-9 0 15 0 28 0-25 0-38 0 10 0 9 1 6 0 1 0 17 0-12 0-4 0 4 0-26 0-18 1 8 0 1 0 31 0-19 0-11 0 13 0-9 0 14 0-15 1 37 0-14 0-34 0 28 0 5 0 4 0 6 0 4 0-14 1-3 0-15 0 21 0-23 0 8 0-11 0-16 0-5 1 4 0 10 0 2 0 2 0 7 0-9 0-6 0-5 0 7 1 7 0 5 0-2 0 1 0-7 0 11 0 0 0 18 1-13 0 7 0-12 0-20 0-9 0 14 0 31 0-36 1 43 0-28 0 9 0-16 0-3 0 8 0-10 0-4 0-13 1 40 0 13 0 0 0-10 0-14 0-4 0 16 0-29 1 10 0 14 0 35 0-20 0-22 0-22 0 28 0-1 0 13 1-3 0 16 0-1 0 19 0 1 0-6 0-10 0-9 1-2 0-18 0-24 0 19 0-8 0-1 0-10 0-6 0 6 1 10 0 6 0 5 0-7 0 10 0-20 0 27 0-7 0 2 1-17 0 4 0-13 0 32 0-2 0-17 0 6 0-12 1-13 0-16 0 45 0 4 0 19 0-44 0 8 0 19 0 6 1-24 0 8 0 18 0-35 0 31 0-1 0-9 0-12 0-7 1 38 0-11 0-32 0 21 0 6 0-3 0-16 0-1 1 50 0-23 0-35 0 36 0-31 0 6 0 1 0-14 0 18 1 15 0 13 0-3 0-33 0 15 0 2 0 19 0-12 1-12 0 24 0-29 0 0 0 26 0-13 0-10 0-17 0-10 1-5 0 7 0 10 0 11 0 50 0-52 0 2 0 16 1 27 0-4 0 29 0-22 0-61 0 47 0-1 0-29 1-2 0-8 0 23 0 23 0-2 0-23 0-2 0 40 0-29 1 5 0 17 0-39 0 41 0-39 0 22 0 4 0-14 1 32 0-41 0 25 0 37 0-45 0 1 0 15 0 12 0-47 1 30 0-21 0-4 0 15 0 32 0-37 0-5 0 2 0 15 1-6 0 9 0 22 0-22 0 9 0-3 0-5 0-16 1-11 0 19 0-27 0 27 0 11 0-23 0 22 0-46 0 34 1-25 0 3 0-26 0 6 0 19 0 28 0-40 0-11 1-2 0 32 0 41 0-21 0-36 0 33 0 13 0 13 0 21 1-9 0-13 0-9 0-9 0 8 0-32 0 4 0-2 0-9 1 21 0-17 0-8 0-9 0 0 0 6 0 18 0-4 1-4 0-14 0-3 0 39 0 7 0 12 0 4 0-5 0-8 1-8 0-12 0-3 0-19 0 2 0 10 0-34 0-15 1 61 0-33 0 13 0 15 0 8 0-7 0 27 0-53 0 16 1-14 0-6 0-24 0 19 0 18 0 19 0 19 0-27 0 9 1 1 0 10 0 22 0-1 0-14 0 8 0-11 0-1 1 6 0-33 0 13 0 15 0-8 0-47 0 45 0 8 0-2 1 6 0 18 0-51 0 24 0 22 0 8 0-19 0-8 1 13 0-20 0-1 0 13 0-12 0-8 0-4 0-11 0 1 1 5 0 10 0 22 0 24 0-51 0-22 0 23 0 13 0 6 1-7 0 1 0-19 0 5 0-31 0 31 0 27 0-16 1-17 0 10 0-50 0 55 0-10 0 13 0-4 0-12 0-40 1-4 0 49 0-36 0 23 0-34 0-14 0 36 0 34 1-8 0-16 0-13 0 20 0-17 0 15 0 53 0-37 0 17 1 14 0-12 0-24 0 40 0 7 0-89 0 64 0-30 0 21 1 23 0-24 0-1 0-28 0 54 0-15 0-11 0-6 1 16 0 11 0-17 0 7 0-8 0-10 0 18 0-18 0-13 1 11 0-13 0 18 0 33 0-27 0 10 0 7 0 2 1-5 0-6 0-11 0 9 0-15 0 29 0-46 0 22 0 9 1-9 0-8 0-9 0-15 0-16 0 12 0 12 0 11 0 17 1-58 0 59 0 9 0-7 0-1 0 7 0 8 0-29 1-9 0-4 0 2 0 14 0 28 0 6 0-31 0-21 0 37 1 11 0-24 0-4 0-2 0-26 0 27 0-40 0 65 0 24 1-4 0-22 0-22 0-11 0 14 0-17 0 27 0-33 1 26 0-17 0 10 0 34 0-65 0 40 0-23 0-4 0 23 1 17 0 24 0 1 0-18 0-41 0 29 0-50 0 52 1 12 0 19 0-5 0-5 0-17 0-35 0 10 0 2 0-3 1-5 0 8 0-1 0 22 0-21 0 19 0-6 0-18 0 24 1-25 0 24 0 11 0-5 0-10 0-5 0-32 0 28 1-6 0 22 0-7 0 20 0-18 0-3 0-8 0-32 0 27 1-2 0-7 0-1 0-3 0 7 0 25 0 5 0-33 1 12 0-9 0 28 0-28 0-14 0 2 0-17 0 15 1 13 0 7 0-18 0 7 0 11 0-9 0-16 0-9 0 4 1 9 0 6 0 16 0-14 0-4 0 7 0 35 0 6 1-49 0 6 0 29 0-25 0 18 0 1 0 11 0-31 0-8 1-15 0-15 0 10 0 14 0 20 0-3 0-16 0 18 1-26 0-17 0 55 0 5 0 10 0 19 0-42 0-2 0-15 1-3 0-1 0-2 0 5 0 9 0 4 0-4 0-9 0 44 1-35 0 12 0 16 0 8 0-34 0 12 0 13 0-33 1 14 0-9 0-12 0-2 0-3 0 10 0 4 0 5 0 28 1 7 0-28 0-15 0 20 0 5 0-18 0-17 0 6 1 19 0-19 0 14 0 27 0-35 0 25 0-9 0-1 0 1 1 4 0 0 0 7 0 9 0 13 0 8 0-3 0-47 1 31 0-2 0-1 0 9 0 25 0-53 0 28 0 14 1-61 0-6 0 29 0 4 0 12 0 1 0 5 0-8 0-9 1-8 0-8 0-11 0 21 0 5 0-12 0 31 0-33 1-47 0 76 0-31 0 39 0-10 0-8 0 21 0-24 0-5 1 4 0-29 0-7 0-4 0 3 0 39 0 24 0-7 0-13 1-10 0-23 0 14 0-8 0-13 0 44 0-18 0-4 1-6 0 16 0-4 0-32 0-12 0 22 0-4 0 12 0-17 1 0 0 17 0 9 0-18 0-11 0 0 0 12 0 38 1-17 0 3 0 14 0 16 0-1 0-9 0-18 0-3 0-11 1 1 0 10 0 30 0-23 0 8 0 14 0 9 0 5 1-15 0-9 0-8 0 4 0 4 0-4 0-16 0 7 1 22 0 12 0 10 0-30 0-36 0 26 0-8 0-7 0-23 1 39 0 21 0 2 0-30 0 3 0-15 0-14 0-6 0-17 1-1 0 12 0 13 0 8 0 15 0-9 0 33 0-36 1 22 0 0 0 5 0 8 0 12 0-8 0-19 0 1 0-9 1 22 0-31 0-7 0-21 0 49 0-2 0-16 0-36 1 21 0 5 0-2 0-13 0-1 0 5 0 6 0 1 0 17 1 32 0-16 0 7 0 7 0-55 0 67 0-43 0 12 0-2 1-34 0-3 0 24 0-13 0 6 0 14 0 2 0 15 1 6 0-2 0-4 0-8 0-7 0-12 0 27 0 22 0-12 1-66 0 22 0 7 0-16 0 1 0 3 0-9 0 13 1 38 0-39 0-11 0-15 0-6 0 60 0 18 0-16 0-11 1-23 0 36 0-8 0-16 0 20 0-3 0-14 0 27 0 2 1-35 0 12 0 5 0 6 0 7 0-18 0-29 0 25 1-12 0-5 0-5 0-2 0 13 0-2 0 12 0 20 0-41 1 44 0 1 0-48 0 20 0 6 0 9 0-36 0 45 1-47 0-14 0-17 0 17 0 19 0 29 0-12 0-1 0 6 1 26 0 15 0-34 0 2 0-20 0-10 0 32 0-5 0-14 1-4 0 34 0-24 0 3 0 1 0-19 0-6 0-1 1 10 0 10 0 16 0 12 0 11 0 9 0 0 0-14 0-12 1-12 0 0 0 1 0-2 0-39 0 44 0 3 0 0 1-32 0 23 0 16 0-30 0 5 0 2 0 19 0 14 0 13 1 12 0 0 0-17 0-10 0-8 0-43 0 35 0-10 0 13 1 8 0 12 0 6 0-1 0-8 0-4 0-19 0-1 1-12 0-30 0 11 0 15 0-26 0 53 0-21 0 44 0-47 1 48 0-57 0 4 0 27 0-10 0 21 0-5 0-36 1-15 0 21 0 25 0-9 0 20 0-24 0-32 0 35 0 19 1 16 0 12 0-10 0-15 0-27 0 4 0 3 0 29 0-55 1 4 0 25 0 9 0 1 0 18 0-63 0 77 1-99 0 9 0 59 0 1 0-9 0 34 0-33 0-16 1 45 0-8 0-11 0-50 0 24 0 17 0-7 0-39 1 13 0-32 0 47 0-25 0 22 0-21 0 15 0-34 0 69 1 5 0 9 0 5 0-1 0-2 0-13 0-7 0 25 1-23 0 20 0-28 0 33 0 1 0-25 0 12 0-46 1 39 0-17 0-13 0 33 0-29 0 19 0 3 0-59 0 58 1-34 0 4 0 5 0 45 0-30 0 37 0-33 0-36 1 17 0-6 0 3 0-8 0-12 0-2 0-16 0 30 0 10 1 5 0-25 0-13 0-12 0-12 0 9 0 16 0 14 0-25 1 49 0 0 0 28 0-34 0 0 0-13 0-20 0 13 1 17 0-4 0-27 0-21 0 24 0 44 0-27 0 2 0 12 1 8 0 22 0-21 0-7 0-7 0 22 0 29 0-53 0 18 1-1 0-33 0 9 0 18 0-12 0-10 0-17 0 15 1 11 0 15 0 3 0 16 0-25 0-12 0-8 0-18 0 9 1 16 0-2 0 8 0 4 0 18 0-23 0-2 0 6 1 14 0-5 0 48 0 1 0-43 0 21 0-28 0-35 0 41 1-2 0-18 0-1 0-8 0 0 0 1 0-4 0-25 0 13 1 17 0-3 0 16 0-20 0 20 0-18 0 2 0-7 1-8 0 10 0 12 0 34 0-29 0-45 0 58 0 4 0-15 1-3 0 8 0-5 0-6 0-17 0 31 0 4 0-29 1-9 0 53 0 24 0 2 0-33 0 11 0-45 0 12 0-15 1-6 0 9 0-4 0-24 0 24 0-22 0 64 0 13 0-58 1 62 0-50 0 14 0 10 0-33 0-3 0-1 0 3 1-5 0-21 0 6 0 46 0-3 0-1 0 14 0-2 0-7 1-31 0 16 0-25 0 24 0-7 0-32 0 34 0-12 1 8 0 14 0 9 0-22 0 12 0 11 0 2 0 41 0-19 1 11 0-23 0-10 0-16 0-20 0-9 0 7 0 8 0 14 1 15 0 3 0 18 0 14 0 5 0-34 0 22 1-8"/>
<path class="tv" transform="translate(.5 .5)" d="M328 663l36 0 61 0 126 0 190 0 41 0 230 0 7 0 49 0"/>
<rect x="105.5" y="499.5" width="1255" height="49" fill="#f00" fill-opacity=".1" stroke="#f00" stroke-opacity=".1" stroke-width="1.39"/>
<path class="pd" d="M162 666V380"/>
<path class="pd" d="M1303 666V380"/>
<path d="M162.12 523.57H1302.53" stroke="#ffa500" stroke-width="2.78" stroke-linecap="square" fill="none"/>
<path d="M104 523H1361.04" stroke="#f00" stroke-width="2.08" fill="none"/>
</g>
<path class="tk" d="M162.5 666.5V671.5M395.5 666.5V671.5M627.5 666.5V671.5M859.5 666.5V671.5M1092.5 666.5V671.5M1324.5 666.5V671.5"/>
<text x="163.31" y="687" text-anchor="middle">0</text>
<text x="394.71" y="687" text-anchor="middle">2000</text>
<text x="626.85" y="687" text-anchor="middle">4000</text>
<text x="859.76" y="687" text-anchor="middle">6000</text>
<text x="1091.76" y="687" text-anchor="middle">8000</text>
<text x="1324.38" y="687" text-anchor="middle">10000</text>
<path class="tk" d="M100.5 666.5H105.5M100.5 622.5H105.5M100.5 577.5H105.5M100.5 532.5H105.5M100.5 488.5H105.5M100.5 443.5H105.5M100.5 398.5H105.5"/>
<text x="95.01" y="672" text-anchor="end">7.86</text>
<text x="95.2" y="627" text-anchor="end">7.87</text>
<text x="95.26" y="582" text-anchor="end">7.88</text>
<text x="95.08" y="538" text-anchor="end">7.89</text>
<text x="95.21" y="493" text-anchor="end">7.90</text>
<text x="95.17" y="448" text-anchor="end">7.91</text>
<text x="94.95" y="404" text-anchor="end">7.92</text>
<rect class="sp" x="105.5" y="380.5" width="1380" height="286"/>
<text x="732.43" y="657" text-anchor="middle">11498</text>
<text x="794.79" y="372" text-anchor="middle" class="ti">Magnitude Estimates</text>
<path class="lf" d="M1368.28 435.5H1475.72Q1478.5 435.5 1478.5 432.72V390.28Q1478.5 387.5 1475.72 387.5H1368.28Q1365.5 387.5 1365.5 390.28V432.72Q1365.5 435.5 1368.28 435.5Z"/>
<path d="M1370.5 399.5H1398.5" stroke="#ffa500" stroke-width="2.78" stroke-linecap="square" fill="none"/>
<text x="1409.87" y="404">mag</text>
<text x="1440.22" y="406" class="sub">OBSID</text>
<path d="M1370 422H1398" stroke="#f00" stroke-width="2.08" stroke-linecap="square" fill="none"/>
<text x="1408.97" y="427">mag</text>
<path class="lf" d="M1351.28 659.5H1475.72Q1478.5 659.5 1478.5 656.72V616.28Q1478.5 613.5 1475.72 613.5H1351.28Q1348.5 613.5 1348.5 616.28V656.72Q1348.5 659.5 1351.28 659.5Z"/>
<path class="lm" style="marker-start:url(#mo)" d="M1367.5 626.5h0"/>
<text x="1392.41" y="630">Highlighted</text>
<path class="lm" style="marker-start:url(#mk)" d="M1367.5 647.5h0"/>
<text x="1392.59" y="651">OK</text>
<rect x="162.12" y="498.59" width="1140.41" height="50.23" fill="#ffa500" fill-opacity=".1" stroke="#ffa500" stroke-opacity=".1" stroke-width="1.39" clip-path="url(#c2)"/>
<g clip-path="url(#c3)">
<path class="m4" transform="translate(.5 .5)" d="M364 889l61 0 357 0 230 0 56 0-704-33 61 0 357 0 230 0 56 0"/>
<path class="gr" d="M105.5 921.5H1485.5M105.5 889.5H1485.5M105.5 856.5H1485.5M105.5 823.5H1485.5M105.5 791.5H1485.5M105.5 758.5H1485.5"/>
<path class="pd" d="M162 954V725"/>
<path class="pd" d="M1303 954V725"/>
</g>
<path class="tk" d="M100.5 921.5H105.5M100.5 889.5H105.5M100.5 856.5H105.5M100.5 823.5H105.5M100.5 791.5H105.5M100.5 758.5H105.5"/>
<text x="95.77" y="927" text-anchor="end">OBS not OK</text>
<text x="95.24" y="894" text-anchor="end">dr &gt; 5</text>
<text x="95.94" y="862" text-anchor="end">Ion. rad.</text>
<text x="94.89" y="829" text-anchor="end">Sat. pixel.</text>
<text x="95.31" y="796" text-anchor="end">not track</text>
<text x="95.16" y="763" text-anchor="end">not Kalman</text>
<rect class="sp" x="105.5" y="725.5" width="1380" height="229"/>
<g clip-path="url(#c4)">
<path class="m3" transform="translate(.5 .5)" d="M162 1005l0 0 0 0 0 0 1 0 0 0 0 0 0 1 0-1 0 1 0-1 0 1 1 0 0 0 0 0 0 0 0 0 0 0 0 0 0 0 0 1 1-1 0 1 0 0 0 0 0 0 0 1 1-1 0 0 0 1 0-1 0 1 0 0 0 0 0-1 1 1 1 0 0 0 0 0 0 0 1-1 0 0 0 1 0 0 0-1 1 0 0 0 0 0 0 1 0-1 0 1 1 0 0 0 1 0 0 0 0 0 0 1 1-1 0 1 0 0 0 0 0 0 0-1 0 1 1 0 0-1 0 1 0-1 1 0 0 0 0 1 0 0 0 0 1 0 0-1 0 1 0 0 0-1 1 1 0-1 0 0 1 1 0-1 0 0 0 0 0 1 1-1 0 0 0 1 0-1 0 1 0-1 0 1 1 0 1 0 0 0 0 0 0 0 0 0 1-1 0 1 0-1 0 0 0 0 0 1 0-1 0 0 0 0 2 0 0 0 0 0 0-1 0 0 0 0 0 1 1 0 0 0 0-1 0 0 0 0 1 1 0 0 0-1 1 0 0 0 0 0 0 1 0-1 0 0 0 1 1-1 0 0 0 1 0 0 1 0 0-1 0 1 0-1 0 1 1 0 0-1 0 0 0 1 0-1 1 1 0 0 0-1 0 0 1 0 0 1 0-1 0 1 0 0 1 0 0-1 0 0 0 1 1 0 0-1 0 0 0 0 1 0 0 1 0 0 0 0 0 0 0 0 0 0 0-1 0 0 2 1 0 0 0 0 0 0 0 1 0-1 0 0 0 0 0 0 1 1 0 0 0 0 0 0 0 0 0 0 0 0 0 0 0-1 2 0 0 1 0 0 0 0 0 0 1 0 0 0 0-1 0 1 0-1 0 0 0 0 0 0 1 0 1 0 0 0 0 1 0 0 0-1 0 1 1-1 0 0 0 1 0-1 1 1 0 0 0 0 0 0 0 0 1 0 0 0 1 0 0 0 0 0 0-1 0 1 0-1 0 0 0 1 0-1 2 0 0 0 0 0 0 0 0-1 1 0 0 1 0 0 0-1 0 1 0 0 0-1 0 0 0 0 2-1 0 1 0 0 0 0 1 0 1 0 0 0 0 1 0-1 0 1 0 0 1-1 0 0 0 1 0-1 1 1 0 0 0 0 0 0 0 0 1 0 0 0 0 0 0 0 0 1 0 0 0-1 0 0 0 1 1-1 0 1 1 0 0 0 0 0 0 0 0 0 1 0 0 0 0 0 0 0 0-1 0 0 0 1 0 0 0 0 1-1 0 0 0 0 0 0 1 0 0 0 1-1 0 1 0 0 0-1 0 0 0 0 0 1 0-1 1 1 0 0 0-1 0 0 1 0 0 0 0 0 0 1 0 0 1 0 0-1 0 1 1 0 0 0 1 0 0 1 0-1 0 0 1 1 0 0 0 0 0 0 0-1 0 1 1 0 0 0 0 0 0-1 0-1 1 1 0 0 0 0 0 0 0 0 0-1 0 1 0-1 0 0 1-1 1 1 0 0 1-1 0 1 0 0 0 0 0 0 1 1 0-1 0 1 0 0 0 0 0 0 0 0 0 0 0 0 1 1 0 0 0 0 0 0 1-1 0 0 0 0 0 1 1-1 0 1 0 0 0 0 0 0 1 0 1 0 0 0 0 0 0 0 1-1 0 1 0 0 0-1 0 0 0 0 0 1 0 0 0 0 1 0 0-1 1 0 0 0 0 0 0 0 1 0 1 0 0 0 0 0 0 0 1 0 0 0 1-1 0 1 0 0 0 0 0 0 0 0 0-1 0 1 1-1 0 0 0 0 0 1 0-1 1 1 0-1 1 0 0 1 0-1 0 0 0 0 1 1 0 0 0-1 0 0 0 1 1-1 0 0 0 0 0 1 1-1 0 1 0 0 0 0 0 0 0 0 1 1 1-1 0 0 0 0 1 0 0 0 0 0 0 0 1-1 0 0 0 1 0-1 0 1 0-1 0 0 0 0 1-1 1 1 0 0 0 0 0 0 0 0 0 0 0 0 0 1 0 0 1 0 0 0 0 0 0 0 1 0 1 0 0 0 0 0 0 0 0-1 1 0 0 1 0 0 0-1 0 0 0 0 0 0 1 0 0 0 0 0 0 0 0 0 0 0 0 1 0 0 1-1 0 1 0 0 1 1 0-1 0 1 0 0 1 0 0 0 0 0 0-1 0 0 1 0 0 0 0 0 1 0 0-1 0 0 0 0 0 0 0 1 0-1 0 0 0 0 1 1 0 0 0-1 0 1 1-1 0 1 0-1 0 0 0 1 1-1 0 0 0 1 0-1 0 1 1-1 0 1 0 0 1 1 0-1 1 0 0 0 1 0 0 0 0 0 0 0 0 0 0-1 0 1 0-1 0 0 1 0 0 0 1 0 0 0 0 0 0 1 0 0 0 0 0 0 0-1 0 0 1 1 1 0 0 0 0 0 0 0 1 0 1 0 0 0 0 0 0 0 1 1 0 0 0-1 1 0 0 0 0 0 0 0 1 1 0-1 1 0 0 0 0 0 0 0 1 0 1 0 0 0 0 1 0-1 0 0 1 1 0 0 0-1 1 0 0 0 0 0 0 0 1-1 0 1 0-1 0 1 1 0 0-1 0 1 0-1 0 1 0-1 0 0 1 0 1 0 0 0 0 0 0 0 0 1 1 0 0 0 0 0 0 0 0 0 0-1 1 0 0 0 0 1 0 0 0-1 0 0 1 0 0 0 0 0 0 0 0 0 0 0 0 1 0 0 1-1 0 1 0 0 1 0 0 0 0 0 0 0 0 0 0 0 0 1 0 0 0 0 1 0 1 0 0 0 0 0 0-1 0 1 0 0 1 0 0-1 0 0 0 1 0-1 0 1 0-1 0 1 0-1 2 0 0 0 0 0 0-1 0 0 1 1 0 0 0-1 0 0 0 0 0 1 0-1 1 0 0 0 0 0 0 0 0 0 0 0 0 0 0 1 1 0 0-1 0 1 0 0 0 0 0 0 1 0 0 1 1 0 0-1 0 1 0 0 0 0 0 0 0 0 0 0 0-1 1 0 0 0 0 1 0-1 1 1 0 0 0 0 0 0 0-1 0 0 1 1 0 0 0-1 0 0 1 0 0 0 1 0 0 0 1 0 0 0 1 0 0 0 1 0 0 0 1 0 0 0 1 0 0 0 1 1 0-1 0 1 0-1 0 0 0 1 1 0 0 0 0 0 0 0 0-1 1 1 0-1 0 0 0 0 0 0 0 0 1 1 0-1 0 0 0 1 0 0 0 0 1-1 0 0 0 0 0 1 0 0 1 0 0 0 0 0 0 0 0 0 0-1 1 1 0-1 0 0 0 0 0 0 0 0 1-1 0 0 0 1 0 0 0 0 1 0 0-1 0 1 0-1 0 0 0 0 1-1 0 2 1 0 0-1 1 0 0 0 0 0 0 0 0 1 1-1 0 0 0 1 0 0 1 0 0 0 0 0 0-1 0 0 1 1 0 0 0-1 0 0 0 0 1 0 0 0 0 0 0 1 0 0 1-1 0 0 0 1 0 0 1-1 0 0 0 1 0 0 0-1 1 0 0 1 0 0 1 0 0 0 1 1 0-1 0 0 1 0 0 0 1 0 0-1 0 1 0 0 1-1 0 0 0 0 0 1 0-1 0 1 1-1 0 1 0 0 0-1 1 0 0 0 0 1 0 0 0-1 1 0 0 0 0 1 0 0 1-1 0 0 0 0 0 1 0 0 1 1 0 0 1 0 0 0 0 0 0-1 0 1 0-1 1 1 0-1 0 0 0 0 0 0 1 0 0-1 0 1 0 0 0-1 1 0 0 0 0 0 0 0 0 1 1 0 0 0 0 0 0-1 0 0 0 1 0-1 0 1 1 0 1 0 0 0 0-1 0 1 1 0 0 0 0-1 1 0 0 0 0 1 0 0 1 0 0 0 1 1 0-1 0 0 0 0 0 1 0-1 0 0 0 1 1 0 0 0 0 0 0 0 0 0 0-1 1 0 0 0 0 0 1 1 0-1 0 1 0 0 0 0 0-1 0 1 0 0 0 0 1 0 0 0 0 0 0-1 0 0 1 1 0 0 0-1 0 0 1 0 0 0 1-1 0 1 0 0 1-1 0 0 0 1 0 0 0-1 1 1 0 0 1 0 0-1 0 1 1-1 0 1 0 0 1 0 0 0 0-1 0 1 0-1 1 0 0 0 0 0 0 0 0 0 0 1 1 0 0 0 0 0 0-1 0 1 0 0 2 0 0 1 0-1 0 0 1 1 1-1 0-1 0 1 0-1 0 1 0 0 0-1 0 1 0-1 1 0 1 0 0 0 0 0 0 0 0 1 1-1 0 0 0 0 0 0 0 0 0 0 0 1 0 0 0 0 1 0 0 0 0 0 0 0 0 1 0-1 0 1 0 0 1 0 1 0 0 0 0 0 0 0 0 0 1 0 0-1 0 1 0-1 1 0 0 1 0-1 0 1 0 0 0-1 0 0 1 1 0-1 0 1 0 0 0-1 1 1 0 0 0 0 0-1 1 0 0 0 0 0 0 0 0 0 0 0 1 0 0-1 0 0 0 0 0 0 0 0 0 0 1 0 0 0 0 1 0 0 1-1 0 1 0 0 0 0 1 0 1 0 0 0 0 0 0 0 0 0 1 0 0 0 0-1 0 0 0 0 0 0 0 1 0-1 1 0 1 0 0 0 0 0 0 0 0 0 0 0 0 1 0 0 1-1 0 1 0 0 0 0 0 0 1 0 0 0 0 0 0 0 1 1 0-1 0 1 1-1 0 0 0 0 0 1 0-1 0 1 0 0 0 0 1 0 0 0 0 0 0 0 0 0 0-1 1 1 0-1 0 0 0 0 0 0 1 1 0-1 1 0 0 0 0 0 0 0 1 1 0-1 1 0 0 0 0 0 0 0 1 0 1 0 0 0 0 0 0 0 1-1 0 1 1-1 0 0 0 1 0 0 0 0 0 0 1 0 0 0 0 0 0 0 0 0 0 0 0 1 0-1 0 0 1 1 0 0 0 0 0 0 0 0 0 0 0 0 0 0 2 0 0 0 0 0 0 0 1 0 0 0 1-1 0 1 0 0 0 0 0 0 0-1 0 0 0 0 0 0 1 0 0 0 0 0 0 0 0 0 0-1 0 0 0 0 1 0 1 0 0 0 0 0 0-1 1 0 0 0 0 0 0 0 0 1 0 0 0-1 1 0 0 0 0 1 1 0 0 0 0 1 1-1 0 0 0 1 0 0 0 0 0 0 0 0 0-1 0 1 1-1 1 1 0 0 0 0 0 0 0 0 0 0 1 1 0 0 0-1 0 0 0 1 0 0 1-1 0 0 0 0 0 1 1 0 0 0 0 0 0 0 0 0 0 0 0 0 0-1 1 0 0 0 0 0 0 0 0 0 1 0 0 0 1-1 0 0 0 1 0-1 0 1 0-1 0 1 1-1 0 1 1-1 0 1 0 0 0 0 0 0 0 0 1 0 0 0 0 0 0 1 0-1 0 0 0 0 0 1 0 0 1 0 1 0 0 0 0 0 0 0 0 0 1 0 0 0 1 0 0 0 0-1 0 0 0 1 0-1 0 0 0 0 0 0 1 0 0 0 1 1 0 0 0-1 0 0 0 1 0 0 0-1 1 1 0 0 0 0 0-1 0 1 0 0 0-1 0 1 1 0 0-1 1 0 0 0 0 0 0-1 0 0 0 0 0 0 0 0 0 0 1 0 1 0 0 0 0 1 0-1 0 0 0 0 0 0 0 1 1-1 0 1 0 0 0 0 0 0 1 0 0 0 1-1 0 0 0 1 0 0 0-1 0 0 1 0 0 0 0 0 0 1 0 0 1 0 0 0 1 0 0 0 0 1 0-1 0 1 0 0 0 0 0 0 0 0 1-1 0 0 0 1 1-1 0 1 0-1 0 1 0 0 0 0 1 0 0 0 0-1 0 0 1-1 0 0 0 1 0-1 0 0 1 1 0 0 0 0 0-1 0 0 1 1 0 0 0-1 0 0 1 0 0 0 0 0 0 0 0 0 0 1 1 0 0 0 0 0 0 0 0 0 0 0 1 1 1-1 0 0 0 0 0 0 0 0 0 0 1 0 1 1 0-1 0 0 1 1 0 0 0-1 0 0 0 0 1 0 0-1 0 0 1 1 0-1 0 1 0-1 0 0 0 0 0 1 1-1 1 0 0 0 0 0 0 0 1 0 0 0 0 0 0 0 0 0 0 0 0 0 0 0 1 1 0 0 0 0 0-1 0 1 0 0 0 0 0 0 1 1 1 0 0 0 0 0 0-1 0 0 1 0 0 0 0 0 0 0 1-1 0 1 1 0 0 0 0 0 0 0 1 0 0 0 1-1 0 0 0 0 0 1 0 0 0-1 1 0 0 1 0-1 0 1 0-1 1 1 0 0 1 0 0 0 1 1 0-1 0 1 0-1 0 1 0-1 1 1 0 0 0-1 0 1 0-1 0 1 1 0 0-1 0 1 1-1 0 0 0 0 0 0 0 0 0 0 0-1 0 0 0 0 1 0 1 0 0 0 0 0 0 0 0 0 1 0 0 0 0 1 0-1 0 1 0-1 0 1 0 0 0 0 1 1 1 0 0 0 0-1 0 1 0 0 0-1 1 0 0 0 0 0 0 0 1 0 0-1 0 1 0-1 0 0 0 0 0 0 0 0 0 0 1 0 0 0 0 0 0 0 0 1 0 0 1-1 0 1 0-1 0 1 1 0 0 0 1 0 0 0 1-1 0 0 0 1 0-1 0 1 1-1 0 1 0 0 1 0 0 0 1 1 0 0 0 0 0-1 0 1 0-1 1 1 0 0 0-1 0 0 1 0 0 0 1 0 0 0 0 0 0 0 1-1 1 1 0 0 0 0 0-1 0 1 0 0 0 0 0 0 0 0 1-1 1 1 0 0 0 0 0 0 1 0 1 0 0 0 0 0 0 0 1 1 0-1 1 1 0-1 0 0 0 0 0 1 0-1 1 0 0 1 0-1 0 1 0 0 1 0 0 0 0 0 0-1 0 0 1 1 0-1 0 0 1 0 0 0 0 0 0 0 1 0 0 1 0 0 0-1 0 1 0 0 0 0 0 0 0 0 2 0 0 0 0 0 0 0 0 0 0-1 1 0 0 0 0 0 0 1 1-1 0 0 0 1 0 0 0 0 1 0 0 0 0 0 0 0 0-1 0 0 1 1 0 0 0-1 0 0 1 0 0 0 1-1 0 1 0 0 1-1 0 1 0 0 0-1 0 1 0 0 0 0 0 0 0 0 1 0 0-1 0 0 0 0 1 0 0 0 0 1 1-1 0 0 0 1 0-1 0 1 0 0 0-1 0 1 0 0 1 0 0 0 0 0 0 0 0 0 0 0 0 0 0 0 1 1 0 0 0 0 0 0 0 0 0 0 0 0 0 0 0 0 1-1 0 1 0-1 1 0 0 1 0 0 0 0 0-1 0 0 0 0 0 1 1 0 0 0 0-1 1 0 0 0 0 0 0 0 1-1 0 1 1 0 0 0 0 0 0 0 1-1 0 0 0 1 0-1 0 1 0 0 0-1 0 0 1 0 1 0 0 0 0 0 1 0 0 0 0 0 0 1 0-1 0 1 0 0 0-1 0 0 1 0 0 1 0 0 0 0 2 0 0 0 0 0 0 0 0 0 0 0 0 0 0 0 0 0 1-1 0 1 0 0 0-1 0 0 0 1 0-1 0 1 1 0 0 0 0-1 1 0 0 0 0 0 0 0 1-1 0 1 1 0 0 0 0 0 0 0 1 1 0-1 0 1 0 0 0-1 0 1 0 0 0 0 0 0 2 0 0 0 0 0 0 0 0 0 1 0 1-1 0 0 0 1 0-1 0 1 0 0 1 0 0-1 0 1 1 0 0-1 1 1 0 0 0 0 0 0 0 0 0 0 1 0 1-1 0 1 0-1 0 1 0 0 0-1 0 0 1 1 0 0 0-1 1 0 0 1 0-1 0 0 0 0 0 0 0 0 0 0 1 1 0 0 0 0 0 0 0 0 0 0 1 0 1-1 0 1 0 0 1 0 0 0 0 0 0 0 0 0 0-1 0 0 0 1 0-1 1 0 0 0 1 1 0 0 0-1 0 1 0 0 0-1 1 1 0-1 0 1 0-1 1 1 0-1 0 1 0-1 0 0 1 0 0 0 0 1 0 0 1-1 0 1 0 0 1-1 0 1 0 0 1 0 0 0 1 1 0-1 0 0 1 1 0 0 0 0 0-1 0 1 0-1 0 0 0 0 2 0 0 0 0 0 0-1 0 0 0 0 0 0 0 0 0 0 1 0 1 0 0 0 0 0 0 0 0 0 0 1 0 0 0 0 1-1 0 1 1 0 0 0 0 0 0 0 0 0 1 1 0 0 0 0 0 0 0-1 0 1 1 0 0 0 0 0 0-1 0 0 0 0 1 0 1 0 0 0 0-1 0 0 0 0 0 0 0 0 0 0 0 0 1 0 0 0 0 0 0 0 0 0 0 1 0 0 0 0 1-1 1 2 0 0 0 0 0-1 0 1 0-1 1 1 0-1 0 0 0 1 1 0 0 0 0 0 0-1 0 0 1 0 0 0 1 0 0 0 0-1 0 1 0 0 0-1 0 0 0 1 0-1 1 0 1 0 0 0 0 0 0 0 1 0 0 0 0 0 0 0 0 0 0 1 0 0 0 0 0-1 1 0 0 1 0 0 1-1 0 1 0-1 0 1 1-1 0 1 0 0 1 1 0-1 1 1 0-1 0 0 1 0 0 0 0 0 1 0 0 0 1 0 0-1 0 1 0-1 0 1 0-1 0 1 0-1 0 1 1 0 0-1 1 0 0 0 0 0 0 0 0 1 1 0 0-1 0 1 0-1 0 1 0 0 1 0 0 0 0-1 0 1 0-1 1 0 0 0 0 0 0 1 0-1 0 1 1-1 0 0 0 1 1 0 0 0 0 0 0 0 0 0 0 0 0 0 0 1 1 0 0 0 0 0 0 0 0 0 0 0 0 0 0-1 1 0 0 1 0 0 1-1 0 1 0 0 0-1 0 0 0 0 0 0 0 0 0 0 1 1 0 0 0-1 1 1 0 0 0-1 0 0 0 0 1 0 0 1 0-1 0 1 0 0 1 0 0-1 0 0 0 1 1 0 0 0 0-1 0 0 1 0 0 0 0-1 0 1 0-1 0 0 0 0 0 0 2-1 0 0 0 0 0 0 0 1 1 0 0 0 0 0 0 0 0 0 0 0 0 1 0 0 1-1 0 1 0 0 0 0 0 0 1 1 0 0 0 0 0-1 0 0 1 0 0 0 0 1 0 0 1 0 0 0 0 0 0 0 0 0 0 0 0-1 0 0 1 1 0-1 0 0 1 1 0 0 0-1 0 0 1 0 0 0 1 0 0 0 1 0 0 0 1-1 0 1 0 0 0-1 0 1 1 0 0 0 0 0 0-1 0 0 0 0 0 0 1 0 1 0 0 0 0 0 0 0 1 1 0-1 0 1 0 0 0 0 0 0 0 0 0-1 0 1 1 1 0 0 0 0 1 0 0 0 0-1 0 1 0-1 1 0 0 0 0 0 0 0 1 0 1 0 0 0 0 0 0 0 0 1 1 0 0 0 0 0 0-1 1 0 0 0 0 0 0 0 1 0 1 0 0 0 0 0 0 0 1 0 0 0 0 0 0 0 2 0 0 0 0 0 0 0 0 0 0 0 0 0 0 0 0-1 1 0 0 0 0 0 0 0 1 1 0 0 0-1 0 1 0 0 1-1 0 2 0-2 1 2 1 0 0-1 0 0 0 0 0 1 0-1 1 0 0 1 0-1 0 0 1 1 0 0 0-1 0 0 0 1 0 0 0 0 0 0 1 0 0 0 0-1 0 1 0 0 0 0 0 0 0-1 0 1 1 0 0-1 0 0 1 0 0 0 1 0 0 0 1 0 0 0 1 0 0 0 0 0 0 0 0-1 1 0 0 1 0-1 0 0 0 0 0 0 0 1 0-1 2 0 0 0 0 0 0 0 0 0 0 0 2 0 0 0 0 0 0 0 0 0 0 0 2 0 0 0 0 0 0 0 0 0 0 0 1 0 0 1 0-1 0 1 0-1 0 0 0 1 0-1 0 1 1 1 1 0 0-1 0 0 0 1 0 0 0-1 0 1 0 0 1 0 0 0 0 0 0-1 0 1 1-1 0 0 0 1 0-1 0 0 0 0 1-1 0 0 0 1 0-1 0 0 1 1 0-1 0 0 0 1 1-1 0 0 0 0 0 1 0 0 0 0 1 0 1 0 0 0 0 0 0 0 0 0 1 0 1 0 0 0 0 0 0 1 1 0 0 0 0-1 1 0 0 0 0 0 0 0 0 0 1 0 0 0 0 0 0 0 0-1 1 1 0-1 0 1 0-1 0 0 0 0 0 0 0 0 0 0 1-1 1 1 0 0 0 0 0 1 0 0 0 0 0 0 0 0 0 0 1 1 0 0 0 0 0 0 0 0 0 0 0 0 1-1 0 1 0 0 0 0 0 0 0 0 0 0 0-1 1 0 0 0 0 0 0 0 1 0 1 0 0 0 0 0 0 0 1 1 1-1 0 0 0 0 0-1 0 1 0-1 0 0 0 0 1 0 0 0 0 1 1-1 0 0 0 0 0 1 0-1 0 1 0 0 0 0 1 1 0 0 1 0 0 0 0 0 0-1 0 0 0 1 0-1 1 1 0-1 0 1 0-1 1 1 0 0 0 0 0-1 0 0 1 0 0 0 1 0 0-1 0 0 0 0 0-1 0 2 0-1 0 0 0 0 1 0 0 0 0 0 0 0 0 0 0 1 0 0 1 0 0 0 0 0 0 0 0 0 0 0 0 1 0-1 1 0 0 1 0 0 0 0 0 0 0 0 0 0 0 0 0 0 1 0 1 0 0-1 0 1 0 0 0 0 0-1 0 1 0-1 0 0 1-1 1 0 0 0 0 0 0 0 0 1 0 0 1-1 0 1 0 0 0 0 0 0 1 1 1-1 0 0 0 0 0 0 1 0 1 0 0 0 0 0 0 0 1 0 1 1 0-1 0 0 0 0 0 0 1 0 0 0 0 0 0 0 0 0 0-1 0 1 0-1 0 0 1 0 0 0 1 0 0 0 0 0 0 0 0 1 1-1 0 0 0 1 0 0 0 0 0 0 0 0 0 0 0 0 1 1 0 0 1 0 0-1 0 0 1 0 0 0 0 0 0 0 1-1 0 1 1-1 0 1 0 0 0 0 0 0 1 0 1 0 0 0 0 0 0 0 1 0 0 0 1 0 0 0 0 0 0 1 0 0 0 0 0 0 0 0 1-1 0 1 0 0 0-1 0 1 0 0 1 0 0 0 0-1 0 0 1 0 0 0 1-1 0 0 0 0 0 1 0 0 1-1 0 1 0 0 1 0 0 0 1 0 0 1 0-1 1 0 0 0 1 0 0 0 1 0 0 0 1 0 0 0 1-1 0 1 0 0 1 0 0 1 1 0 0-1 0 0 0 0 1 1 0 0 0 0 0-1 0 0 0 0 0 1 1-1 0 0 0 0 0 1 1-1 0 1 0 0 0 0 0 0 1 0 1 0 0 0 0 0 0 0 0 0 0 0 0 0 0-1 0 0 1 0 0 0 0 0 0 0 1 1 0-1 1 0 0 0 0 0 0 0 1 1 0-1 0 1 1-1 0 0 0 0 0 0 1 1 0-1 0 0 1 1 0-1 0 0 0 0 0 1 0 0 1 0 0 0 0 0 0-1 0 1 0 0 0-1 0 0 0 1 2-1 0 0 0 0 0-1 0 1 0-1 0 0 0 0 0 0 1 0 1 0 0 0 0 0 1 0 0 0 0 0 0 0 0 1 0 0 0 0 0-1 0 1 1-1 1 1 0 1 0-1 0 1 1-1 0 1 0-1 0 1 0 0 0 0 0-1 1 0 0 0 0 1 0 0 1-1 0 1 0 0 0 0 0 0 0-1 0 1 0 0 1 0 0-1 0 0 1 0 0 0 1-1 0 1 1 0 0 0 0 1 1-1 0 0 0 1 0-1 0 0 0 1 0 0 0 0 0 0 1 0 1 0 0 0 0 0 1 0 0 0 1-1 0 1 0 0 0 0 0-1 0 0 1 1 0 0 0 0 0-1 1 0 0 0 0 0 0 0 0 0 1-1 0 1 0 0 0-1 0 0 0 0 0 0 0 0 0 0 1 1 0-1 1 1 0 0 0-1 0 0 1 0 0 0 0 0 1-1 0 1 1 0 0 0 0 0 0 0 0 0 1 1 0-1 0 0 0 0 0 1 0-1 0 0 0 1 0 0 1-7 0 8 1 0 0-1 0 0 0 0 0 0 0 1 0-1 0 1 0 0 1 0 0 0 0 0 0 0 0 0 0 0 0 0 0 0 2 0 0 0 0 0 0 0 1 0 0 0 0-1 0 0 0 0 0 1 0-1 0 1 1 0 0 0 0-1 1 0 0 0 0 0 0 0 1 0 1 0 0 0 0 0 0 0 1 1 0 0 0 0 0-1 0 1 0-1 1 1 0 0 0 0 0-1 0 0 0 1 1 0 0-1 0 0 1 0 0 0 1 0 0 0 1 1 0 0 0-1 0 0 1 0 0-1 0 1 0 0 1 0 0-1 0 0 0 1 0-1 0 0 0 0 0 0 0 0 1 1 0-1 0 0 1 0 0 0 0 1 0-1 0 1 0 0 0 0 0 0 0 0 1 0 0 1 0-1 0 0 0 0 0 0 0 1 0 0 1 0 1 0 0-1 0 1 0 0 0 0 0 0 1 0 0-1 0 0 0 1 0-1 0 0 0 0 0 0 1-1 1 0 0 0 0 1 0 0 1 0 0 0 0 0 0 0 1 0 1 1 0-2 0 0 1 1 0 0 0 0 0 0 0-1 0 0 0 0 0 0 1 0 0 0 0 0 0 0 1 0 0 1 0-1 0 1 0 0 0 0 0 0 0 0 0 0 1 1 0 0 0 0 0 0 0 0 1 0 0 0 0-1 0 1 0 0 0 0 0-1 0 1 1 0 0-1 0 0 0 0 0 0 2 0 0 0 0 0 0-1 0 1 0-1 1 0 0 0 0 1 0 0 1-1 0 0 1 1 0 0 0 0 0 0 0 0 0 1 0-1 0 0 0 1 1-1 0 1 0 0 0 0 0 0 1-1 0 1 0 0 1-1 0 1 0 0 0 0 0-1 0 0 1 1 0 0 0-1 0 1 1-1 0 0 0 0 0 0 0 0 1 1 0 0 0-1 0 0 1 1 0-1 0 1 0-1 0 1 1 0 0 0 0-1 0 0 1 0 0 0 1 0 0 0 0-1 1 0 0 1 0 0 1 0 0-1 0 1 1 0 0 0 1-1 0 1 0 0 0-1 0 1 1-1 0 0 0 0 0 0 0 1 0-1 0 0 1 0 0 1 0 0 0 0 0 0 0 0 1-1 0 1 1 0 0 0 0 0 1-1 0 0 0 1 0 0 1-1 0 0 0 0 0 1 0-1 0 1 1-1 0 0 0 1 0 0 1-1 0 0 0 1 0 0 0-1 1 1 0 0 0 0 0-1 0 1 0 0 1-1 0 0 0 0 0 0 0 0 1 0 0 1 0-1 0 1 0 0 0 0 0 0 0 0 0 0 1 1 1-1 0 1 0 0 0-1 0 1 0-1 1 1 0 0 0 0 0 0 0-1 1 0 0 0 0 0 0 0 0 0 1 0 1-1 0 0 0 0 0 1 0 0 0 0 1-1 0 0 0 1 1 0 0 0 0 0 0 0 0 0 1 1 0 0 0-1 1 0 0 0 0 0 1 0 0 0 0 0 1 1 0 0 0-1 0 0 0 1 0-1 1 0 0 0 0 1 1 0 0 0 0 0 0 0 0 0 0-3 1 3 1 0 0 0 0 0 0-1 1 1 0-1 0 0 0 0 0 0 0 0 0 1 0-1 1 1 0-1 1 1 0 0 0 0 0-1 0 0 1 1 0-1 0 0 0 0 1 0 0 1 1-1 0 0 0 0 0 0 0 0 1 0 1 0 0 0 0 0 1-1 0 1 0 0 0-1 1 0 0 0 0 1 0-1 0 1 1-1 0 0 0 1 0 0 1 0 0 0 1 0 0 0 1 0 0 0 0 1 1 0 0-1 0 0 0 0 1 0 0 0 0 1 0 0 0 0 0 0 0-1 0 1 1 0 0-1 0 0 0 1 1 0 0 0 0 0 0 0 0-1 0 0 1 0 0 0 1 1 0-1 0 0 1 1 0 0 0-1 0 0 1-1 0 0 0 0 0 1 1 0 0 0 0-1 0 0 0 1 0-1 1 0 0 0 0 0 1 1 0 0 0 0 0 1 0-1 0 0 1 1 0 0 1-1 0 0 0 0 0-1 1 1 0-1 0 1 0 0 0 0 0-1 0 1 0-1 0 0 1 1 0-1 1 1 0-1 0 0 0 0 0 0 0 0 0 0 0 0 0 1 1-1 0 1 0 0 0 0 1 1 0-1 1 1 0 0 0-1 0 0 0 0 0 1 0-1 1 0 1 0 0 0 0 0 0 1 0 0 0-1 1 0 0 1 0-1 1 0 0 1 0-1 0 1 0 0 0 0 0 0 1 0 0 0 0 0 0 0 0-1 0 0 1 0 0 0 0 1 1-1 0 0 1 0 0 0 1 1 0-1 0 0 1 1 0 0 0-1 0 0 1 1 0 0 0-1 0 0 1 0 0 0 0 0 0 0 0 0 0 0 0-1 0 1 0-1 1 0 0 0 0 0 0 0 1 0 0 0 1 1 0-1 0 0 0 0 0 0 0 1 0 0 0 0 0 0 2 1 0 0 0 0 0 0 0 0 0-1 0 0 1 0 0 0 0 0 0 0 1 0 0 0 0 1 0 0 1 0 0 0 0 0 0 0 0-1 0 0 1 1 0 0 0-1 0 0 1 0 0 0 1 0 0 0 1 1 0-1 0 0 1 0 0 0 1 0 0 0 1 0 0-1 0 1 1-1 0 0 0 1 0 0 1 0 0 0 1-1 0 1 0 0 0-1 1 0 0 0 0 0 0 1 0 0 1-1 0 1 0-1 0 1 1 0 0 0 0 0 0 0 1 1 0 0 1-1 0 0 0 0 0 0 0 0 0 1 0-1 0 0 0 0 1 1 0 0 1-1 0 0 0 0 0 0 0 0 0-1 0 1 0 0 1-1 0 0 0 0 0 0 0 0 0 0 0 0 0 0 1 0 1 0 0 0 0 0 0 0 0 0 0 1 0 0 0-1 0 1 1-1 0 1 0 0 1-1 0 1 1 0 0 0 0 0 0 0 0 0 0 0 1-1 1 1 0 0 0 0 0 0 0 0 0 0 1 0 1 0 0 0 0 1 0 0 0-1 0 1 1-1 0 1 0-1 0 1 0-1 1 0 0 0 0 0 0 1 0 0 1-1 0 0 0 1 0 0 1-1 0 1 0 0 0-1 1 0 0 0 0 1 0 0 1 0 0 0 1 0 0 0 1 0 0 0 1 0 0 0 0 0 0 0 0 0 0-1 0 0 0 0 0 0 2 0 0 0 0 0 0 0 0-1 1 1 1 0 0 0 0 0 0 0 1 0 1 0 0 0 0 0 0 0 1 0 1 1 0-1 0 0 0 0 0 0 1-1 0 0 0 1 0 0 0 0 0-1 0 0 0 0 0 0 1 0 1 0 0 0 0 1 0-1 0 1 1-1 0 1 0 0 0 0 0 0 0-1 1 0 0 0 0 1 1-1 0 0 0 1 0 0 0 0 0 0 1-1 0 1 0 0 0 0 2 0 0 0 0 0 0 0 0 0 0 0 0 0 0 0 0 0 1 1 0 0 0 0 0-1 1 0 0 0 0 0 0 1 0-1 1 0 0 1 0 0 0 0 0 0 0 0 1 0 0 0 0-1 0 0 0 0 0 0 1 0 1 0 0 0 0 0 0 0 1 0 0-1 1 0 0 0 0 1 0 0 0 0 0 0 1 0 1 0 0 0 0 0 0 0 1 1 0 0 0 0 0-1 1 0 0 1 0-1 0 0 0 0 1 0 0 1 0 0 0-1 0 1 0 0 1 0 0-1 0 0 0 1 1 0 0-1 0 0 1-1 0 1 0 0 0-1 0 0 0 0 0 0 0 0 0 0 1 0 0 1 0-1 0 1 1-1 0 0 0 0 0 1 0 0 1 0 0 0 1 0 0-1 0 1 0 0 0 0 0 0 0-1 0 1 0 0 1-1 0 0 0 0 0 0 1 0 0 0 1 0 0 0 0 0 0 1 0 0 0-1 0 1 0 0 0 0 1-1 0 1 1 0 0 0 0 0 1 0 0 0 0 0 1 0 0 0 0 1 0 0 0 0 0 0 0-1 0 1 1-1 0 0 0 1 0 0 1 0 0 0 0 0 0 0 0 0 0-1 1 0 0 0 0 0 0 0 0 0 0 0 1-1 0 0 0 1 0-1 0 1 0 0 2 0 0 1 0-1 0 1 0 0 0 0 0-1 0 1 1 0 0 0 0 0 0-1 0 0 0 1 1 0 0 0 0-1 1-1 0 1 0 0 1 0 0-1 0 1 0-1 0 1 0 0 0-1 1 1 0 0 0-1 1 0 0 0 0 0 0 0 0 0 1 0 1 0 0 0 0 0 1 0 0 0 0 0 0 1 0-1 0 0 0 1 0-1 1 1 0 0 0 0 0 0 1-1 0-2 0 3 1 0 0 0 0 0 0 0 1 0 0 0 0 0 0 0 0 0 0 0 0 0 0 0 0 0 2 0 0 0 0 0 1 0 0 0 1 1 0-1 0 0 1 1 0-1 0 0 0 0 1 1 0 0 0 0 0-1 0 1 0-1 0 1 0 0 1 0 0 0 0 0 0 0 0 0 0-1 0 1 1-1 0 0 0 0 0 0 0 0 0 0 1 0 0 0 0 0 0-1 0 0 0 0 0 0 0 0 1 0 1 0 0 0 0 0 0 0 0 0 0 0 0 1 0 0 1 0 0 0 0 0 0 0 1 1 0-1 1 1 0-1 0 0 0 0 0 0 1-1 0 0 0 0 1 0 0 1 0 0 0 0 0 0 1 0 1-1 0 1 0 0 0 0 0 0 1 0 0 0 0 0 0-1 0 0 0 0 0 1 0-1 1 0 0 0 1 0 0 0 0 0 0 0 0 0 0 0 0 1 0 0 1 0 0 0 0 0 0 0 1 1 0 0 0 0 0-1 0 0 0 0 0 1 0 0 1 0 0-1 0 1 1-1 0 0 0 0 0 0 0 0 1-1 0 0 0 0 0 0 0 1 0 0 1-1 0 0 0 0 0 0 0 0 0 1 1 0 0 0 0 0 0 0 0 0 0 0 1 0 1 1 0 0 0 0 0-1 0 0 0 1 1 0 0 0 0-1 0 0 0 0 2-1 0 1 0-1 0 1 1 0 0 0 0 0 0 0 1 0 0 0 1-1 0 1 0 0 0-1 0 0 0 1 1 0 0 0 0-1 0 0 1 0 0 0 0 0 0 0 0 1 0 0 1-1 0 0 0 1 0 0 1 1 1 0 0 0 0 0 0-1 0 0 1 0 0 0 0 0 0 0 1 0 1 0 0 0 0 0 0 0 1-1 0 1 0 0 0-1 0 0 1 1 0 0 0 0 0 0 0-1 1-1 0 1 1 0 0-1 0 0 0 1 1 0 0-1 0 1 0 0 1 0 0 0 0 0 0 0 0 0 0 0 0 0 0 1 0-1 1 0 0 1 0 0 0 0 0 0 0 0 0 0 0 0 0 0 2 0 0 0 0 0 0-1 0 1 1-1 0 0 0 0 0-1 0 1 0 1 1 0 0 0 0 0 0 0 1 1 0-1 0 0 0 0 2-1 0 1 0 0 0 0 0 0 0 0 1-1 0 1 0-1 0 1 0-1 1 0 0 0 0 1 0 0 0-1 1 0 0 0 0 0 0 1 0 0 1-1 0 0 0 1 0 0 1-1 0 1 0 0 1 0 0 0 1 1 0 0 0 0 0 0 0 0 0-1 1 0 0 0 0 0 0 0 0 0 0 0 1-1 1 1 0 0 0 0 0 0 0 0 0 0 1 0 0 0 0 0 0 1 0-1 0 1 0 0 0 0 0 0 1 0 1 0 0 0 0 0 1-1 0 1 0 0 0 0 0-1 0 0 0 0 0 0 1 0 1 0 0 0 0 0 1 0 0 1 0 0 0 0 0-1 0 1 0 0 0 0 1 0 0 0 0 0 0 0 0 0 0 0 0 0 0-1 0 0 1 0 0 0 1-1 0 0 0 0 0 1 0-1 0 0 0 1 1-1 0 0 0 0 0 1 0 0 0-1 1 1 0 0 1 0 0 0 1 0 0 0 1 0 0 1 0 0 0-1 0 0 0 1 1 0 0 0 0 0 0 0 0 0 0-1 0 0 1 1 0-1 1-1 0 0 0 1 0-1 0 0 0 1 0-1 0 0 1 0 0 0 0 0 0 0 0 1 1 0 0 0 0 0 0 0 0 0 0 0 1 0 0 0 0 0 2 0 0 0 0 0 0 0 0 0 0 0 0 0 0 0 0 0 2 0 0 0 0 0 1 0 1 0 0 0 0 0 0 0 0 0 1 0 0 0 1 1 0 0 0 0 0-1 0 0 0 1 1 0 0 0 0 0 0-1 0 0 1 1 0-1 0 0 1 1 0-1 0 0 1 1 0-1 0 0 0 1 1 0 0 0 0-1 0 0 1 0 0 0 0 0 0-1 0 1 0-1 1 1 0-1 0 1 0-1 0 0 0 0 1 0 1 0 0 0 0 0 0 1 0 0 0-1 1 1 0-1 0 1 0 0 0 0 0-1 1 1 0-1 0 1 0-1 1 0 0 1 0 0 0-1 0 1 0-1 1 0 0 1 0-1 0 0 0 0 1 1 0 0 0 0 0 0 0 0 1 0 0 0 1-1 0 1 0 0 0-1 0 0 1 0 0 1 0 0 1 1 0-1 1 0 0 1 0 0 0 0 0-1 1 1 0-1 0 0 0 1 0-1 1 0 1 0 0 0 0 0 0 0 0 0 1-1 0 1 1 0 0 0 0 0 1-1 0 1 1 0 0 0 0 0 0 0 0 0 1 0 1 0 0 0 0 0 1 0 0-1 1 1 0 0 0-1 0 1 0 0 0 0 2 1 0-1 0 0 0 0 1 0 1 0 0-1 0 0 0 1 0 0 1-1 0 0 0 0 0 0 0 1 1 0 0 0 0 0 0 0 0 0 0 1 0-1 0 0 1 0 0 1 0 0 0 0 0 0 0 0 0 0 0 0 0 0 2 0 0 0 0 0 0 0 1-1 0 1 0-1 0 1 0-1 1 1 0 0 0-1 0 0 0 1 1-1 0 0 0 1 0-1 0 0 0 1 1-1 0 0 0 1 0 0 1 0 0 0 1 0 0 0 1 0 0 0 0 0 1 0 0 0 0-1 0 1 0-1 0 0 0 0 0 0 1 1 0 0 0 0 0-1 1 0 0 1 0-1 0 0 0 0 1 0 0-1 0 0 0 0 0 0 0 0 0 0 0 0 0 0 1-1 1 0 0 1 0 0 1 0 0 0 0 0 0 0 0 0 0 0 1 1 0 0 0 0 0 0 0 0 0 0 0 0 0-1 1 1 0-1 0 1 0-1 1 0 0 0 0 1 0-1 0 1 1 0 0-1 0 1 1-1 0 0 0 0 0 0 0 0 0 1 1 0 0 0 0 0 0-1 0 1 0 0 0 0 0-1 1 1 1 0 0 0 1 0 0 0 0 0 1 0 0 0 0 1 0-1 0 0 2 0 0 0 0 0 0 1 0-1 0 0 0 0 0 0 0 0 1 1 0 0 0 0 0-1 0 1 1 0 0 0 0 0 0-1 0 0 1 1 0 0 0-1 0 0 0 0 2-1 0 0 0 1 0 0 1 0 0-1 0 1 0 0 0 0 0-1 1 0 0 0 0 1 1 0 0 0 0 0 0 0 1 0 0 0 0 0 0 1 0-1 0 0 0 1 0 0 1-1 0 1 1-1 0 1 0 0 0 0 0 0 0 0 1-1 0 0 0 1 0 0 0 0 0 0 0-1 0 0 2-1 0 1 0 0 0-1 0 0 1 1 0-1 0 1 0 0 0 0 1 0 0-1 0 1 1 0 0-1 0 1 0 0 0-1 0 0 0 0 0 0 1 1 0 0 0 0 0-1 1 0 0 0 0 0 0 1 0-1 1 0 0 1 0 0 0 0 0 0 0 0 1 0 0 0 0 0 0-1 0 0 0 0 0 0 2 0 0 0 0-1 0 0 0 1 0-1 0 0 1 0 0 0 1 1 0 0 0 0 0 0 0 0 0 1 0-1 0 0 0 0 1 1 0 1 0-1 0 0 0 0 1 0 1 0 0 0 0 0 0 0 1-1 0 0 0 0 0 1 0-1 0 1 1-1 0 0 0 0 0 1 1 0 0 0 0 0 0 0 0 0 0 0 1 0 1-1 0 1 0 0 0 0 0-1 1 0 0 1 0-1 0 0 0 0 0 1 1-1 0 0 0 1 0 0 1-1 0 0 0 1 0 0 0 0 0 0 2 0 0 1 0-1 0 1 0 0 0 0 0-1 0 1 0 0 1 0 0-1 0 1 0-1 1 1 0 0 0 0 0 0 0-1 1 0 0 0 0 0 0 0 0 0 0 0 1 0 0-1 0 0 0 0 0 0 0 1 0-1 0 0 1 0 0 0 0 0 0 0 0 0 0 1 0 0 0-1 1 0 0 1 0 0 1 1 0-1 0 0 0 1 0 0 1 0 0-1 0 1 0 0 0 0 0 0 0 0 0 0 1-1 0 0 0 0 0 0 0 1 0-1 0 0 1 1 1-1 0 0 0 0 0 0 0 0 0 0 1 1 0-1 0 0 1 0 0 0 0 1 0 0 0 0 0 0 0 0 0 0 0 0 1-1 0 1 0-1 1 1 0 0 0 0 0-1 0 0 1 0 0 0 0 1 0-1 0 1 1-1 0 0 0 0 0 1 1 0 0 0 0 0 0 0 0 0 0 0 2 0 0 0 0 0 0 0 0 0 0 0 1 0 0 0 0 0 0 0 0-1 0 0 0 0 0 0 0 0 2 0 0 0 0 0 0 0 0 0 0 0 0-1 0 1 0-1 1 0 0 0 0 0 0 0 1 0 0-1 0 1 0-1 0 1 0-1 1 0 0 0 0 1 0-1 0 0 0 1 1-1 0 0 0 1 1 0 0 0 0 0 0 1 0 0 0-1 0 1 0-1 0 1 2 0 0 0 0 0 0 0 0 1 0-1 0 1 0 0 0 0 1 0 1 0 0 0 0 0 0-1 0 1 0 0 0 0 0 0 1 0 0-1 0 0 0 0 0 0 0 0 0 0 0 0 0 0 1-1 0 0 0 0 1 0 0 1 1 0 0 0 0 0 0 0 0 0 0 1 0-1 1 1 0 0 0 0 0 0 0 0 0 0 0-1 0 1 1-1 0 0 0 1 1 0 0-1 0 1 0-1 0 0 1 1 0 0 0 0 0-1 0 1 0 0 0 0 1-1 0 0 0 0 0 0 0 0 1-1 0 0 0 0 0 1 1-1 0 0 0 1 0 0 0 0 1 0 0 1 0-1 0 1 0 0 0 0 0 0 0 0 1 0 0 0 0 0 0 0 1-1 0 1 0-1 0 1 0-1 0 0 0 0 0 0 0-1 1 1 0 0 0 0 0-1 0 0 0 0 0 0 0 0 1 0 1 0 0 0 0 0 0 0 0 0 0 0 0 0 0 0 1 1 0 0 0-1 0 1 0 0 0 0 0 0 0 0 2 0 0 0 0 0 0 0 0 0 1 1 0-1 1 0 0 0 0 0 1 0 1 0 0 0 0 0 0 0 0 0 1 0 0 1 1 0 0-1 0 0 0 1 0-1 1 0 1 0 0 0 0 0 0 0 0 0 1 0 0 1 1-1 0 0 0 0 1 0 1 0 0 0 0 0 0 0 0 0 1-1 0 0 0 0 0 0 0 1 1 0 0 0 0 0 1 0 0 0 1 0 0 0 0-1 0 0 1 0 0 1 0 0 0-1 0 1 0 0 2 1 0-1 0 0 0 0 0 1 0-1 0 1 1-1 0 0 0 1 0 0 0 0 1 0 0 0 0 0 0-1 0 0 1 1 0 0 0-1 0 1 0-1 1 0 0 0 1 0 0 0 0 1 1 0 0-1 0 0 1 1 0-2 1 0 0 1 0-1 0 1 0-1 0 1 1 0 0-1 0 0 0 1 1 0 0 0 0 0 0-1 0 0 1 1 0-1 0 1 0-1 0 1 1 0 0-1 0 0 1 1 0 0 0-1 0 1 0-1 0 0 0 0 0 0 1 0 0 1 0 0 1 0 0 0 0 0 0-1 0 0 0 0 1 1 0 0 0-1 0 0 0 0 1 1 0-1 0 1 0-1 0 1 0 0 0-1 0 1 1 0"/>
<path class="tu" transform="translate(.5 .5)" d="M364 957l61 0 357 0 230 0 56 0"/>
<path class="gr" d="M105.5 1009.5H1485.5M105.5 983.5H1485.5M105.5 957.5H1485.5"/>
<path class="pd" d="M162 1011V954"/>
<path class="pd" d="M1303 1011V954"/>
</g>
<path class="tk" d="M162.5 1011.5V1016.5M395.5 1011.5V1016.5M627.5 1011.5V1016.5M859.5 1011.5V1016.5M1092.5 1011.5V1016.5M1324.5 1011.5V1016.5"/>
<text x="163.31" y="1032" text-anchor="middle">0</text>
<text x="394.71" y="1032" text-anchor="middle">2000</text>
<text x="626.85" y="1032" text-anchor="middle">4000</text>
<text x="859.76" y="1032" text-anchor="middle">6000</text>
<text x="1091.76" y="1032" text-anchor="middle">8000</text>
<text x="1324.38" y="1032" text-anchor="middle">10000</text>
<path class="tk" d="M100.5 1009.5H105.5M100.5 983.5H105.5M100.5 957.5H105.5M102.5 996.5H105.5M102.5 970.5H105.5"/>
<text x="96.81" y="1014" text-anchor="end">0</text>
<text x="95.79" y="988" text-anchor="end">5</text>
<text x="95.25" y="962" text-anchor="end">10</text>
<rect class="sp" x="105.5" y="954.5" width="1380" height="57"/>
<text transform="translate(69 983.97) rotate(-90)" text-anchor="middle">dr</text>
</svg>
</body></html>
